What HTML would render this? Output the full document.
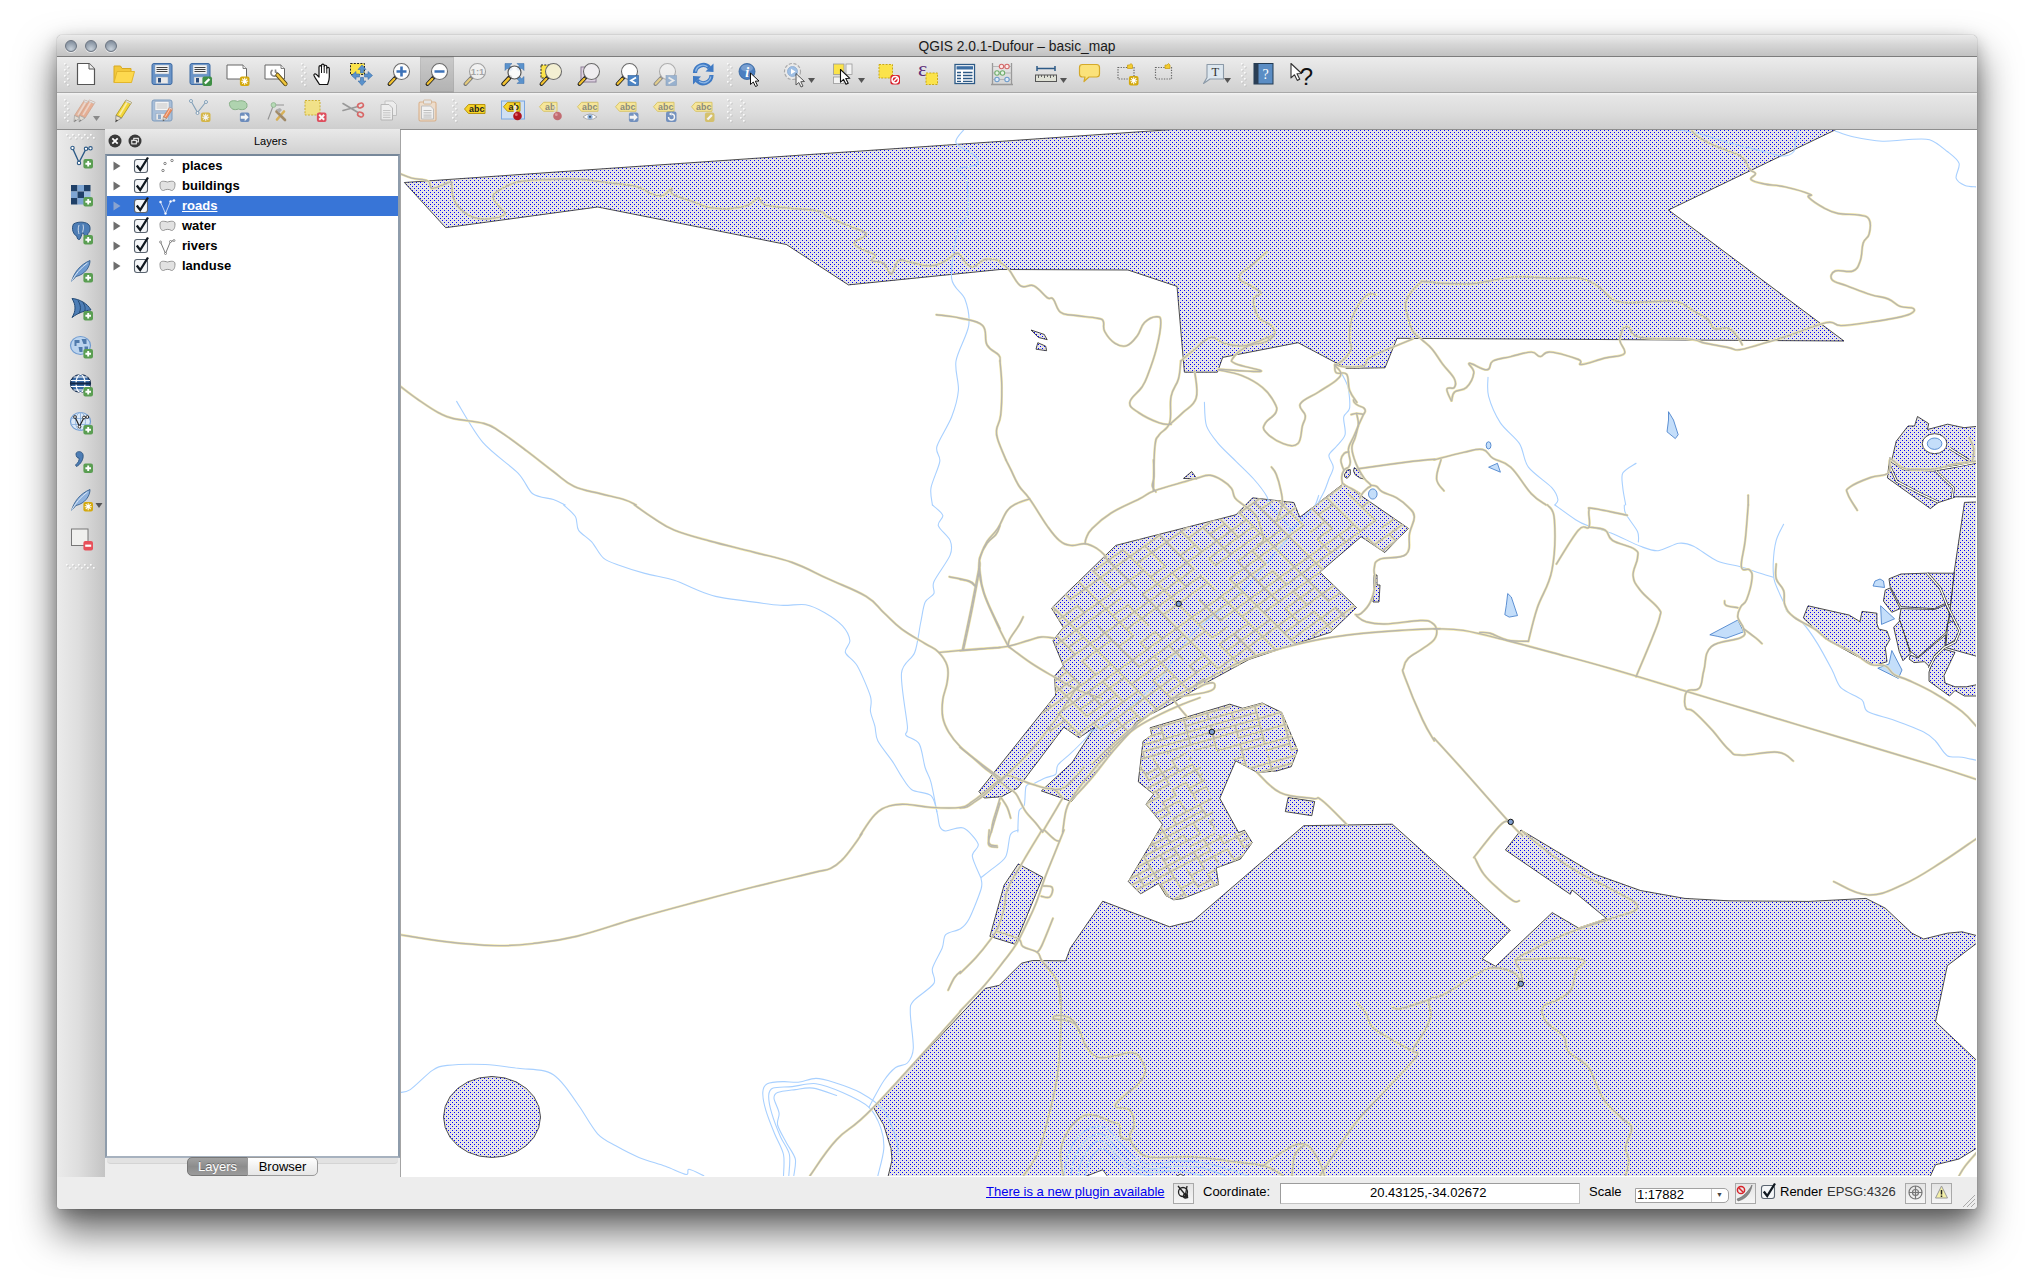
<!DOCTYPE html>
<html lang="en"><head><meta charset="utf-8"><title>QGIS 2.0.1-Dufour - basic_map</title>
<style>

html,body{margin:0;padding:0;background:#fff;}
body{width:2034px;height:1288px;overflow:hidden;position:relative;font-family:"Liberation Sans",sans-serif;color:#000;}
.win{position:absolute;left:57px;top:35px;width:1920px;height:1174px;background:#ededed;border-radius:5px 5px 4px 4px;
 box-shadow:0 0 1px rgba(0,0,0,.55),0 22px 38px 2px rgba(0,0,0,.56),0 6px 16px rgba(0,0,0,.24);overflow:hidden;}
.abs{position:absolute;}
.inner{position:absolute;left:0;top:-1px;width:1920px;height:1175px;}
.title{left:0;top:1px;width:1920px;height:21px;background:linear-gradient(#ebebeb,#d6d6d6 45%,#c2c2c2);border-bottom:1px solid #7c7c7c;
 text-align:center;font-size:13.8px;line-height:23px;color:#1a1a1a;}
.tl{position:absolute;top:5px;width:12px;height:12px;border-radius:6px;box-sizing:border-box;border:1px solid #6b7480;
 background:radial-gradient(circle at 50% 80%,#c7d0d9,#8c98a6 70%,#7e8a98);box-shadow:0 1px 0 rgba(255,255,255,.6);}
.tb1{left:0;top:23px;width:1920px;height:35px;background:linear-gradient(#ececec,#dedede 50%,#d0d0d0);border-bottom:1px solid #a8a8a8;}
.tb2{left:0;top:59px;width:1920px;height:36px;background:linear-gradient(#f4f4f4 0,#e6e6e6 8%,#dcdcdc 55%,#cecece);border-bottom:1px solid #8e8e8e;}
.ltb{left:0;top:96px;width:48px;height:1047px;background:linear-gradient(90deg,#ebebeb,#dedede 45%,#c4c4c4);}
.lhead{left:48px;top:95px;width:259px;padding-left:36px;height:26px;background:linear-gradient(#e9e9e9,#dadada 60%,#cfcfcf);text-align:center;font-size:11px;line-height:24px;}
.lhead span{position:relative;left:0px;}
.llist{left:48px;top:120px;width:291px;height:1000px;background:#fff;border:2px solid #8e9cab;border-top-color:#76879a;border-bottom-color:#a7b2bf;}
.row{position:absolute;left:0;width:291px;height:20px;font-weight:bold;font-size:13px;line-height:20px;}
.row b{position:absolute;left:75px;top:0;font-weight:bold;}
.row.sel{background:#3875d7;color:#fff;}
.row.sel b{text-decoration:underline;}
.tabline{left:50px;top:1124px;width:291px;height:5px;background:#e2e2e2;border-radius:0 0 4px 4px;border-bottom:1px solid #d4d4d4;}
.tab{top:1123px;height:19px;font-size:13px;line-height:18px;text-align:center;border:1px solid #9a9a9a;box-sizing:border-box;}
.tabA{left:130px;width:61px;background:linear-gradient(#a2a2a2,#8c8c8c 50%,#9c9c9c);color:#fff;border-radius:5px 0 0 5px;border-color:#777;text-shadow:0 -1px 0 rgba(0,0,0,.3);}
.tabB{left:190px;width:71px;background:linear-gradient(#fff,#f1f1f1 50%,#e6e6e6);border-radius:0 5px 5px 0;}
.mapframe{left:343px;top:96px;width:1577px;height:1048px;background:#fff;border-left:1px solid #a4a4a4;border-bottom:1px solid #a0a0a0;box-sizing:border-box;}
.status{left:0;top:1143px;width:1920px;height:32px;background:#ededed;border-top:1px solid #ededed;box-sizing:border-box;font-size:13px;}
.status span,.status a{position:absolute;top:6px;line-height:16px;white-space:nowrap;}
.status a{color:#0000ee;text-decoration:underline;}
.box{position:absolute;box-sizing:border-box;border:1px solid #a9a9a9;background:linear-gradient(#e4e4e4,#f6f6f6);}
svg.map{position:absolute;left:401px;top:130px;}
svg.ico{position:absolute;left:0;top:0;}
</style></head><body>
<div class="win"><div class="inner">
<div class="abs title">QGIS 2.0.1-Dufour – basic_map<i class="tl" style="left:8px"></i><i class="tl" style="left:28px"></i><i class="tl" style="left:48px"></i></div>
<div class="abs tb1"></div><div class="abs tb2"></div>
<div class="abs ltb"></div>
<div class="abs lhead"><span>Layers</span></div>
<div class="abs llist">
<div class="row" style="top:0px"><svg width="72" height="20" viewBox="0 0 72 20" style="position:absolute;left:0;top:0"><path d="M6.500,5.500 L13.500,10 L6.500,14.500 Z" fill="#6e6e6e"/><rect x="27.500" y="3.500" width="13" height="13" rx="2.500" fill="#f4f6f8" stroke="#5a6470" stroke-width="1.100"/><path d="M29.800,9.500 L33.200,14 L41,1.500" fill="none" stroke="#101820" stroke-width="2.300" stroke-linejoin="miter"/><g transform="translate(51 2)"><g fill="#fff" stroke="#555" stroke-width=".7"><circle cx="5" cy="12.500" r="1.200"/><circle cx="7" cy="5.500" r="1.200"/><circle cx="14" cy="2.500" r="1.200"/></g></g></svg><b>places</b></div>
<div class="row" style="top:20px"><svg width="72" height="20" viewBox="0 0 72 20" style="position:absolute;left:0;top:0"><path d="M6.500,5.500 L13.500,10 L6.500,14.500 Z" fill="#6e6e6e"/><rect x="27.500" y="3.500" width="13" height="13" rx="2.500" fill="#f4f6f8" stroke="#5a6470" stroke-width="1.100"/><path d="M29.800,9.500 L33.200,14 L41,1.500" fill="none" stroke="#101820" stroke-width="2.300" stroke-linejoin="miter"/><g transform="translate(51 2)"><path d="M2,6 C2,2.500 6,3 9.500,4 C13,3 17,2.500 17,6 C17,9.500 16,12.500 13.500,12.500 C11.500,11 8,11 5.500,12.500 C2.500,12.500 2,9.500 2,6 Z" fill="#e2e2e2" stroke="#8a8a8a" stroke-width=".9"/></g></svg><b>buildings</b></div>
<div class="row sel" style="top:40px"><svg width="72" height="20" viewBox="0 0 72 20" style="position:absolute;left:0;top:0"><path d="M6.500,5.500 L13.500,10 L6.500,14.500 Z" fill="#8aa3cf"/><rect x="27.500" y="3.500" width="13" height="13" rx="2.500" fill="#f4f6f8" stroke="#5a6470" stroke-width="1.100"/><path d="M29.800,9.500 L33.200,14 L41,1.500" fill="none" stroke="#101820" stroke-width="2.300" stroke-linejoin="miter"/><g transform="translate(51 2)"><path d="M2.500,4 L7.500,15.500 L12.500,3.500 L16,2.500" fill="none" stroke="#e8eefc" stroke-width=".8"/><g fill="#fff" stroke="#e8eefc" stroke-width=".6"><circle cx="2.500" cy="4" r="1"/><circle cx="7.500" cy="15.500" r="1"/><circle cx="12.500" cy="3.500" r="1"/><circle cx="16" cy="2.500" r="1"/></g></g></svg><b>roads</b></div>
<div class="row" style="top:60px"><svg width="72" height="20" viewBox="0 0 72 20" style="position:absolute;left:0;top:0"><path d="M6.500,5.500 L13.500,10 L6.500,14.500 Z" fill="#6e6e6e"/><rect x="27.500" y="3.500" width="13" height="13" rx="2.500" fill="#f4f6f8" stroke="#5a6470" stroke-width="1.100"/><path d="M29.800,9.500 L33.200,14 L41,1.500" fill="none" stroke="#101820" stroke-width="2.300" stroke-linejoin="miter"/><g transform="translate(51 2)"><path d="M2,6 C2,2.500 6,3 9.500,4 C13,3 17,2.500 17,6 C17,9.500 16,12.500 13.500,12.500 C11.500,11 8,11 5.500,12.500 C2.500,12.500 2,9.500 2,6 Z" fill="#e2e2e2" stroke="#8a8a8a" stroke-width=".9"/></g></svg><b>water</b></div>
<div class="row" style="top:80px"><svg width="72" height="20" viewBox="0 0 72 20" style="position:absolute;left:0;top:0"><path d="M6.500,5.500 L13.500,10 L6.500,14.500 Z" fill="#6e6e6e"/><rect x="27.500" y="3.500" width="13" height="13" rx="2.500" fill="#f4f6f8" stroke="#5a6470" stroke-width="1.100"/><path d="M29.800,9.500 L33.200,14 L41,1.500" fill="none" stroke="#101820" stroke-width="2.300" stroke-linejoin="miter"/><g transform="translate(51 2)"><path d="M2.500,4 L7.500,15.500 L12.500,3.500 L16,2.500" fill="none" stroke="#555" stroke-width=".8"/><g fill="#fff" stroke="#555" stroke-width=".6"><circle cx="2.500" cy="4" r="1"/><circle cx="7.500" cy="15.500" r="1"/><circle cx="12.500" cy="3.500" r="1"/><circle cx="16" cy="2.500" r="1"/></g></g></svg><b>rivers</b></div>
<div class="row" style="top:100px"><svg width="72" height="20" viewBox="0 0 72 20" style="position:absolute;left:0;top:0"><path d="M6.500,5.500 L13.500,10 L6.500,14.500 Z" fill="#6e6e6e"/><rect x="27.500" y="3.500" width="13" height="13" rx="2.500" fill="#f4f6f8" stroke="#5a6470" stroke-width="1.100"/><path d="M29.800,9.500 L33.200,14 L41,1.500" fill="none" stroke="#101820" stroke-width="2.300" stroke-linejoin="miter"/><g transform="translate(51 2)"><path d="M2,6 C2,2.500 6,3 9.500,4 C13,3 17,2.500 17,6 C17,9.500 16,12.500 13.500,12.500 C11.500,11 8,11 5.500,12.500 C2.500,12.500 2,9.500 2,6 Z" fill="#e2e2e2" stroke="#8a8a8a" stroke-width=".9"/></g></svg><b>landuse</b></div>
</div>
<div class="abs tabline"></div><div class="abs tab tabA">Layers</div><div class="abs tab tabB">Browser</div>
<div class="abs mapframe"></div>
<div class="abs status"><a style="left:929px">There is a new plugin available</a><i class="box" style="left:1116px;top:5px;width:21px;height:21px"></i><span style="left:1146px">Coordinate:</span><i class="box" style="left:1223px;top:5px;width:300px;height:21px;background:#fff;border-color:#9c9c9c #c4c4c4 #c4c4c4 #9c9c9c"></i><span style="left:1313px;top:7px">20.43125,-34.02672</span><span style="left:1532px">Scale</span><i class="box" style="left:1578px;top:10px;width:94px;height:15px;background:#fff;border-radius:0 5px 5px 0;border-color:#a2a2a2"></i><span style="left:1580px;top:9px">1:17882</span><span style="left:1659px;top:9px;font-size:7px;color:#444">▼</span><i style="position:absolute;left:1654px;top:11px;width:1px;height:13px;background:#c8c8c8"></i><i class="box" style="left:1678px;top:5px;width:21px;height:21px"></i><span style="left:1723px">Render</span><span style="left:1770px;color:#333">EPSG:4326</span><i class="box" style="left:1848px;top:5px;width:21px;height:21px"></i><i class="box" style="left:1874px;top:5px;width:21px;height:21px"></i><svg width="1920" height="32" viewBox="57 1177 1920 32" style="position:absolute;left:0;top:-1px"><g fill="none" stroke="#222" stroke-width="1.300"><circle cx="1183" cy="1192" r="4.500"/><path d="M1178,1186 l10,12 M1187,1186 l-2,12"/><circle cx="1185.500" cy="1196" r="2"/></g><path d="M1737,1199 C1743,1197 1748,1192 1752,1185 C1751,1193 1746,1199 1738,1201 Z" fill="#888" stroke="#666" stroke-width=".600"/><circle cx="1741" cy="1190" r="3.600" fill="none" stroke="#d8232a" stroke-width="1.500"/><path d="M1738.500,1187.500 l5,5" stroke="#d8232a" stroke-width="1.500"/><rect x="1761.500" y="1185.500" width="13" height="13" rx="2.500" fill="#f4f6f8" stroke="#5a6470" stroke-width="1.100"/><path d="M1763.800,1191.500 L1767.200,1196 L1775,1183.500" fill="none" stroke="#101820" stroke-width="2.300"/><g fill="none" stroke="#777" stroke-width="1.200"><circle cx="1915.500" cy="1192.500" r="6.500"/><circle cx="1915.500" cy="1192.500" r="3"/><path d="M1909,1192.500 h13 M1915.500,1186 v13"/></g><path d="M1941.500,1186 L1947.500,1198 H1935.500 Z" fill="#f4f0a8" stroke="#999" stroke-width="1" stroke-linejoin="round"/><path d="M1941.500,1190 v4.500 M1941.500,1195.500 v1.500" stroke="#222" stroke-width="1.500"/><path d="M1963,1207 l12,-12 M1967,1207 l8,-8 M1971,1207 l4,-4" stroke="#aaa" stroke-width="1"/></svg></div>
<svg class="ico" width="400" height="30" viewBox="57 126 400 30" style="left:0;top:92px"><circle cx="115" cy="141" r="6.500" fill="#3a3a3a"/><path d="M112.300,138.300 l5.400,5.400 M117.700,138.300 l-5.400,5.400" stroke="#fff" stroke-width="1.800"/><circle cx="135" cy="141" r="6.500" fill="#3a3a3a"/><rect x="133.800" y="138.300" width="4.500" height="3.600" fill="none" stroke="#fff" stroke-width="1"/><rect x="131.800" y="140.300" width="4.500" height="3.600" fill="#3a3a3a" stroke="#fff" stroke-width="1"/></svg>
<svg class="ico" width="1920" height="1175" viewBox="57 34 1920 1175">
<rect x="420.500" y="57" width="33" height="35" fill="#000" opacity=".14"/><rect x="420.500" y="57" width="33" height="35" fill="none" stroke="#000" stroke-opacity=".12"/>
<g><rect x="64.8" y="63.8" width="1.6" height="1.6" fill="#b9b9b9"/><rect x="64" y="63" width="1.7" height="1.7" fill="#fbfbfb"/><rect x="67.8" y="66.8" width="1.6" height="1.6" fill="#b9b9b9"/><rect x="67" y="66" width="1.7" height="1.7" fill="#fbfbfb"/><rect x="64.8" y="69.8" width="1.6" height="1.6" fill="#b9b9b9"/><rect x="64" y="69" width="1.7" height="1.7" fill="#fbfbfb"/><rect x="67.8" y="72.8" width="1.6" height="1.6" fill="#b9b9b9"/><rect x="67" y="72" width="1.7" height="1.7" fill="#fbfbfb"/><rect x="64.8" y="75.8" width="1.6" height="1.6" fill="#b9b9b9"/><rect x="64" y="75" width="1.7" height="1.7" fill="#fbfbfb"/><rect x="67.8" y="78.8" width="1.6" height="1.6" fill="#b9b9b9"/><rect x="67" y="78" width="1.7" height="1.7" fill="#fbfbfb"/><rect x="64.8" y="81.8" width="1.6" height="1.6" fill="#b9b9b9"/><rect x="64" y="81" width="1.7" height="1.7" fill="#fbfbfb"/><rect x="67.8" y="84.8" width="1.6" height="1.6" fill="#b9b9b9"/><rect x="67" y="84" width="1.7" height="1.7" fill="#fbfbfb"/></g><g><rect x="301.8" y="63.8" width="1.6" height="1.6" fill="#b9b9b9"/><rect x="301" y="63" width="1.7" height="1.7" fill="#fbfbfb"/><rect x="304.8" y="66.8" width="1.6" height="1.6" fill="#b9b9b9"/><rect x="304" y="66" width="1.7" height="1.7" fill="#fbfbfb"/><rect x="301.8" y="69.8" width="1.6" height="1.6" fill="#b9b9b9"/><rect x="301" y="69" width="1.7" height="1.7" fill="#fbfbfb"/><rect x="304.8" y="72.8" width="1.6" height="1.6" fill="#b9b9b9"/><rect x="304" y="72" width="1.7" height="1.7" fill="#fbfbfb"/><rect x="301.8" y="75.8" width="1.6" height="1.6" fill="#b9b9b9"/><rect x="301" y="75" width="1.7" height="1.7" fill="#fbfbfb"/><rect x="304.8" y="78.8" width="1.6" height="1.6" fill="#b9b9b9"/><rect x="304" y="78" width="1.7" height="1.7" fill="#fbfbfb"/><rect x="301.8" y="81.8" width="1.6" height="1.6" fill="#b9b9b9"/><rect x="301" y="81" width="1.7" height="1.7" fill="#fbfbfb"/><rect x="304.8" y="84.8" width="1.6" height="1.6" fill="#b9b9b9"/><rect x="304" y="84" width="1.7" height="1.7" fill="#fbfbfb"/></g><g><rect x="727.8" y="63.8" width="1.6" height="1.6" fill="#b9b9b9"/><rect x="727" y="63" width="1.7" height="1.7" fill="#fbfbfb"/><rect x="730.8" y="66.8" width="1.6" height="1.6" fill="#b9b9b9"/><rect x="730" y="66" width="1.7" height="1.7" fill="#fbfbfb"/><rect x="727.8" y="69.8" width="1.6" height="1.6" fill="#b9b9b9"/><rect x="727" y="69" width="1.7" height="1.7" fill="#fbfbfb"/><rect x="730.8" y="72.8" width="1.6" height="1.6" fill="#b9b9b9"/><rect x="730" y="72" width="1.7" height="1.7" fill="#fbfbfb"/><rect x="727.8" y="75.8" width="1.6" height="1.6" fill="#b9b9b9"/><rect x="727" y="75" width="1.7" height="1.7" fill="#fbfbfb"/><rect x="730.8" y="78.8" width="1.6" height="1.6" fill="#b9b9b9"/><rect x="730" y="78" width="1.7" height="1.7" fill="#fbfbfb"/><rect x="727.8" y="81.8" width="1.6" height="1.6" fill="#b9b9b9"/><rect x="727" y="81" width="1.7" height="1.7" fill="#fbfbfb"/><rect x="730.8" y="84.8" width="1.6" height="1.6" fill="#b9b9b9"/><rect x="730" y="84" width="1.7" height="1.7" fill="#fbfbfb"/></g><g><rect x="1241.8" y="63.8" width="1.6" height="1.6" fill="#b9b9b9"/><rect x="1241" y="63" width="1.7" height="1.7" fill="#fbfbfb"/><rect x="1244.8" y="66.8" width="1.6" height="1.6" fill="#b9b9b9"/><rect x="1244" y="66" width="1.7" height="1.7" fill="#fbfbfb"/><rect x="1241.8" y="69.8" width="1.6" height="1.6" fill="#b9b9b9"/><rect x="1241" y="69" width="1.7" height="1.7" fill="#fbfbfb"/><rect x="1244.8" y="72.8" width="1.6" height="1.6" fill="#b9b9b9"/><rect x="1244" y="72" width="1.7" height="1.7" fill="#fbfbfb"/><rect x="1241.8" y="75.8" width="1.6" height="1.6" fill="#b9b9b9"/><rect x="1241" y="75" width="1.7" height="1.7" fill="#fbfbfb"/><rect x="1244.8" y="78.8" width="1.6" height="1.6" fill="#b9b9b9"/><rect x="1244" y="78" width="1.7" height="1.7" fill="#fbfbfb"/><rect x="1241.8" y="81.8" width="1.6" height="1.6" fill="#b9b9b9"/><rect x="1241" y="81" width="1.7" height="1.7" fill="#fbfbfb"/><rect x="1244.8" y="84.8" width="1.6" height="1.6" fill="#b9b9b9"/><rect x="1244" y="84" width="1.7" height="1.7" fill="#fbfbfb"/></g><g><rect x="64.8" y="99.8" width="1.6" height="1.6" fill="#b9b9b9"/><rect x="64" y="99" width="1.7" height="1.7" fill="#fbfbfb"/><rect x="67.8" y="102.8" width="1.6" height="1.6" fill="#b9b9b9"/><rect x="67" y="102" width="1.7" height="1.7" fill="#fbfbfb"/><rect x="64.8" y="105.8" width="1.6" height="1.6" fill="#b9b9b9"/><rect x="64" y="105" width="1.7" height="1.7" fill="#fbfbfb"/><rect x="67.8" y="108.8" width="1.6" height="1.6" fill="#b9b9b9"/><rect x="67" y="108" width="1.7" height="1.7" fill="#fbfbfb"/><rect x="64.8" y="111.8" width="1.6" height="1.6" fill="#b9b9b9"/><rect x="64" y="111" width="1.7" height="1.7" fill="#fbfbfb"/><rect x="67.8" y="114.8" width="1.6" height="1.6" fill="#b9b9b9"/><rect x="67" y="114" width="1.7" height="1.7" fill="#fbfbfb"/><rect x="64.8" y="117.8" width="1.6" height="1.6" fill="#b9b9b9"/><rect x="64" y="117" width="1.7" height="1.7" fill="#fbfbfb"/><rect x="67.8" y="120.8" width="1.6" height="1.6" fill="#b9b9b9"/><rect x="67" y="120" width="1.7" height="1.7" fill="#fbfbfb"/></g><g><rect x="452.8" y="99.8" width="1.6" height="1.6" fill="#b9b9b9"/><rect x="452" y="99" width="1.7" height="1.7" fill="#fbfbfb"/><rect x="455.8" y="102.8" width="1.6" height="1.6" fill="#b9b9b9"/><rect x="455" y="102" width="1.7" height="1.7" fill="#fbfbfb"/><rect x="452.8" y="105.8" width="1.6" height="1.6" fill="#b9b9b9"/><rect x="452" y="105" width="1.7" height="1.7" fill="#fbfbfb"/><rect x="455.8" y="108.8" width="1.6" height="1.6" fill="#b9b9b9"/><rect x="455" y="108" width="1.7" height="1.7" fill="#fbfbfb"/><rect x="452.8" y="111.8" width="1.6" height="1.6" fill="#b9b9b9"/><rect x="452" y="111" width="1.7" height="1.7" fill="#fbfbfb"/><rect x="455.8" y="114.8" width="1.6" height="1.6" fill="#b9b9b9"/><rect x="455" y="114" width="1.7" height="1.7" fill="#fbfbfb"/><rect x="452.8" y="117.8" width="1.6" height="1.6" fill="#b9b9b9"/><rect x="452" y="117" width="1.7" height="1.7" fill="#fbfbfb"/><rect x="455.8" y="120.8" width="1.6" height="1.6" fill="#b9b9b9"/><rect x="455" y="120" width="1.7" height="1.7" fill="#fbfbfb"/></g><g><rect x="727.8" y="99.8" width="1.6" height="1.6" fill="#b9b9b9"/><rect x="727" y="99" width="1.7" height="1.7" fill="#fbfbfb"/><rect x="730.8" y="102.8" width="1.6" height="1.6" fill="#b9b9b9"/><rect x="730" y="102" width="1.7" height="1.7" fill="#fbfbfb"/><rect x="727.8" y="105.8" width="1.6" height="1.6" fill="#b9b9b9"/><rect x="727" y="105" width="1.7" height="1.7" fill="#fbfbfb"/><rect x="730.8" y="108.8" width="1.6" height="1.6" fill="#b9b9b9"/><rect x="730" y="108" width="1.7" height="1.7" fill="#fbfbfb"/><rect x="727.8" y="111.8" width="1.6" height="1.6" fill="#b9b9b9"/><rect x="727" y="111" width="1.7" height="1.7" fill="#fbfbfb"/><rect x="730.8" y="114.8" width="1.6" height="1.6" fill="#b9b9b9"/><rect x="730" y="114" width="1.7" height="1.7" fill="#fbfbfb"/><rect x="727.8" y="117.8" width="1.6" height="1.6" fill="#b9b9b9"/><rect x="727" y="117" width="1.7" height="1.7" fill="#fbfbfb"/><rect x="730.8" y="120.8" width="1.6" height="1.6" fill="#b9b9b9"/><rect x="730" y="120" width="1.7" height="1.7" fill="#fbfbfb"/></g><g><rect x="740.8" y="99.8" width="1.6" height="1.6" fill="#b9b9b9"/><rect x="740" y="99" width="1.7" height="1.7" fill="#fbfbfb"/><rect x="743.8" y="102.8" width="1.6" height="1.6" fill="#b9b9b9"/><rect x="743" y="102" width="1.7" height="1.7" fill="#fbfbfb"/><rect x="740.8" y="105.8" width="1.6" height="1.6" fill="#b9b9b9"/><rect x="740" y="105" width="1.7" height="1.7" fill="#fbfbfb"/><rect x="743.8" y="108.8" width="1.6" height="1.6" fill="#b9b9b9"/><rect x="743" y="108" width="1.7" height="1.7" fill="#fbfbfb"/><rect x="740.8" y="111.8" width="1.6" height="1.6" fill="#b9b9b9"/><rect x="740" y="111" width="1.7" height="1.7" fill="#fbfbfb"/><rect x="743.8" y="114.8" width="1.6" height="1.6" fill="#b9b9b9"/><rect x="743" y="114" width="1.7" height="1.7" fill="#fbfbfb"/><rect x="740.8" y="117.8" width="1.6" height="1.6" fill="#b9b9b9"/><rect x="740" y="117" width="1.7" height="1.7" fill="#fbfbfb"/><rect x="743.8" y="120.8" width="1.6" height="1.6" fill="#b9b9b9"/><rect x="743" y="120" width="1.7" height="1.7" fill="#fbfbfb"/></g><g transform="translate(74 62) scale(1)"><path d="M3.5,1.5 H15 L20.5,7 V22.5 H3.5 Z" fill="#fff" stroke="#555" stroke-width="1.2" stroke-linejoin="round"/><path d="M15,1.5 V7 H20.5" fill="#eee" stroke="#555" stroke-width="1"/></g>
<g transform="translate(111.5 62) scale(1)"><path d="M2.5,4 H9 L10.5,6.5 H19.5 V20.5 H2.5 Z" fill="#f2c83c" stroke="#d8a920" stroke-width="1"/><path d="M5.5,9.5 H23 L20,20.5 H2.5 Z" fill="#fdd94f" stroke="#e2b62c" stroke-width="1" stroke-linejoin="round"/></g>
<g transform="translate(150 62) scale(1)"><rect x="2" y="1.5" width="20" height="21" rx="2" fill="#6a94c8" stroke="#3d6aa3" stroke-width="1"/><rect x="5" y="3" width="14" height="9" fill="#f4f4f4" stroke="#8fa3bd" stroke-width=".5"/><path d="M6.5,5.5 H17.5 M6.5,7.5 H17.5 M6.5,9.5 H17.5" stroke="#444" stroke-width="1"/><rect x="6" y="15" width="12" height="6.5" fill="#e9e9e9" stroke="#8fa3bd" stroke-width=".5"/><rect x="8" y="16" width="3" height="4.5" fill="#2b4c7c"/></g>
<g transform="translate(188 62) scale(1)"><rect x="2" y="1.5" width="20" height="21" rx="2" fill="#6a94c8" stroke="#3d6aa3" stroke-width="1"/><rect x="5" y="3" width="14" height="9" fill="#f4f4f4" stroke="#8fa3bd" stroke-width=".5"/><path d="M6.5,5.5 H17.5 M6.5,7.5 H17.5 M6.5,9.5 H17.5" stroke="#444" stroke-width="1"/><rect x="6" y="15" width="12" height="6.5" fill="#e9e9e9" stroke="#8fa3bd" stroke-width=".5"/><rect x="8" y="16" width="3" height="4.5" fill="#2b4c7c"/><rect x="14.4" y="14.4" width="9.6" height="9.6" rx="2" fill="#3f8f45"/><path d="M16.9,21.5 l4.5,-4.5" stroke="#fff" stroke-width="2.4"/></g>
<g transform="translate(225.5 62) scale(1)"><path d="M1.5,3 H17.5 L21,6.5 V17 H1.5 Z" fill="#fff" stroke="#666" stroke-width="1"/><path d="M17.5,3 V6.5 H21" fill="#eee" stroke="#666" stroke-width=".8"/><rect x="14.4" y="14.4" width="9.6" height="9.6" rx="2" fill="#d4a90d"/><path d="M15.7,19.2 h7 M19.2,15.7 v7 M16.7,16.7 l5,5 M21.7,16.7 l-5,5" stroke="#fff" stroke-width="1.05"/></g>
<g transform="translate(263.5 62) scale(1)"><path d="M1.5,3 H17.5 L21,6.5 V17 H1.5 Z" fill="#fff" stroke="#666" stroke-width="1"/><path d="M17.5,3 V6.5 H21" fill="#eee" stroke="#666" stroke-width=".8"/><path d="M9,8 a3.3,3.3 0 1 0 5,3 l-2,-1 v-2.5" fill="none" stroke="#888" stroke-width="1.6"/><path d="M14,13 L22,22" stroke="#5b4a12" stroke-width="4.2" stroke-linecap="round"/><path d="M14,13 L22,22" stroke="#f0c63c" stroke-width="2.6" stroke-linecap="round"/></g>
<g transform="translate(311.5 62) scale(1)"><path d="M8,22.5 C6,19 3.5,16 2.5,13.5 C2,12 3.6,11.3 4.8,12.4 L7.5,15 V5 C7.5,3.2 10,3.2 10,5 V3.5 C10,1.6 12.7,1.6 12.7,3.5 V4.5 C12.7,2.8 15.3,2.8 15.3,4.6 V6.5 C15.3,5 17.8,5 17.8,6.8 V15 C17.8,18.5 17,20 16,22.5 Z" fill="#fff" stroke="#111" stroke-width="1.2" stroke-linejoin="round"/><path d="M10,5 V11 M12.7,4.5 V11 M15.3,6.5 V11.5" stroke="#111" stroke-width="1"/></g>
<g transform="translate(349 62) scale(1)"><rect x="1.5" y="1.5" width="14" height="11" fill="#fbe34a" stroke="#222" stroke-width="1" stroke-dasharray="2 1.3"/><g fill="#5a92cc" stroke="#3d6fa8" stroke-width=".6"><path d="M13,3 l4,4.5 h-2.5 v3.5 h-3 v-3.5 H9 Z"/><path d="M13,23.5 l4,-4.5 h-2.5 v-3.5 h-3 v3.5 H9 Z"/><path d="M2.5,13.5 l4.5,-4 v2.5 h3.5 v3 h-3.5 v2.5 Z"/><path d="M23.5,13.5 l-4.5,-4 v2.5 h-3.5 v3 h3.5 v2.5 Z"/></g></g>
<g transform="translate(387 62) scale(1)"><path d="M2.5,22 L9,15" stroke="#222" stroke-width="3.9" stroke-linecap="round"/><path d="M2.7,21.8 L7.4,16.8" stroke="#f2c230" stroke-width="2.2" stroke-linecap="round"/><circle cx="14.5" cy="9.5" r="8" fill="#fdfdfd" stroke="#6a6a6a" stroke-width="1.05"/><path d="M9.5,9.5 h10 M14.5,4.5 v10" stroke="#3c72b8" stroke-width="2.6"/></g>
<g transform="translate(425 62) scale(1)"><path d="M2.5,22 L9,15" stroke="#222" stroke-width="3.9" stroke-linecap="round"/><path d="M2.7,21.8 L7.4,16.8" stroke="#f2c230" stroke-width="2.2" stroke-linecap="round"/><circle cx="14.5" cy="9.5" r="8" fill="#fdfdfd" stroke="#6a6a6a" stroke-width="1.05"/><path d="M9.5,9.5 h10" stroke="#3c72b8" stroke-width="2.6"/></g>
<g transform="translate(501 62) scale(1)"><g fill="#5a92cc" stroke="#3d6fa8" stroke-width=".5"><path d="M4,1.5 h7 l-2.3,2.3 3,3 -2.4,2.4 -3,-3 L4,8.5 Z"/><path d="M23,1.5 h-7 l2.3,2.3 -3,3 2.4,2.4 3,-3 L23,8.5 Z"/><path d="M23,21.5 h-7 l2.3,-2.3 -3,-3 2.4,-2.4 3,3 L23,14.5 Z"/></g><path d="M2.5,22 L9,15" stroke="#222" stroke-width="4.4" stroke-linecap="round"/><path d="M2.7,21.8 L7.6,16.6" stroke="#f2c230" stroke-width="2.6" stroke-linecap="round"/><circle cx="13.5" cy="10.5" r="6.5" fill="#fff" fill-opacity=".85" stroke="#555" stroke-width="1.2"/></g>
<g transform="translate(539 62) scale(1)"><rect x="2" y="3" width="13" height="13" fill="#fbe34a" stroke="#222" stroke-width="1" stroke-dasharray="2 1.3"/><path d="M2.5,22 L9,15" stroke="#222" stroke-width="3.9" stroke-linecap="round"/><path d="M2.7,21.8 L7.4,16.8" stroke="#f2c230" stroke-width="2.2" stroke-linecap="round"/><circle cx="14.5" cy="9.5" r="8" fill="#f3efd2" stroke="#6a6a6a" stroke-width="1.05"/></g>
<g transform="translate(577 62) scale(1)"><rect x="4" y="5" width="15" height="15" fill="#dccfe0" stroke="#8d7f96" stroke-width="1"/><path d="M2.5,22 L9,15" stroke="#222" stroke-width="3.9" stroke-linecap="round"/><path d="M2.7,21.8 L7.4,16.8" stroke="#f2c230" stroke-width="2.2" stroke-linecap="round"/><circle cx="14.5" cy="9.5" r="8" fill="#efedf0" stroke="#6a6a6a" stroke-width="1.05"/></g>
<g transform="translate(615 62) scale(1)"><path d="M2.5,22 L9,15" stroke="#222" stroke-width="3.9" stroke-linecap="round"/><path d="M2.7,21.8 L7.4,16.8" stroke="#f2c230" stroke-width="2.2" stroke-linecap="round"/><circle cx="14.5" cy="9.5" r="8" fill="#fdfdfd" stroke="#6a6a6a" stroke-width="1.05"/><rect x="13" y="13.5" width="10.5" height="10" fill="#4c84c4" stroke="#2f5f9a" stroke-width=".6"/><path d="M21,15.5 l-5,3 5,3" fill="none" stroke="#fff" stroke-width="1.8"/></g>
<g transform="translate(691 62) scale(1)"><g fill="none" stroke="#3f7ac4" stroke-width="4.2"><path d="M4,11 A8.3,8.3 0 0 1 18.5,5.8"/><path d="M20.5,13 A8.3,8.3 0 0 1 6,18.4"/></g><path d="M14.5,9.5 L22.5,1.5 V10 Z" fill="#3f7ac4"/><path d="M10,14.5 L2,22.5 V14 Z" fill="#3f7ac4"/><g fill="none" stroke="#8db7e6" stroke-width="1.4"><path d="M4.6,9.5 A7.4,7.4 0 0 1 16.5,4.8"/><path d="M19.8,14.5 A7.4,7.4 0 0 1 8,19.3"/></g></g>
<g transform="translate(738 62) scale(1)"><circle cx="9" cy="9.5" r="8" fill="#4c7fc0" stroke="#2f5f9a" stroke-width=".8"/><ellipse cx="9" cy="6" rx="6" ry="3.6" fill="#fff" opacity=".25"/><text x="9.3" y="14.8" font-size="14" font-weight="bold" font-style="italic" text-anchor="middle" fill="#fff" font-family="Liberation Serif,serif">i</text><g transform="translate(12.5 11)"><path d="M0,0 L0,11.5 L2.8,9 L5,13.5 L7,12.6 L4.8,8.2 L8.5,8 Z" fill="#fff" stroke="#111" stroke-width="1" stroke-linejoin="round"/></g></g>
<g transform="translate(783 62) scale(1)"><circle cx="9.5" cy="9.5" r="8" fill="#e9e9e9" stroke="#aaa" stroke-width="1.2" stroke-dasharray="3.2 1.6"/><circle cx="9.5" cy="9.5" r="5" fill="#9fbfe4" stroke="#8aa9cf" stroke-width=".8"/><path d="M8,6.8 L12.5,9.5 L8,12.2 Z" fill="#fff"/><g transform="translate(13 11.5)" opacity=".65"><path d="M0,0 L0,11.5 L2.8,9 L5,13.5 L7,12.6 L4.8,8.2 L8.5,8 Z" fill="#fff" stroke="#111" stroke-width="1" stroke-linejoin="round"/></g></g>
<g transform="translate(832 62) scale(1)"><rect x="1.5" y="2" width="10.5" height="10.5" fill="#fbe34a" stroke="#999" stroke-width=".8"/><rect x="14" y="2" width="6" height="10.5" fill="#f3f3f3" stroke="#999" stroke-width=".8"/><rect x="1.5" y="15" width="10.5" height="6.5" fill="#f3f3f3" stroke="#999" stroke-width=".8"/><g transform="translate(8.5 7.5) scale(1.1)"><path d="M0,0 L0,11.5 L2.8,9 L5,13.5 L7,12.6 L4.8,8.2 L8.5,8 Z" fill="#fff" stroke="#111" stroke-width="1" stroke-linejoin="round"/></g></g>
<g transform="translate(877.5 62) scale(1)"><rect x="1.5" y="2.5" width="13.5" height="13.5" fill="#fbe34a" stroke="#c8a818" stroke-width="1" stroke-dasharray="2 1.3"/><rect x="12.9" y="12.9" width="9.6" height="9.6" rx="2" fill="#d9202c"/><circle cx="17.7" cy="17.7" r="3.2" fill="none" stroke="#fff" stroke-width="1.5"/><path d="M15.7,19.7 l4,-4" stroke="#fff" stroke-width="1.5"/></g>
<g transform="translate(915.5 62) scale(1)"><text x="7" y="14" font-size="22" text-anchor="middle" fill="#5c2d79" font-family="Liberation Serif,serif">ε</text><rect x="10.5" y="11" width="11.5" height="11.5" fill="#fbe34a" stroke="#c8a818" stroke-width="1" stroke-dasharray="2 1.3"/></g>
<g transform="translate(952.5 62) scale(1)"><rect x="2.5" y="2.5" width="19.5" height="19" fill="#fff" stroke="#2d5a86" stroke-width="1.3"/><rect x="4" y="4.2" width="16.5" height="3.3" fill="#3c6ea3"/><path d="M4.5,10.5 h4 M4.5,13.5 h4 M4.5,16.5 h4 M4.5,19.3 h4 M10.5,10.5 h9.5 M10.5,13.5 h9.5 M10.5,16.5 h9.5 M10.5,19.3 h9.5" stroke="#2d5a86" stroke-width="1.3"/></g>
<g transform="translate(990 62) scale(1)"><path d="M2.5,1 V23 M21.5,1 V23 M1,22.5 H23" stroke="#999" stroke-width="1.3" fill="none"/><path d="M2.5,4.5 H21.5 M2.5,11 H21.5 M2.5,17.5 H21.5" stroke="#aaa" stroke-width=".8"/><g fill="#fbe7e7" stroke="#d36868" stroke-width="1.1"><circle cx="11.5" cy="4.5" r="2.2"/><circle cx="17" cy="4.5" r="2.2"/></g><g fill="#e6f3e4" stroke="#72ad6e" stroke-width="1.1"><circle cx="7" cy="11" r="2.2"/><circle cx="12.5" cy="11" r="2.2"/></g><g fill="#dfeaf6" stroke="#6f9ccb" stroke-width="1.1"><circle cx="7" cy="17.5" r="2.2"/><circle cx="17" cy="17.5" r="2.2"/></g></g>
<g transform="translate(1034 62) scale(1)"><path d="M3,6.5 H21 M3,4 V9 M21,4 V9" stroke="#2d5a86" stroke-width="1.5" fill="none"/><rect x="1.5" y="13" width="21" height="6.5" fill="#dfe1d6" stroke="#555" stroke-width="1"/><path d="M4.5,13 v3 M7.5,13 v2 M10.5,13 v3 M13.5,13 v2 M16.5,13 v3 M19.5,13 v2" stroke="#555" stroke-width=".9"/></g>
<g transform="translate(1077.5 62) scale(1)"><path d="M5,2.5 H19 Q22,2.5 22,5.5 V12 Q22,15 19,15 H11.5 L6.5,19.5 L7.5,15 H5 Q2,15 2,12 V5.5 Q2,2.5 5,2.5 Z" fill="#fbe27a" stroke="#d4a92a" stroke-width="1.2" stroke-linejoin="round"/></g>
<g transform="translate(1116.5 62) scale(1)"><rect x="1.5" y="5.5" width="16" height="11.5" fill="none" stroke="#666" stroke-width="1.2" stroke-dasharray="1.3 1.3"/><path d="M11,6.5 V3 h2 l1.5,-1.5 1.5,1.5 v3.5 Z" fill="#f3cc30" stroke="#c49a10" stroke-width=".7"/><rect x="12.4" y="13.9" width="9.6" height="9.6" rx="2" fill="#d4a90d"/><path d="M13.7,18.7 h7 M17.2,15.2 v7 M14.7,16.2 l5,5 M19.7,16.2 l-5,5" stroke="#fff" stroke-width="1.05"/></g>
<g transform="translate(1154 62) scale(1)"><rect x="1.5" y="5.5" width="16" height="11.5" fill="none" stroke="#666" stroke-width="1.2" stroke-dasharray="1.3 1.3"/><path d="M11,6.5 V3 h2 l1.5,-1.5 1.5,1.5 v3.5 Z" fill="#f3cc30" stroke="#c49a10" stroke-width=".7"/></g>
<g transform="translate(1201 62) scale(1)"><path d="M6,2.5 H22.5 V17 H9 L2.5,21.5 L6,15.5 Z" fill="#dde7ef" stroke="#8c9aa8" stroke-width="1.1" stroke-linejoin="round"/><text x="14.3" y="14.3" font-size="12.5" text-anchor="middle" fill="#333" font-family="Liberation Serif,serif">T</text></g>
<g transform="translate(1251 62) scale(1)"><rect x="3" y="1.5" width="19" height="20.5" fill="#5b8dc4" stroke="#233a52" stroke-width="1"/><rect x="3" y="1.5" width="4.5" height="20.5" fill="#2a3e55"/><text x="14.5" y="16.5" font-size="14" text-anchor="middle" fill="#fff" font-family="Liberation Serif,serif">?</text></g>
<g transform="translate(1288.5 62) scale(1)"><g transform="translate(2.5 1.5) scale(1.25)"><path d="M0,0 L0,11.5 L2.8,9 L5,13.5 L7,12.6 L4.8,8.2 L8.5,8 Z" fill="#fff" stroke="#333" stroke-width=".9" stroke-linejoin="round"/></g><text x="18" y="22.5" font-size="24" text-anchor="middle" fill="#111" font-family="Liberation Sans,sans-serif">?</text></g>
<g transform="translate(463 62) scale(1)" opacity="0.55"><path d="M2.5,22 L9,15" stroke="#222" stroke-width="3.9" stroke-linecap="round"/><path d="M2.7,21.8 L7.4,16.8" stroke="#f2c230" stroke-width="2.2" stroke-linecap="round"/><circle cx="14.5" cy="9.5" r="8" fill="#fdfdfd" stroke="#6a6a6a" stroke-width="1.05"/><text x="14.5" y="13.3" font-size="9.5" font-weight="bold" text-anchor="middle" fill="#777" font-family="Liberation Sans,sans-serif">1:1</text></g>
<g transform="translate(653 62) scale(1)" opacity="0.45"><path d="M2.5,22 L9,15" stroke="#222" stroke-width="3.9" stroke-linecap="round"/><path d="M2.7,21.8 L7.4,16.8" stroke="#f2c230" stroke-width="2.2" stroke-linecap="round"/><circle cx="14.5" cy="9.5" r="8" fill="#fdfdfd" stroke="#6a6a6a" stroke-width="1.05"/><rect x="13" y="13.5" width="10.5" height="10" fill="#4c84c4" stroke="#2f5f9a" stroke-width=".6"/><path d="M15.5,15.5 l5,3 -5,3" fill="none" stroke="#fff" stroke-width="1.8"/></g>
<g transform="translate(808 78)"><path d="M0,0 L7,0 L3.5,5 Z" fill="#555"/></g>
<g transform="translate(858 78)"><path d="M0,0 L7,0 L3.5,5 Z" fill="#555"/></g>
<g transform="translate(1060 78)"><path d="M0,0 L7,0 L3.5,5 Z" fill="#555"/></g>
<g transform="translate(1224 78)"><path d="M0,0 L7,0 L3.5,5 Z" fill="#555"/></g>
<g transform="translate(74 98.5) scale(1)" opacity="0.55"><g transform="translate(-3 0) scale(1)"><path d="M13.5,1.5 L19,4 L9,19.5 L3.5,17 Z" fill="#e8956a" stroke="#c8754a" stroke-width=".8"/><path d="M15,3 L7,16.5" stroke="#fff" stroke-opacity=".55" stroke-width="1.6"/><path d="M3.5,17 L9,19.5 L3,23.5 Z" fill="#e8e0d0" stroke="#777" stroke-width=".7"/><path d="M4,21 L5.6,21.8 L3,23.5 Z" fill="#333"/><path d="M13.5,1.5 L19,4 L18.2,5.3 L12.7,2.8Z" fill="#f4f4f4" stroke="#999" stroke-width=".5"/></g><g transform="translate(2 0) scale(1)"><path d="M13.5,1.5 L19,4 L9,19.5 L3.5,17 Z" fill="#ee8a5a" stroke="#c8754a" stroke-width=".8"/><path d="M15,3 L7,16.5" stroke="#fff" stroke-opacity=".55" stroke-width="1.6"/><path d="M3.5,17 L9,19.5 L3,23.5 Z" fill="#e8e0d0" stroke="#777" stroke-width=".7"/><path d="M4,21 L5.6,21.8 L3,23.5 Z" fill="#333"/><path d="M13.5,1.5 L19,4 L18.2,5.3 L12.7,2.8Z" fill="#f4f4f4" stroke="#999" stroke-width=".5"/></g></g>
<g transform="translate(111.5 98.5) scale(1)"><g transform="translate(1 0) scale(1)"><path d="M13.5,1.5 L19,4 L9,19.5 L3.5,17 Z" fill="#f2d63a" stroke="#a8901a" stroke-width=".8"/><path d="M15,3 L7,16.5" stroke="#fff" stroke-opacity=".55" stroke-width="1.6"/><path d="M3.5,17 L9,19.5 L3,23.5 Z" fill="#e8e0d0" stroke="#777" stroke-width=".7"/><path d="M4,21 L5.6,21.8 L3,23.5 Z" fill="#333"/><path d="M13.5,1.5 L19,4 L18.2,5.3 L12.7,2.8Z" fill="#f4f4f4" stroke="#999" stroke-width=".5"/></g></g>
<g transform="translate(150 98.5) scale(1)"><rect x="2" y="1.5" width="20" height="21" rx="2" fill="#a9bfd9" stroke="#7f9cbd" stroke-width="1"/><rect x="5" y="3" width="14" height="9" fill="#f4f4f4" stroke="#8fa3bd" stroke-width=".5"/><path d="M6.5,5.5 H17.5 M6.5,7.5 H17.5 M6.5,9.5 H17.5" stroke="#c4c4c4" stroke-width="1"/><rect x="6" y="15" width="12" height="6.5" fill="#e9e9e9" stroke="#8fa3bd" stroke-width=".5"/><rect x="8" y="16" width="3" height="4.5" fill="#8fa9c9"/><g transform="translate(11 8) scale(0.62)"><path d="M13.5,1.5 L19,4 L9,19.5 L3.5,17 Z" fill="#ee8a5a" stroke="#c8754a" stroke-width=".8"/><path d="M15,3 L7,16.5" stroke="#fff" stroke-opacity=".55" stroke-width="1.6"/><path d="M3.5,17 L9,19.5 L3,23.5 Z" fill="#e8e0d0" stroke="#777" stroke-width=".7"/><path d="M4,21 L5.6,21.8 L3,23.5 Z" fill="#333"/><path d="M13.5,1.5 L19,4 L18.2,5.3 L12.7,2.8Z" fill="#f4f4f4" stroke="#999" stroke-width=".5"/></g></g>
<g transform="translate(188.5 98.5) scale(1)" opacity="0.7"><path d="M2.5,2.5 L9,14 L17,4" fill="none" stroke="#5d86a8" stroke-width="1.1"/><g fill="#fff" stroke="#5d86a8" stroke-width="1"><circle cx="2.5" cy="2.5" r="1.5"/><circle cx="9" cy="14.5" r="1.5"/><circle cx="17.5" cy="3.5" r="1.5"/></g><rect x="12.4" y="13.9" width="9.6" height="9.6" rx="2" fill="#d4a90d"/><path d="M13.7,18.7 h7 M17.2,15.2 v7 M14.7,16.2 l5,5 M19.7,16.2 l-5,5" stroke="#fff" stroke-width="1.05"/></g>
<g transform="translate(226.5 98.5) scale(1)" opacity="0.75"><path d="M3,6 C2,2 8,1.5 11,3 C15,1 21,3 20.5,7 C21,11 15,12 12,10.5 C8,12 4,11 3,6 Z" fill="#9fcf9f" stroke="#6aa06a" stroke-width="1"/><rect x="13.4" y="13.9" width="9.6" height="9.6" rx="2" fill="#4a74b4"/><path d="M14.2,17.2 h4 v-2.5 l4,4 l-4,4 v-2.5 h-4 Z" fill="#fff"/></g>
<g transform="translate(265 98.5) scale(1)" opacity="0.7"><path d="M3,21 L8.5,6.5 H19" fill="none" stroke="#777" stroke-width="1.1"/><circle cx="8.5" cy="6.5" r="2.4" fill="#a5d8a5" stroke="#6aa06a" stroke-width=".8"/><path d="M12,21 L19,13" stroke="#d8a020" stroke-width="2.6" stroke-linecap="round"/><path d="M11.5,13 L20,21.5" stroke="#8a6a3a" stroke-width="2.6" stroke-linecap="round"/><path d="M11,11 l4,-1.5 2,2 -3,3 z" fill="#999"/></g>
<g transform="translate(303.5 98.5) scale(1)" opacity="0.85"><rect x="1.5" y="2" width="15" height="14.5" fill="#f5e27a" stroke="#c8a818" stroke-width="1" stroke-dasharray="2 1.3"/><rect x="13.4" y="13.9" width="9.6" height="9.6" rx="2" fill="#e0384a"/><path d="M15.7,16.2 l5,5 M20.7,16.2 l-5,5" stroke="#fff" stroke-width="2"/></g>
<g transform="translate(341 98.5) scale(1)" opacity="0.8"><path d="M2,5 L17,14 M2,12 L17,8" stroke="#888" stroke-width="1.6" stroke-linecap="round"/><ellipse cx="19.5" cy="7" rx="3" ry="2.2" fill="none" stroke="#d84a4a" stroke-width="1.6" transform="rotate(-25 19.5 7)"/><ellipse cx="19.5" cy="16" rx="3" ry="2.2" fill="none" stroke="#d84a4a" stroke-width="1.6" transform="rotate(25 19.5 16)"/></g>
<g transform="translate(377 98.5) scale(1)" opacity="0.55"><path d="M8,2.5 H16 L19.5,6 V17 H8 Z" fill="#f7f7f7" stroke="#aaa" stroke-width="1"/><path d="M4,6 H12 L15.5,9.5 V21.5 H4 Z" fill="#fafafa" stroke="#999" stroke-width="1"/><path d="M6,12 h7.5 M6,14.3 h7.5 M6,16.6 h7.5 M6,18.9 h7.5" stroke="#aaa" stroke-width=".9"/></g>
<g transform="translate(415.5 98.5) scale(1)" opacity="0.7"><rect x="3.5" y="3.5" width="17" height="19" rx="1.5" fill="#f3dcc4" stroke="#d9a06a" stroke-width="1.1"/><rect x="8" y="1.5" width="8" height="4" rx="1" fill="#e8e8e8" stroke="#c89a6a" stroke-width=".8"/><path d="M6,7.5 H15 L18,10.5 V20.5 H6 Z" fill="#fafafa" stroke="#aaa" stroke-width=".9"/><path d="M8,12 h8 M8,14.3 h8 M8,16.6 h8 M8,18.5 h8" stroke="#999" stroke-width=".8"/></g>
<g transform="translate(463 98.5) scale(1)"><g transform="translate(0 3)"><path d="M1.5,7.5 L5.5,3 H22 V12 H5.5 Z" fill="#f6d428" stroke="#b89510" stroke-width="1" stroke-linejoin="round"/><text x="13.7" y="10.6" font-size="8.8" font-weight="bold" text-anchor="middle" fill="#222" font-family="Liberation Sans,sans-serif">abc</text></g></g>
<g transform="translate(501 98.5) scale(1)"><rect x=".5" y="2.5" width="23" height="18" fill="#cfdff2" stroke="#7aa7e0" stroke-width="1"/><g transform="translate(1 .8)"><path d="M1.5,7.5 L5.5,3 H18 V12 H5.5 Z" fill="#f6d428" stroke="#b89510" stroke-width="1" stroke-linejoin="round"/><text x="11.7" y="10.6" font-size="8.8" font-weight="bold" text-anchor="middle" fill="#222" font-family="Liberation Sans,sans-serif">ab</text></g><path d="M14,8 v6" stroke="#fff" stroke-width="2.4" stroke-linecap="round"/><path d="M14,8 v6" stroke="#999" stroke-width=".6"/><circle cx="16.5" cy="17.5" r="4.3" fill="#b0141e"/><circle cx="15.3" cy="16.2" r="1.4" fill="#e06a70"/></g>
<g transform="translate(539 98.5) scale(1)"><g transform="translate(-1 .8)"><path d="M1.5,7.5 L5.5,3 H19 V12 H5.5 Z" fill="#f6e69a" stroke="#d9c56a" stroke-width="1" stroke-linejoin="round"/><text x="12.2" y="10.6" font-size="8.8" font-weight="bold" text-anchor="middle" fill="#8a8a7a" font-family="Liberation Sans,sans-serif">ab</text></g><g transform="translate(2 0)" opacity=".55"><path d="M14,8 v6" stroke="#fff" stroke-width="2.4" stroke-linecap="round"/><path d="M14,8 v6" stroke="#999" stroke-width=".6"/><circle cx="16.5" cy="17.5" r="4.3" fill="#b0141e"/><circle cx="15.3" cy="16.2" r="1.4" fill="#e06a70"/></g></g>
<g transform="translate(577 98.5) scale(1)"><g transform="translate(-1 .8)"><path d="M1.5,7.5 L5.5,3 H22 V12 H5.5 Z" fill="#f6e69a" stroke="#d9c56a" stroke-width="1" stroke-linejoin="round"/><text x="13.7" y="10.6" font-size="8.8" font-weight="bold" text-anchor="middle" fill="#8a8a7a" font-family="Liberation Sans,sans-serif">abc</text></g><path d="M6,18.5 Q13,12.5 20,18.5 Q13,23.5 6,18.5 Z" fill="#fff" stroke="#999" stroke-width=".8"/><circle cx="13" cy="18.3" r="2.6" fill="#8fb2dd"/><circle cx="13" cy="18.3" r="1.1" fill="#456"/></g>
<g transform="translate(615 98.5) scale(1)"><g transform="translate(-1 .8)"><path d="M1.5,7.5 L5.5,3 H22 V12 H5.5 Z" fill="#f6e69a" stroke="#d9c56a" stroke-width="1" stroke-linejoin="round"/><text x="13.7" y="10.6" font-size="8.8" font-weight="bold" text-anchor="middle" fill="#8a8a7a" font-family="Liberation Sans,sans-serif">abc</text></g><g opacity=".7"><rect x="13.9" y="13.9" width="9.6" height="9.6" rx="2" fill="#4a74b4"/><path d="M14.7,17.2 h4 v-2.5 l4,4 l-4,4 v-2.5 h-4 Z" fill="#fff"/></g></g>
<g transform="translate(653 98.5) scale(1)"><g transform="translate(-1 .8)"><path d="M1.5,7.5 L5.5,3 H22 V12 H5.5 Z" fill="#f6e69a" stroke="#d9c56a" stroke-width="1" stroke-linejoin="round"/><text x="13.7" y="10.6" font-size="8.8" font-weight="bold" text-anchor="middle" fill="#8a8a7a" font-family="Liberation Sans,sans-serif">abc</text></g><g opacity=".7"><rect x="13" y="13" width="10.5" height="10.5" rx="2" fill="#4a74b4"/><path d="M15.5,18.5 a3,3 0 1 0 3,-3" fill="none" stroke="#fff" stroke-width="1.4"/><path d="M18.5,13.8 v3.4 l-2.6,-1.7 z" fill="#fff"/></g></g>
<g transform="translate(691 98.5) scale(1)"><g transform="translate(-1 .8)"><path d="M1.5,7.5 L5.5,3 H22 V12 H5.5 Z" fill="#f6e69a" stroke="#d9c56a" stroke-width="1" stroke-linejoin="round"/><text x="13.7" y="10.6" font-size="8.8" font-weight="bold" text-anchor="middle" fill="#8a8a7a" font-family="Liberation Sans,sans-serif">abc</text></g><g opacity=".7"><rect x="13.9" y="13.9" width="9.6" height="9.6" rx="2" fill="#d4b840"/><path d="M16.4,21 l4.5,-4.5" stroke="#fff" stroke-width="2.4"/></g></g>
<g transform="translate(93 116)" opacity=".6"><path d="M0,0 L7,0 L3.5,5 Z" fill="#555"/></g><g><rect x="66.8" y="134.8" width="1.6" height="1.6" fill="#b9b9b9"/><rect x="66" y="134" width="1.7" height="1.7" fill="#fbfbfb"/><rect x="69.8" y="137.8" width="1.6" height="1.6" fill="#b9b9b9"/><rect x="69" y="137" width="1.7" height="1.7" fill="#fbfbfb"/><rect x="72.8" y="134.8" width="1.6" height="1.6" fill="#b9b9b9"/><rect x="72" y="134" width="1.7" height="1.7" fill="#fbfbfb"/><rect x="75.8" y="137.8" width="1.6" height="1.6" fill="#b9b9b9"/><rect x="75" y="137" width="1.7" height="1.7" fill="#fbfbfb"/><rect x="78.8" y="134.8" width="1.6" height="1.6" fill="#b9b9b9"/><rect x="78" y="134" width="1.7" height="1.7" fill="#fbfbfb"/><rect x="81.8" y="137.8" width="1.6" height="1.6" fill="#b9b9b9"/><rect x="81" y="137" width="1.7" height="1.7" fill="#fbfbfb"/><rect x="84.8" y="134.8" width="1.6" height="1.6" fill="#b9b9b9"/><rect x="84" y="134" width="1.7" height="1.7" fill="#fbfbfb"/><rect x="87.8" y="137.8" width="1.6" height="1.6" fill="#b9b9b9"/><rect x="87" y="137" width="1.7" height="1.7" fill="#fbfbfb"/><rect x="90.8" y="134.8" width="1.6" height="1.6" fill="#b9b9b9"/><rect x="90" y="134" width="1.7" height="1.7" fill="#fbfbfb"/><rect x="93.8" y="137.8" width="1.6" height="1.6" fill="#b9b9b9"/><rect x="93" y="137" width="1.7" height="1.7" fill="#fbfbfb"/></g><g><rect x="66.8" y="564.8" width="1.6" height="1.6" fill="#b9b9b9"/><rect x="66" y="564" width="1.7" height="1.7" fill="#fbfbfb"/><rect x="69.8" y="567.8" width="1.6" height="1.6" fill="#b9b9b9"/><rect x="69" y="567" width="1.7" height="1.7" fill="#fbfbfb"/><rect x="72.8" y="564.8" width="1.6" height="1.6" fill="#b9b9b9"/><rect x="72" y="564" width="1.7" height="1.7" fill="#fbfbfb"/><rect x="75.8" y="567.8" width="1.6" height="1.6" fill="#b9b9b9"/><rect x="75" y="567" width="1.7" height="1.7" fill="#fbfbfb"/><rect x="78.8" y="564.8" width="1.6" height="1.6" fill="#b9b9b9"/><rect x="78" y="564" width="1.7" height="1.7" fill="#fbfbfb"/><rect x="81.8" y="567.8" width="1.6" height="1.6" fill="#b9b9b9"/><rect x="81" y="567" width="1.7" height="1.7" fill="#fbfbfb"/><rect x="84.8" y="564.8" width="1.6" height="1.6" fill="#b9b9b9"/><rect x="84" y="564" width="1.7" height="1.7" fill="#fbfbfb"/><rect x="87.8" y="567.8" width="1.6" height="1.6" fill="#b9b9b9"/><rect x="87" y="567" width="1.7" height="1.7" fill="#fbfbfb"/><rect x="90.8" y="564.8" width="1.6" height="1.6" fill="#b9b9b9"/><rect x="90" y="564" width="1.7" height="1.7" fill="#fbfbfb"/><rect x="93.8" y="567.8" width="1.6" height="1.6" fill="#b9b9b9"/><rect x="93" y="567" width="1.7" height="1.7" fill="#fbfbfb"/></g><g transform="translate(69.5 145) scale(1)"><path d="M3,3 L9.5,17.5 L16.5,4 L20,3.5" fill="none" stroke="#2d5a86" stroke-width="1.4"/><g fill="#fff" stroke="#2d5a86" stroke-width="1.1"><circle cx="3" cy="3" r="1.7"/><circle cx="9.5" cy="18" r="1.7"/><circle cx="16.5" cy="3.8" r="1.7"/><circle cx="21" cy="3.3" r="1.7"/></g><rect x="13.9" y="13.9" width="9.6" height="9.6" rx="2" fill="#5a9e52"/><path d="M15.9,18.7 h5.6 M18.7,15.9 v5.6" stroke="#fff" stroke-width="1.9"/></g>
<g transform="translate(69.5 183) scale(1)"><g><rect x="1.5" y="2" width="6.5" height="6.5" fill="#1f4068"/><rect x="8" y="2" width="6.5" height="6.5" fill="#7fa6d4"/><rect x="14.5" y="2" width="6.5" height="6.5" fill="#1f4068"/><rect x="1.5" y="8.5" width="6.5" height="6.5" fill="#7fa6d4"/><rect x="8" y="8.5" width="6.5" height="6.5" fill="#1f4068"/><rect x="14.5" y="8.5" width="6.5" height="6.5" fill="#9dbde0"/><rect x="1.5" y="15" width="6.5" height="6.5" fill="#1f4068"/><rect x="8" y="15" width="6.5" height="6.5" fill="#7fa6d4"/></g><rect x="13.9" y="13.9" width="9.6" height="9.6" rx="2" fill="#5a9e52"/><path d="M15.9,18.7 h5.6 M18.7,15.9 v5.6" stroke="#fff" stroke-width="1.9"/></g>
<g transform="translate(69.5 221) scale(1)"><path d="M4,3 C8,0.5 15,0.5 18.5,3 C21.5,5 21,10.5 18.5,12.5 L17.5,15.5 C16,16.5 14.5,15.5 14.5,13.5 L13,11.5 C12,13.5 11.5,17 10,18.5 C8.5,19 7.5,17.5 7.5,15.5 C4,13.5 1.5,8 4,3 Z" fill="#4d7db5" stroke="#2a527f" stroke-width="1"/><path d="M9.5,4 C8,8 9,11 9.5,13 M13.5,3.5 C14.5,7 13.5,9.5 13,11.5" stroke="#fff" stroke-opacity=".7" stroke-width="1" fill="none"/><rect x="13.9" y="13.9" width="9.6" height="9.6" rx="2" fill="#5a9e52"/><path d="M15.9,18.7 h5.6 M18.7,15.9 v5.6" stroke="#fff" stroke-width="1.9"/></g>
<g transform="translate(69.5 259) scale(1)"><path d="M2,22.5 C4.5,14 10,6 20.5,1.5 C20.5,8 15.5,15.5 6.5,17.5 Z" fill="#6f9bd0" stroke="#35608f" stroke-width=".9"/><path d="M2,22.5 C6,15 11,9 18,4" fill="none" stroke="#dbe8f6" stroke-width="1"/><rect x="13.9" y="13.9" width="9.6" height="9.6" rx="2" fill="#5a9e52"/><path d="M15.9,18.7 h5.6 M18.7,15.9 v5.6" stroke="#fff" stroke-width="1.9"/></g>
<g transform="translate(69.5 297) scale(1)"><path d="M2.5,1.5 C10,2 18,6.5 21.5,13 C16,13.5 9,15.5 2.5,20.5 C6.5,14 6.5,8 2.5,1.5 Z" fill="#4d7db5" stroke="#244a75" stroke-width="1"/><path d="M8.5,3.5 C11.5,8.5 11.5,12.5 9.5,16.5 M13.5,5.5 C16,9.5 16,12 15,14.3" fill="none" stroke="#244a75" stroke-width="1"/><rect x="13.9" y="13.9" width="9.6" height="9.6" rx="2" fill="#5a9e52"/><path d="M15.9,18.7 h5.6 M18.7,15.9 v5.6" stroke="#fff" stroke-width="1.9"/></g>
<g transform="translate(69.5 335) scale(1)"><ellipse cx="11" cy="10.5" rx="10" ry="9" fill="#bcd4ee" stroke="#6f9bd0" stroke-width="1.2"/><path d="M5,5 h5 v3 h-3 v3 h-2 z M12,4 h5 v5 h-3 z M9,12 h4 v5 h-3 z M15,11.5 h3.5 v3 h-3.5z" fill="#3d6a9f" opacity=".85"/><rect x="13.9" y="13.9" width="9.6" height="9.6" rx="2" fill="#5a9e52"/><path d="M15.9,18.7 h5.6 M18.7,15.9 v5.6" stroke="#fff" stroke-width="1.9"/></g>
<g transform="translate(69.5 373) scale(1)"><ellipse cx="11" cy="10.5" rx="10" ry="9" fill="#3a6aa5" stroke="#13294a" stroke-width="1.2"/><path d="M1.5,7.5 H20.500 M1.5,13.5 H20.5 M4,4 H18 M4,17 H18" stroke="#fff" stroke-width="1.2"/><ellipse cx="11" cy="10.500" rx="4.500" ry="9" fill="none" stroke="#fff" stroke-width="1.2"/><path d="M1.200,10.500 H20.800" stroke="#13294a" stroke-width="2.200"/><rect x="13.9" y="13.9" width="9.6" height="9.6" rx="2" fill="#5a9e52"/><path d="M15.9,18.7 h5.6 M18.7,15.9 v5.6" stroke="#fff" stroke-width="1.9"/></g>
<g transform="translate(69.5 411) scale(1)"><ellipse cx="11" cy="10.5" rx="10" ry="9" fill="#dce9f7" stroke="#6f9bd0" stroke-width="1.2"/><path d="M1.5,7.5 H20.5 M1.500,13.500 H20.500 M11,1.500 V19.500" stroke="#8fb2dd" stroke-width=".9"/><ellipse cx="11" cy="10.5" rx="5" ry="9" fill="none" stroke="#8fb2dd" stroke-width=".9"/><path d="M5.500,6 L10,15.500 L14.500,6.500 L17.500,6" fill="none" stroke="#222" stroke-width="1.200"/><g fill="#fff" stroke="#222" stroke-width=".9"><circle cx="5.500" cy="6" r="1.400"/><circle cx="10" cy="15.700" r="1.400"/><circle cx="14.500" cy="6.500" r="1.400"/><circle cx="17.800" cy="6" r="1.400"/></g><rect x="13.9" y="13.9" width="9.6" height="9.6" rx="2" fill="#5a9e52"/><path d="M15.9,18.7 h5.6 M18.7,15.9 v5.6" stroke="#fff" stroke-width="1.9"/></g>
<g transform="translate(69.5 449.5) scale(1)"><path d="M6.500,4.500 C6.500,1.500 12.500,1 13.500,5 C14.500,9.500 11,15 7,17 L6,15.500 C9,13 10,10.500 9.500,8.500 C8,9 6.500,7 6.500,4.500 Z" fill="#4d7db5" stroke="#2a527f" stroke-width=".9"/><rect x="13.9" y="13.9" width="9.6" height="9.6" rx="2" fill="#5a9e52"/><path d="M15.9,18.7 h5.6 M18.7,15.9 v5.6" stroke="#fff" stroke-width="1.9"/></g>
<g transform="translate(69.5 488) scale(1)"><path d="M2,22.5 C4.5,14 10,6 20.5,1.5 C20.5,8 15.5,15.5 6.5,17.5 Z" fill="#8fb2dd" stroke="#35608f" stroke-width=".9"/><path d="M2,22.5 C6,15 11,9 18,4" fill="none" stroke="#dbe8f6" stroke-width="1"/><rect x="13.9" y="13.9" width="9.6" height="9.6" rx="2" fill="#d4a90d"/><path d="M15.2,18.7 h7 M18.7,15.2 v7 M16.2,16.2 l5,5 M21.2,16.2 l-5,5" stroke="#fff" stroke-width="1.05"/></g>
<g transform="translate(69.5 527) scale(1)"><rect x="2" y="2" width="16.500" height="16.500" fill="#f0f0ee" stroke="#777" stroke-width="1"/><rect x="13.9" y="13.9" width="9.6" height="9.6" rx="2" fill="#e8505a"/><path d="M15.7,18.7 h6" stroke="#fff" stroke-width="2.2"/></g>
<g transform="translate(95.5 503)"><path d="M0,0 L7,0 L3.5,5 Z" fill="#555"/></g>
</svg>
</div></div>
<svg class="map" width="1575" height="1046" viewBox="401 130 1575 1046">
<defs><pattern id="dots" width="4" height="4" patternUnits="userSpaceOnUse" x="0" y="2"><rect width="4" height="4" fill="#e9e7e4"/><rect x="0" y="0" width="1" height="1" fill="#0000ff"/><rect x="2" y="2" width="1" height="1" fill="#0000ff"/><rect x="2" y="0" width="1" height="1" fill="#d6d6ec"/><rect x="0" y="2" width="1" height="1" fill="#d6d6ec"/></pattern><clipPath id="ct1"><path d="M1115.8,545.4 L1236.1,514.7 L1252.6,497.8 L1293.9,502.5 L1299.8,517.3 L1343.5,483.6 L1408.4,528.4 L1384.8,552.5 L1361.2,536.7 L1319.9,572.1 L1356.5,607.5 L1330.5,632.3 L1249.1,659.4 L1210.1,680.6 L1172.4,703.1 L1137,721.3 L1122,738 L1094.5,727.2 L1079.2,737.8 L1063.8,727.2 L1052,742 L1042,712 L1055.6,695.3 L1054.6,676.1 L1063.4,665.8 L1053,640.7 L1063.4,627.4 L1051.6,608.2 L1067.8,592 Z"/></clipPath><clipPath id="ct2a"><path d="M1143,741 L1151,735 L1150,728 L1230,704 L1243,708 L1262,703 L1282,712 L1298,750 L1291,767 L1277,771 L1257,773 L1236,761 L1210,748 L1185,752 L1141,760 Z"/></clipPath><clipPath id="ct2b"><path d="M1141,760 L1185,752 L1200,765 L1212,800 L1215,830 L1216,868 L1218.6,884.5 L1182.6,898.6 L1173.7,899.8 L1166,895.7 L1158.4,883.3 L1140.7,893.9 L1128.3,881.5 L1162.5,824.3 L1146,804.2 L1153.7,794.2 L1138.3,781.8 Z M1213,836 L1238.6,832.6 L1244.5,830.2 L1252.2,842.6 L1240.4,859.1 L1216.2,868 Z"/></clipPath></defs>
<rect x="401" y="130" width="1575" height="1046" fill="#fff"/>
<g fill="url(#dots)" stroke="#222" stroke-width="0.8" stroke-linejoin="round">
<polygon points="404.4,182.5 1310,120 1855.8,120 1668.5,210 1844,341 1397,338.3 1385,367.8 1346.6,368.4 1298,342.7 1222.7,357.4 1217.4,372.2 1184.4,372.2 1177,286.4 1128,270 1000,269.5 848.4,284.9 786.4,244.5 597.6,207 445.7,227.7"/>
<polygon points="540.5,1117 538.8,1127.5 534,1137.2 526.3,1145.6 516.2,1152.1 504.6,1156.1 492,1157.5 479.4,1156.1 467.8,1152.1 457.7,1145.6 450,1137.2 445.2,1127.5 443.5,1117 445.2,1106.5 450,1096.8 457.7,1088.4 467.8,1081.9 479.4,1077.9 492,1076.5 504.6,1077.9 516.2,1081.9 526.3,1088.4 534,1096.8 538.8,1106.5"/>
<polygon points="888,1190 888.2,1176 892,1160 891,1148.6 883.7,1125 873.4,1107.3 985.2,988.4 999.4,985.3 1021.5,963.2 1032.5,960.5 1065.6,960.8 1070.3,948.2 1102.7,901.2 1169.6,926.8 1193.2,920.9 1303.8,825.7 1392.3,824.2 1510.3,930.3 1482.3,958.9 1495.6,966.3 1552.2,912.6 1578.5,928 1606.6,918.5 1572,890 1570.3,894.3 1505.4,850 1521,830 1594.8,874.2 1640.5,890.5 1684.7,898.4 1729,900.8 1808.6,901.4 1866,898.4 1885.3,908.2 1911.9,933.2 1923.7,939 1947.3,933.2 1962,931.8 1990,939 1990,933 1947.3,965.7 1935.5,1021.7 1990,1073 1990,1140 1959,1159 1935.5,1164.8 1924,1190"/>
<polygon points="1115.8,545.4 1236.1,514.7 1252.6,497.8 1293.9,502.5 1299.8,517.3 1343.5,483.6 1408.4,528.4 1384.8,552.5 1361.2,536.7 1319.9,572.1 1356.5,607.5 1330.5,632.3 1249.1,659.4 1210.1,680.6 1172.4,703.1 1137,721.3 1071.5,801.5 1041.4,790.9 1072.1,762.6 1094.5,727.2 1079.2,737.8 1063.8,727.2 1017.8,788 1001.3,796.8 984.2,798 978.9,791.5 1055.6,695.3 1054.6,676.1 1063.4,665.8 1053,640.7 1063.4,627.4 1051.6,608.2 1067.8,592"/>
<polygon points="1150.1,727.8 1229.8,704.2 1242.8,708.3 1262.2,703 1281.7,712.4 1297.6,750.2 1291.2,766.7 1277,770.9 1257.5,772.6 1235.7,760.8 1219.8,798.3 1238.6,832.6 1244.5,830.2 1252.2,842.6 1240.4,859.1 1216.2,868 1218.6,884.5 1182.6,898.6 1173.7,899.8 1166,895.7 1158.4,883.3 1140.7,893.9 1128.3,881.5 1162.5,824.3 1146,804.2 1153.7,794.2 1138.3,781.8 1143,741.4 1151.7,734.9"/>
<polygon points="1288.2,797.4 1314.7,801.5 1311.8,815.7 1285.3,811.6"/>
<path fill-rule="evenodd" d="M1917.5,416.5 L1928.7,423.6 L1927.5,429.5 L1947.6,424.2 L1964,427.7 L1990,425 L1990,496.8 L1955.8,496.8 L1952.3,498 L1938,502.7 L1930.4,508.6 L1887.4,477.9 L1889.7,457.8 L1892,459 L1896.2,441.3 L1908,426 L1914.5,426 Z M1922.3,443.7 A12.3,10 0 1 0 1946.9,443.7 A12.3,10 0 1 0 1922.3,443.7 Z"/>
<polygon points="1964.5,502.4 1990,501.5 1990,660 1946,647.7 1954,573"/>
<polygon points="1889,578.8 1901,574 1925.3,573.2 1954.2,573.2 1950.5,604.8 1944,604 1934.6,608.6 1901,606.7 1890,586.2"/>
<polygon points="1885.3,590 1883.4,601 1891.8,612.3 1900.2,608.6 1890,588"/>
<polygon points="1901,608.6 1934.6,609.5 1945.8,604.8 1949.5,614 1945.8,632.8 1917.9,657 1910.4,651.4 1899.2,619.7"/>
<polygon points="1893.7,627.2 1900,620.7 1910.4,653.3 1903,660.7 1899.2,651.4"/>
<polygon points="1910.4,655 1917.9,658 1945.8,634.6 1944.9,646.8 1929,666.3 1924.4,661.7 1914,662.6 1909,659"/>
<polygon points="1947.7,623.5 1953.3,620.7 1959.8,630.9 1955,640 1945.8,645.8"/>
<polygon points="1942,648.6 1955,652.3 1944,675.6 1945,683 1955,686.8 1966.3,686.8 1990,682 1990,696 1964.5,696 1955,690.5 1949.5,696 1929,681.2 1929,672 1934.6,655"/>
<polygon points="1808,605.8 1849,615 1860,621.6 1862,611.4 1876.9,613.2 1876.9,623.5 1878.7,629 1887,631 1890,639.3 1885.3,647.7 1887,661.7 1875,665.4 1854.5,655 1824.7,638.4 1803.3,617.9"/>
<polygon points="1374,575 1377,575 1377,585 1380,585 1379,602 1373,602 1374,585"/>
<polygon points="1018.3,863.9 1042.8,877.3 1015.2,944.3 989.9,936.4 1004.1,885.2"/>
<polygon points="1344.4,474.7 1347.2,470 1350.3,469.6 1350.3,474.7 1347.2,478.3 1344.8,477.1"/>
<polygon points="1354.3,467.6 1359.8,471.6 1365.3,479.4 1359.8,477.9 1355.1,474.7 1353.5,470.8"/>
<polygon points="1031,330 1044.2,334.4 1047.2,339.7 1038.3,337.4"/>
<polygon points="1037.8,342.7 1045.7,346.2 1046.6,350.7 1036,349.2"/>
<polygon points="1183.5,478.4 1191.7,471.6 1197.1,479"/>
</g>
<g fill="#fff" stroke="#222" stroke-width="0.8"><polygon points="1083.2,1177.3 1102.7,1169.8 1108.3,1177.3"/><polygon points="1174.3,1177.3 1180.5,1174.2 1186.7,1177.3"/></g>
<g fill="none" stroke-linejoin="round"><g stroke="#333" stroke-width="2.6"><polyline points="1889.7,459 1893.3,462.5 1903.9,469 1933.4,470.2 1957,466.1 1980.6,461.4"/><polyline points="1935.8,470.8 1945.2,480.2 1953.5,487.9 1952.3,497.9"/><polyline points="1889.7,466.1 1896.8,481.4 1919.2,493.2 1938.1,502.1"/><polyline points="1949.9,448.4 1968.8,460.2"/><polyline points="1927.2,573.2 1940.2,588.1 1947.7,606.7 1957,625.3 1959.8,630.9 1955.2,642.1 1944,647.7 1934.7,657 1929.1,668.2"/></g><g stroke="#fff" stroke-width="1.3"><polyline points="1889.7,459 1893.3,462.5 1903.9,469 1933.4,470.2 1957,466.1 1980.6,461.4"/><polyline points="1935.8,470.8 1945.2,480.2 1953.5,487.9 1952.3,497.9"/><polyline points="1889.7,466.1 1896.8,481.4 1919.2,493.2 1938.1,502.1"/><polyline points="1949.9,448.4 1968.8,460.2"/><polyline points="1927.2,573.2 1940.2,588.1 1947.7,606.7 1957,625.3 1959.8,630.9 1955.2,642.1 1944,647.7 1934.7,657 1929.1,668.2"/></g></g>
<g fill="none" stroke="#a8d0ff" stroke-width="1.1" stroke-linejoin="round" stroke-linecap="round">
<path d="M964,129.4 C962.8,131.4 954.3,138.7 956,142.7 C957.7,146.7 972.1,152.7 975.2,156 C978.3,159.3 979.4,162.8 976.7,164.8 C974.0,166.8 959.0,167.0 957.5,169.2 C956.0,171.4 964.9,173.0 966.4,179.6 C967.9,186.2 969.1,205.8 967.8,213.5 C966.5,221.2 959.9,221.5 957.5,231.2 C955.1,240.9 950.5,268.2 951.6,278.4 C952.7,288.6 962.3,291.9 964.9,299 C967.5,306.1 970.0,316.3 968.7,325.6 C967.4,334.9 957.5,351.3 956,361 C954.5,370.7 959.1,382.1 958.4,390.5 C957.7,398.9 954.8,408.6 951.6,417 C948.4,425.4 938.7,439.9 936.9,446.5 C935.1,453.1 940.7,455.1 939.8,461.3 C938.9,467.5 932.1,481.3 931,487.8 C929.9,494.3 932.2,502.3 932.4,504.9"/>
<path d="M456.6,401.4 C460.5,407.5 473.4,431.3 482.6,442.1 C491.8,452.9 510.5,465.4 518,473.1 C525.5,480.8 527.4,489.7 532.7,493.7 C538.0,497.7 548.5,497.9 553.4,499.6 C558.3,501.3 563.4,504.1 565.2,504.9"/>
<path d="M1204.4,402.3 C1204.7,405.8 1204.4,419.7 1206.5,425.9 C1208.6,432.1 1213.9,438.3 1218.3,443.6 C1222.7,448.9 1230.7,456.0 1236,461.3 C1241.3,466.6 1249.0,473.7 1253.7,479 C1258.4,484.3 1264.8,492.8 1267,496.7 C1269.2,500.6 1268.2,503.7 1268.4,504.9"/>
<path d="M1341.3,372.8 C1342.3,375.0 1346.9,382.2 1348.1,387.5 C1349.3,392.8 1350.3,403.8 1349.6,408.2 C1348.9,412.6 1344.4,413.0 1343.7,417 C1343.0,421.0 1346.2,430.3 1345.1,434.7 C1344.0,439.1 1338.7,443.4 1336.3,446.5 C1333.9,449.6 1329.4,452.3 1328.9,455.4 C1328.5,458.5 1333.3,463.7 1333.3,467.2 C1333.3,470.7 1330.2,475.5 1328.9,479 C1327.6,482.5 1326.3,486.9 1324.5,490.8 C1322.7,494.7 1318.2,502.8 1317.1,504.9"/>
<path d="M1675.9,129.4 C1679.4,130.1 1691.5,131.8 1699.5,133.8 C1707.5,135.8 1720.2,140.3 1729,142.7 C1737.8,145.1 1750.5,148.1 1758.5,150.1 C1766.5,152.1 1776.8,155.8 1782.1,156 C1787.4,156.2 1791.9,153.9 1793.9,151.5 C1795.9,149.1 1794.7,142.8 1795.4,139.7 C1796.1,136.6 1797.9,132.2 1798.3,130.9"/>
<path d="M1835.2,130.9 C1837.9,131.8 1845.8,135.3 1852.9,136.8 C1860.0,138.3 1874.4,140.8 1882.4,141.2 C1890.4,141.6 1898.9,139.9 1906,139.7 C1913.1,139.5 1923.4,137.9 1929.6,139.7 C1935.8,141.5 1942.9,148.0 1947.3,151.5 C1951.7,155.0 1957.8,159.3 1959.1,163.3 C1960.4,167.3 1955.2,174.8 1956.1,178.1 C1957.0,181.4 1962.0,184.2 1965,185.5 C1968.0,186.8 1974.5,186.7 1976.2,186.9"/>
<path d="M1488,377.2 C1488.1,380.1 1486.7,389.5 1488.6,396.4 C1490.5,403.3 1495.8,415.8 1500.4,422.9 C1505.0,430.0 1515.3,437.0 1519.5,443.6 C1523.7,450.2 1523.5,460.6 1528.4,467.2 C1533.3,473.8 1547.6,482.9 1552,487.8 C1556.4,492.7 1557.5,497.0 1557.9,499.6 C1558.3,502.2 1555.4,504.1 1554.9,504.9"/>
<path d="M1636.1,463.3 C1634.1,464.8 1624.8,469.4 1622.8,473.1 C1620.8,476.8 1622.4,483.0 1622.8,487.8 C1623.2,492.6 1625.3,502.3 1625.7,504.9"/>
<path d="M563.7,505 C565.5,506.8 573.3,513.0 575.5,516.8 C577.7,520.6 576.1,526.3 578.5,530.1 C580.9,533.9 588.0,537.7 591.7,541.9 C595.5,546.1 599.3,554.6 603.5,558.1 C607.7,561.6 613.6,563.2 619.8,565.5 C626.0,567.8 636.6,571.2 644.8,573.4 C653.0,575.6 666.8,577.8 674.3,580.2 C681.8,582.6 688.8,586.7 695,589.1 C701.2,591.5 708.1,594.6 715.6,596.4 C723.1,598.2 735.4,599.6 745.1,600.9 C754.8,602.2 771.4,604.7 780.5,605.3 C789.6,605.9 799.0,603.6 805.6,604.7 C812.2,605.8 819.3,609.5 824.8,612.7 C830.3,615.9 838.7,621.7 842.5,625.9 C846.3,630.1 849.5,636.7 849.9,640.7 C850.3,644.7 844.3,648.7 845.4,652.5 C846.5,656.3 853.4,659.2 857.2,665.8 C861.0,672.4 868.5,689.8 870.5,696.7 C872.5,703.6 869.8,707.1 870.5,711.5 C871.2,715.9 873.8,721.8 874.9,726.2 C876.0,730.6 875.2,735.7 877.9,741 C880.6,746.3 889.1,756.3 892.6,761.6 C896.1,766.9 898.6,772.2 901.5,776.4 C904.4,780.6 907.4,786.8 911.8,789.7 C916.2,792.6 927.2,792.3 931,795.6 C934.8,798.9 935.6,807.2 936.9,811.8 C938.2,816.4 938.5,823.6 939.8,826.5 C941.1,829.4 942.2,830.8 945.7,831 C949.2,831.2 958.5,826.0 963.4,828 C968.3,830.0 976.9,840.0 978.2,844.2 C979.5,848.4 971.9,850.9 972.3,856 C972.7,861.1 979.8,874.9 981.1,878.2"/>
<path d="M932.4,505 C934.0,506.5 941.9,512.2 942.8,515.3 C943.7,518.4 937.2,521.8 938.3,525.6 C939.4,529.4 948.3,536.0 950.1,540.4 C951.9,544.8 952.5,548.9 950.1,555.1 C947.7,561.3 936.3,575.9 933.9,581.7 C931.5,587.5 935.2,590.4 933.9,593.5 C932.6,596.6 927.1,597.9 925.1,602.3 C923.1,606.7 922.2,615.5 920.6,623 C919.0,630.5 917.6,645.0 914.7,652.5 C911.8,660.0 902.6,662.0 901.5,673.1 C900.4,684.2 906.7,716.9 907.4,726.2 C908.1,735.5 904.1,732.4 905.9,735.1 C907.7,737.8 916.3,739.0 919.2,743.9 C922.1,748.8 923.3,761.7 925.1,767.5 C926.9,773.3 929.2,775.7 931,782.3 C932.8,788.9 936.0,807.4 936.9,811.8"/>
<path d="M1554.9,505 C1558.0,507.2 1570.7,516.6 1575.6,519.7 C1580.5,522.8 1582.1,523.6 1587.4,525.6 C1592.7,527.6 1603.0,529.9 1611,533 C1619.0,536.1 1633.4,543.6 1640.5,546.3 C1647.6,549.0 1652.5,551.2 1658.2,550.7 C1663.9,550.2 1673.5,544.0 1678.8,543.3 C1684.1,542.6 1687.8,543.6 1693.6,546.3 C1699.4,549.0 1710.1,557.9 1717.2,561 C1724.3,564.1 1734.6,565.1 1740.8,566.9 C1747.0,568.7 1753.6,571.2 1758.5,572.8 C1763.4,574.4 1771.0,576.6 1773.2,577.3"/>
<path d="M1624.3,505 C1624.5,506.3 1623.7,509.8 1625.7,513.8 C1627.7,517.8 1635.6,527.3 1637.5,531.5 C1639.4,535.7 1638.3,540.3 1638.4,541.9"/>
<path d="M1783.6,524.2 C1782.5,526.6 1777.8,534.4 1776.2,540.4 C1774.6,546.4 1773.4,557.8 1773.2,564 C1773.0,570.2 1773.1,576.0 1774.7,581.7 C1776.3,587.4 1781.6,597.6 1783.6,602.3 C1785.6,606.9 1785.1,609.6 1788,612.7 C1790.9,615.8 1798.3,618.4 1802.7,623 C1807.1,627.6 1813.1,636.5 1817.5,643.6 C1821.9,650.7 1828.7,663.6 1832.2,670.2 C1835.7,676.8 1836.7,683.5 1841.1,687.9 C1845.5,692.3 1857.7,696.2 1861.7,699.7 C1865.7,703.2 1862.7,708.4 1867.6,711.5 C1872.5,714.6 1885.8,717.2 1894.2,720.3 C1902.6,723.4 1917.5,729.0 1923.7,732.1 C1929.9,735.2 1932.0,737.5 1935.5,741 C1939.0,744.5 1943.3,753.3 1947.3,755.7 C1951.3,758.1 1957.7,756.5 1962,757.2 C1966.3,757.9 1974.1,759.8 1976.2,760.2"/>
<path d="M400,1092.5 C401.5,1092.1 405.4,1092.9 410.3,1089.6 C415.2,1086.3 426.9,1074.0 432.4,1070.4 C437.9,1066.8 439.2,1066.3 447.2,1065.4 C455.2,1064.5 474.9,1064.1 485.5,1064.5 C496.1,1064.9 509.6,1067.4 518,1068.3 C526.4,1069.2 536.3,1069.4 541.6,1070.4 C546.9,1071.4 549.9,1072.4 553.4,1074.8 C556.9,1077.2 561.2,1081.7 565.2,1086.6 C569.2,1091.5 575.0,1100.2 579.9,1107.3 C584.8,1114.4 592.3,1128.1 597.6,1133.8 C602.9,1139.5 609.1,1142.1 615.3,1145.6 C621.5,1149.1 631.4,1154.3 638.9,1157.4 C646.4,1160.5 658.4,1163.7 665.5,1166.3 C672.6,1168.9 682.6,1174.1 686.1,1174.5 C689.6,1174.9 686.4,1169.0 689.1,1169.2 C691.8,1169.4 701.6,1174.7 703.8,1175.7"/>
<path d="M981.1,878.7 C981.1,880.2 982.9,883.0 981.1,889 C979.3,895.0 972.4,912.5 969.3,918.5 C966.2,924.5 964.0,926.4 960.5,928.8 C957.0,931.2 948.4,931.8 945.7,934.7 C943.0,937.6 944.2,942.9 942.2,948 C940.2,953.1 933.6,963.3 932.4,968.6 C931.2,973.9 936.8,978.5 933.9,983.4 C931.0,988.3 916.8,996.7 913.3,1001.1 C909.8,1005.5 910.3,1005.8 910.3,1012.9 C910.3,1020.0 913.7,1040.8 913.3,1048.3 C912.9,1055.8 910.1,1060.1 907.4,1063 C904.7,1065.9 899.1,1064.8 895.6,1067.5 C892.1,1070.2 887.3,1075.6 883.8,1080.7 C880.3,1085.8 874.2,1097.4 872,1101.4 C869.8,1105.4 869.5,1106.4 869,1107.3"/>
<path d="M783.5,1175.7 C783.5,1172.5 784.8,1160.8 783.5,1154.5 C782.2,1148.2 777.3,1140.4 774.6,1133.8 C771.9,1127.2 767.6,1116.4 765.8,1110.2 C764.0,1104.0 762.6,1096.5 762.8,1092.5 C763.0,1088.5 764.2,1085.3 767.3,1083.7 C770.4,1082.1 778.9,1081.8 783.5,1081.6 C788.1,1081.4 793.3,1082.7 798.2,1082.2 C803.1,1081.7 810.6,1078.4 815.9,1078.4 C821.2,1078.4 827.0,1080.1 833.6,1082.2 C840.2,1084.3 852.7,1088.3 860.2,1092.5 C867.7,1096.7 878.5,1103.6 883.8,1110.2 C889.1,1116.8 893.4,1130.2 895.6,1136.8 C897.8,1143.4 898.1,1151.8 898.5,1154.5"/>
<path d="M788.8,1175.7 C788.9,1172.5 790.6,1160.3 789.4,1154.5 C788.2,1148.7 783.2,1143.0 780.5,1136.8 C777.8,1130.6 773.5,1119.4 771.7,1113.2 C769.9,1107.0 768.5,1099.3 768.7,1095.5 C768.9,1091.7 769.7,1089.4 773.2,1088.1 C776.7,1086.8 785.9,1087.3 792.3,1086.6 C798.7,1085.9 808.4,1082.8 815.9,1083.7 C823.4,1084.6 834.5,1089.0 842.5,1092.5 C850.5,1096.0 863.3,1102.0 869,1107.3 C874.7,1112.6 878.6,1121.7 880.8,1127.9 C883.0,1134.1 884.2,1141.4 883.8,1148.6 C883.4,1155.8 878.8,1171.6 877.9,1175.7"/>
<path d="M793.8,1175.7 C794.0,1173.2 796.4,1163.9 795.3,1158.9 C794.2,1154.0 789.1,1147.8 786.4,1142.7 C783.7,1137.6 778.7,1129.4 777.6,1125 C776.5,1120.6 779.6,1117.2 779.1,1113.2 C778.6,1109.2 774.2,1101.5 774,1098.4 C773.8,1095.3 774.4,1093.8 777.6,1092.5 C780.8,1091.2 790.0,1090.3 795.3,1089.6 C800.6,1088.9 806.8,1087.2 813,1088.1 C819.2,1089.0 833.1,1094.4 836.6,1095.5"/>
<path d="M1018.3,830 C1017.1,830.7 1012.3,830.7 1010.4,834.7 C1008.5,838.7 1008.5,851.6 1005.7,856.8 C1002.9,862.0 995.2,866.3 991.5,869.4 C987.8,872.5 982.8,876.1 981.3,877.3"/>
<path d="M1063.7,1176 C1064.2,1173.2 1065.4,1162.8 1067.3,1157.4 C1069.2,1152.0 1072.9,1143.9 1076.1,1139.7 C1079.3,1135.5 1084.8,1131.1 1088.5,1129.1 C1092.2,1127.1 1097.7,1126.2 1100.9,1126.5 C1104.1,1126.8 1106.8,1128.4 1109.7,1130.9 C1112.6,1133.4 1116.7,1139.3 1120.4,1143.3 C1124.1,1147.3 1130.0,1154.2 1134.5,1157.4 C1139.0,1160.6 1144.0,1164.0 1150.4,1164.5 C1156.8,1165.0 1169.0,1161.3 1177,1161 C1185.0,1160.7 1195.5,1161.4 1203.5,1162.7 C1211.5,1164.0 1223.5,1167.8 1230.1,1169.8 C1236.7,1171.8 1245.1,1175.1 1247.8,1176"/>
<path d="M1070.8,1176 C1071.3,1173.5 1072.4,1164.1 1074.3,1159.2 C1076.2,1154.3 1080.0,1147.0 1083.2,1143.3 C1086.4,1139.6 1092.1,1135.5 1095.6,1134.4 C1099.0,1133.3 1103.0,1134.1 1106.2,1136.2 C1109.4,1138.3 1113.1,1144.7 1116.8,1148.6 C1120.5,1152.5 1126.0,1158.9 1131,1161.9 C1136.0,1164.9 1143.5,1168.2 1150.4,1168.9 C1157.3,1169.6 1169.0,1166.4 1177,1166.3 C1185.0,1166.2 1196.1,1166.6 1203.5,1168.1 C1210.9,1169.6 1223.0,1174.8 1226.5,1176"/>
<path d="M1077.9,1176 C1078.4,1173.8 1079.5,1165.4 1081.4,1161 C1083.3,1156.6 1087.6,1149.9 1090.3,1146.8 C1093.0,1143.7 1096.4,1140.9 1099.1,1140.6 C1101.8,1140.3 1105.1,1142.5 1108,1145 C1110.9,1147.5 1114.6,1153.9 1118.6,1157.4 C1122.6,1160.9 1129.5,1165.8 1134.5,1168.1 C1139.5,1170.4 1145.8,1172.1 1152.2,1172.5 C1158.6,1172.9 1169.3,1170.2 1177,1170.7 C1184.7,1171.2 1199.5,1175.2 1203.5,1176"/>
<path d="M1085,1176 C1085.5,1174.0 1086.9,1166.3 1088.5,1162.7 C1090.1,1159.1 1093.5,1154.2 1095.6,1152.1 C1097.7,1150.0 1100.6,1148.3 1102.7,1148.6 C1104.8,1148.9 1107.0,1151.5 1109.7,1153.9 C1112.4,1156.3 1116.1,1161.6 1120.4,1164.5 C1124.7,1167.4 1133.3,1171.7 1138.1,1173.4 C1142.9,1175.1 1150.1,1175.6 1152.2,1176"/>
<path d="M1269.1,500.1 C1269.5,501.2 1268.3,502.6 1271.5,507.2 C1274.7,511.8 1290.0,523.7 1290.4,530.8 C1290.8,537.9 1279.9,546.6 1273.9,554.4 C1267.9,562.2 1258.4,574.2 1250.3,582.7 C1242.2,591.2 1227.7,603.9 1219.6,611 C1211.5,618.1 1202.4,623.5 1196,629.9 C1189.6,636.3 1182.4,646.1 1177.1,653.5 C1171.8,660.9 1166.3,672.8 1160.6,679.5 C1154.9,686.2 1145.4,693.0 1139.4,698.3 C1133.4,703.6 1127.6,709.9 1120.5,714.9 C1113.4,719.9 1096.4,728.9 1092.2,731.4"/>
<path d="M1318.7,495.4 C1318.0,497.2 1316.5,503.7 1314,507.2 C1311.5,510.7 1305.7,515.5 1302.2,519 C1298.7,522.5 1292.2,529.0 1290.4,530.8"/>
<path d="M1092.2,729.6 C1091.1,731.0 1088.3,735.5 1085.1,739 C1081.9,742.5 1075.0,749.3 1070.9,753.2 C1066.8,757.1 1060.2,761.8 1057.9,765 C1055.6,768.2 1057.5,772.5 1055.6,774.4 C1053.7,776.3 1048.4,776.5 1045,777.9 C1041.6,779.3 1036.0,782.6 1033.2,783.8 C1030.4,785.0 1027.4,783.0 1026.1,786.2 C1024.8,789.4 1025.4,801.4 1024.3,805.1 C1023.2,808.8 1020.0,807.0 1019,811 C1018.0,815.0 1018.0,828.9 1017.8,832"/>
</g>
<g fill="#c4defa" stroke="#3c78c8" stroke-width="0.8" stroke-linejoin="round">
<ellipse cx="1934.6" cy="443.7" rx="7.3" ry="5.7"/>
<polygon points="1873,586 1875,581 1880,579 1883.5,581 1884.5,587.5"/>
<polygon points="1880.6,605.8 1894.6,618.8 1881.5,624.4"/>
<polygon points="1891.8,650.5 1902,670 1898.3,678.4 1877.8,668.2 1889,664"/>
<polygon points="1668.5,411.7 1673.5,420 1678.2,434.7 1675.3,438.6 1667,431.8 1668.5,420"/>
<ellipse cx="1488.57" cy="445.354" rx="2.4" ry="3.6"/>
<polygon points="1488.6,467.2 1497.4,463.3 1500.4,472.2"/>
<polygon points="1507.7,593.5 1511.3,597 1517.5,615.6 1509.2,617.1 1504.8,614.7 1506.3,605.3"/>
<polygon points="1709.8,634.8 1737.8,620 1743.7,631.8 1726,638.3 1717.2,636.3"/>
<ellipse cx="1372.8" cy="494" rx="4.3" ry="5.1"/>
</g>
<defs><g id="rdp">
<path d="M400,173.7 C402.4,174.6 406.2,176.6 411.8,178.1 C417.4,179.6 423.9,178.9 428,181 C432.1,183.1 428.3,188.1 432.4,188.4 C436.5,188.7 444.9,183.4 448.7,182.5 C452.5,181.6 450.7,181.0 451.6,184 C452.5,187.0 451.6,192.6 453.1,197.3 C454.6,202.0 455.2,203.7 459,207.6 C462.8,211.5 466.4,214.8 472.3,217 C478.2,219.2 482.0,219.3 488.5,218.8 C495.0,218.3 502.6,216.9 504.7,214.4 C506.8,211.9 501.2,209.5 498.8,206.1 C496.4,202.7 492.9,200.4 492.9,197.3 C492.9,194.2 493.8,193.6 498.8,190.5 C503.8,187.4 508.3,184.1 518,181.9 C527.7,179.7 535.7,180.2 547.5,179.6 C559.3,179.0 565.2,178.4 577,179 C588.8,179.6 594.7,181.0 606.5,182.5 C618.3,184.0 627.2,184.2 636,186.4 C644.8,188.6 645.4,191.5 650.7,193.4 C656.0,195.3 658.4,196.8 662.5,195.8 C666.6,194.8 669.3,188.7 671.4,188.4 C673.5,188.1 668.2,191.5 672.9,194.3 C677.6,197.1 687.6,199.6 695,202.3 C702.4,205.0 702.6,206.4 709.7,207.6 C716.8,208.8 722.7,209.0 730.4,208.5 C738.1,208.0 742.5,207.3 748.1,205.2 C753.7,203.1 755.2,198.0 758.4,197.9 C761.6,197.8 759.3,202.7 764.3,204.6 C769.3,206.5 772.6,206.3 783.5,207.6 C794.4,208.9 810.1,209.2 818.9,211.1 C827.7,213.0 821.2,213.9 827.7,217 C834.2,220.1 843.6,223.4 851.3,226.8 C859.0,230.2 865.5,230.9 866.1,234.1 C866.7,237.3 854.6,239.7 854.3,243 C854.0,246.3 860.5,248.0 864.6,250.4 C868.7,252.8 873.4,252.7 874.9,254.8 C876.4,256.9 870.2,258.9 872,260.7 C873.8,262.5 880.0,260.9 883.8,263.6 C887.6,266.3 888.3,274.6 891.2,274 C894.1,273.4 894.7,263.1 898.5,260.7 C902.3,258.3 903.8,261.1 910.3,262.2 C916.8,263.3 923.9,266.3 931,266 C938.1,265.7 940.4,263.2 945.7,260.7 C951.0,258.2 953.4,252.7 957.5,253.3 C961.6,253.9 963.2,260.9 966.4,263.6 C969.6,266.3 969.9,267.5 973.7,266.6 C977.5,265.7 980.2,260.4 985.5,259.2 C990.8,258.0 997.1,260.4 1000,260.7"/>
<path d="M400,386.1 C403.5,388.7 410.0,394.0 417.7,399.3 C425.4,404.6 431.2,408.8 438.3,412.6 C445.4,416.4 443.9,416.3 453.1,418.5 C462.3,420.7 474.7,420.8 484.1,423.5 C493.5,426.2 491.8,426.3 500.3,431.8 C508.8,437.3 516.2,443.0 526.8,451 C537.4,459.0 544.0,464.5 553.4,471.6 C562.8,478.7 564.6,482.0 574,486.4 C583.4,490.8 590.6,491.1 600.6,493.7 C610.6,496.3 617.1,497.4 624.2,499.6 C631.3,501.8 633.6,503.8 636,504.9"/>
<path d="M936.3,314.7 C941.1,315.4 951.2,316.0 960.5,318.2 C969.8,320.4 977.3,320.3 982.6,325.6 C987.9,330.9 983.8,338.9 987,344.8 C990.2,350.7 996.2,351.9 998.8,355.1 C1001.4,358.3 999.8,359.8 1000,361"/>
<path d="M1000,262.2 C1001.8,263.7 1004.7,264.8 1008.8,269.5 C1012.9,274.2 1015.6,282.5 1020.6,285.8 C1025.6,289.1 1028.6,283.4 1033.9,285.8 C1039.2,288.2 1043.4,295.0 1047.2,297.6 C1051.0,300.2 1050.4,296.1 1053.1,299 C1055.8,301.9 1056.4,309.0 1060.5,312.3 C1064.6,315.6 1066.3,314.1 1073.7,315.3 C1081.1,316.5 1091.4,317.0 1097.3,318.2 C1103.2,319.4 1101.7,318.5 1103.2,321.2 C1104.7,323.9 1102.3,327.1 1104.7,331.5 C1107.1,335.9 1110.6,340.5 1115,343.3 C1119.4,346.1 1122.4,347.1 1126.8,345.6 C1131.2,344.1 1133.7,340.5 1137.2,335.9 C1140.7,331.3 1140.7,326.4 1144.5,322.6 C1148.3,318.8 1153.0,316.7 1156.3,316.7 C1159.6,316.7 1160.8,316.1 1160.8,322.6 C1160.8,329.1 1159.0,338.6 1156.3,349.2 C1153.6,359.8 1150.4,368.0 1147.5,375.7 C1144.6,383.4 1145.1,382.2 1141.6,387.5 C1138.1,392.8 1130.4,397.3 1129.8,402.3 C1129.2,407.3 1132.7,408.5 1138.6,412.6 C1144.5,416.7 1152.8,420.5 1159.3,422.9 C1165.8,425.3 1168.7,424.1 1171.1,424.4"/>
<path d="M1180.8,361 C1180.3,364.5 1180.4,371.6 1178.5,378.7 C1176.6,385.8 1172.9,387.6 1171.1,396.4 C1169.3,405.2 1172.0,415.2 1169.6,422.9 C1167.2,430.6 1162.2,430.0 1159.3,434.7 C1156.4,439.4 1156.1,435.3 1154.9,446.5 C1153.7,457.7 1153.7,481.9 1153.4,490.8"/>
<path d="M1194.7,371.3 C1195.0,376.6 1198.6,389.6 1196.2,397.9 C1193.8,406.2 1188.2,407.3 1182.9,412.6 C1177.6,417.9 1172.3,422.0 1169.6,424.4"/>
<path d="M1267,251.8 C1264.3,254.2 1259.3,258.6 1253.7,263.6 C1248.1,268.6 1239.5,272.5 1238.9,276.9 C1238.3,281.3 1246.3,282.6 1250.7,285.8 C1255.1,289.0 1260.5,290.5 1261.1,293.1 C1261.7,295.7 1254.3,294.3 1253.7,299 C1253.1,303.7 1254.6,311.4 1258.1,316.7 C1261.6,322.0 1268.2,322.1 1271.4,325.6 C1274.6,329.1 1275.5,331.2 1274.3,334.4 C1273.1,337.6 1270.8,339.4 1265.5,341.8 C1260.2,344.2 1254.3,343.0 1247.8,346.2 C1241.3,349.4 1235.4,354.5 1233,358 C1230.6,361.5 1230.4,361.2 1236,363.9 C1241.6,366.6 1264.6,370.2 1261.1,371.3 C1257.6,372.4 1226.9,369.6 1218.3,369.2"/>
<path d="M1180.8,361 C1183.6,358.6 1188.7,353.9 1194.7,349.2 C1200.7,344.5 1205.0,338.6 1210.9,337.4 C1216.8,336.2 1217.4,341.7 1224.2,343.3 C1231.0,344.9 1235.4,347.1 1244.8,345.6 C1254.2,344.1 1266.1,337.8 1271.4,335.9"/>
<path d="M1218.3,369.8 C1223.0,371.0 1233.1,372.2 1241.9,375.7 C1250.7,379.2 1256.0,382.2 1262.5,387.5 C1269.0,392.8 1271.6,397.3 1274.3,402.3 C1277.0,407.3 1277.6,408.5 1275.8,412.6 C1274.0,416.7 1267.6,419.1 1265.5,422.9 C1263.4,426.7 1262.0,427.7 1265.5,431.8 C1269.0,435.9 1276.7,441.2 1283.2,443.6 C1289.7,446.0 1294.1,447.1 1297.9,443.6 C1301.7,440.1 1300.9,431.5 1302.4,425.9 C1303.9,420.3 1305.7,420.0 1305.3,415.6 C1304.9,411.2 1297.6,408.5 1300.3,403.8 C1303.0,399.1 1311.4,396.7 1318.6,392 C1325.8,387.3 1331.9,384.0 1336.3,380.2 C1340.7,376.4 1341.0,375.8 1340.7,372.8 C1340.4,369.8 1336.0,366.9 1334.8,365.4"/>
<path d="M1376.1,294.6 C1374.0,294.9 1370.5,291.7 1365.8,296.1 C1361.1,300.5 1355.7,308.4 1352.5,316.7 C1349.3,325.0 1349.9,330.9 1349.6,337.4 C1349.3,343.9 1352.2,344.8 1351,349.2 C1349.8,353.6 1346.6,356.4 1343.7,359.5 C1340.8,362.6 1337.8,363.5 1336.3,364.5"/>
<path d="M1421.8,281.3 L1435.1,282.5"/>
<path d="M1421.8,281.3 C1419.7,283.4 1414.7,287.3 1411.5,291.7 C1408.3,296.1 1406.2,297.9 1405.6,303.5 C1405.0,309.1 1407.1,314.1 1408.6,319.7 C1410.1,325.3 1410.4,327.5 1413,331.5 C1415.6,335.5 1418.0,336.2 1421.8,339.7 C1425.6,343.2 1428.1,344.4 1432.2,349.2 C1436.3,354.0 1438.1,358.0 1442.5,363.9 C1446.9,369.8 1451.9,374.0 1454.3,378.7 C1456.7,383.4 1455.8,385.4 1454.3,387.5 C1452.8,389.6 1447.5,386.3 1446.9,389 C1446.3,391.7 1450.4,398.4 1451.3,400.8"/>
<path d="M1413,338.9 C1409.5,340.4 1402.4,343.3 1395.3,346.2 C1388.2,349.1 1383.2,350.9 1377.6,353.6 C1372.0,356.3 1370.0,357.1 1367.3,359.5 C1364.6,361.9 1368.7,363.9 1364.3,365.4 C1359.9,366.9 1351.0,367.1 1345.1,366.9 C1339.2,366.7 1336.9,365.0 1334.8,364.5"/>
<path d="M1334.8,364.5 C1335.1,366.2 1333.9,370.8 1336.3,372.8 C1338.7,374.8 1343.9,370.8 1346.6,374.3 C1349.3,377.8 1347.5,384.9 1349.6,390.5 C1351.7,396.1 1355.4,399.9 1356.9,402.3"/>
<path d="M1358.4,468.7 C1369.3,467.2 1397.7,463.2 1413,461.3 C1428.3,459.4 1430.7,459.6 1435.1,459.2"/>
<path d="M1441,459.8 C1440.1,463.6 1436.0,472.8 1436.6,479 C1437.2,485.2 1442.5,488.4 1444,490.8"/>
<path d="M1434,282.8 C1441.7,283.0 1456.4,284.9 1472.3,283.7 C1488.2,282.5 1497.7,278.0 1513.6,276.9 C1529.5,275.8 1538.4,278.1 1552,278.4 C1565.6,278.7 1572.1,276.6 1581.5,278.4 C1590.9,280.2 1592.1,282.6 1599.2,287.2 C1606.3,291.8 1607.5,298.4 1616.9,301.4 C1626.3,304.4 1634.6,302.0 1646.4,302 C1658.2,302.0 1666.5,299.6 1675.9,301.4 C1685.3,303.2 1687.1,307.1 1693.6,310.8 C1700.1,314.5 1704.2,316.2 1708.3,319.7 C1712.4,323.2 1710.1,326.7 1714.2,328.5 C1718.3,330.3 1724.3,326.7 1729,328.5 C1733.7,330.3 1735.1,334.1 1737.8,337.4 C1740.5,340.7 1741.4,343.3 1742.3,344.8"/>
<path d="M1622.8,328.5 C1624.0,328.2 1625.2,325.3 1628.7,327.1 C1632.2,328.9 1628.7,335.0 1640.5,337.4 C1652.3,339.8 1674.7,337.7 1687.7,338.9 C1700.7,340.1 1697.1,341.5 1705.4,343.3 C1713.7,345.1 1722.2,346.4 1729,347.7 C1735.8,349.0 1733.4,350.4 1739.3,349.8 C1745.2,349.2 1748.8,347.6 1758.5,344.8 C1768.2,342.0 1774.4,340.3 1788,335.9 C1801.6,331.5 1815.7,324.7 1826.3,322.6 C1836.9,320.5 1832.2,325.7 1841.1,325.6 C1850.0,325.5 1860.0,323.6 1870.6,322.1 C1881.2,320.6 1886.2,319.9 1894.2,318.2 C1902.2,316.5 1906.6,315.7 1910.4,313.8 C1914.2,311.9 1915.5,310.0 1913.4,308.5 C1911.3,307.0 1905.1,308.3 1900.1,306.4 C1895.1,304.5 1894.2,301.4 1888.3,299 C1882.4,296.6 1878.9,297.2 1870.6,294.6 C1862.3,292.0 1854.7,288.7 1847,285.8 C1839.3,282.9 1834.6,282.9 1832.2,279.9 C1829.8,276.9 1831.1,272.8 1835.2,271 C1839.3,269.2 1847.9,273.1 1852.9,271 C1857.9,268.9 1858.2,266.3 1860.3,260.7 C1862.4,255.1 1861.4,248.3 1863.2,243 C1865.0,237.7 1867.9,238.8 1869.1,234.1 C1870.3,229.4 1871.2,223.2 1869.1,219.4 C1867.0,215.6 1865.0,216.2 1858.8,215 C1852.6,213.8 1845.2,215.0 1838.1,213.5 C1831.0,212.0 1829.3,210.8 1823.4,207.6 C1817.5,204.4 1811.3,200.0 1808.6,197.3 C1805.9,194.6 1814.8,196.4 1810.1,194.3 C1805.4,192.2 1794.1,189.0 1785,186.9 C1775.9,184.8 1771.2,185.5 1764.4,184 C1757.6,182.5 1752.9,181.7 1751.1,179.6 C1749.3,177.5 1755.8,175.8 1755.5,173.7 C1755.2,171.6 1752.2,172.5 1749.6,169.2 C1747.0,165.9 1747.0,161.2 1742.3,157.4 C1737.6,153.6 1732.2,152.7 1726,150.1 C1719.8,147.5 1716.9,146.9 1711.3,144.2 C1705.7,141.5 1701.8,139.5 1698,136.8 C1694.2,134.1 1693.3,132.1 1692.1,130.9"/>
<path d="M1622.8,328.5 C1622.2,330.9 1619.5,335.3 1619.8,340.3 C1620.1,345.3 1627.2,350.1 1624.3,353.6 C1621.4,357.1 1613.7,355.8 1605.1,358 C1596.5,360.2 1586.8,364.2 1581.5,364.5 C1576.2,364.8 1584.7,362.0 1578.5,359.5 C1572.3,357.0 1558.2,352.7 1550.5,352.1 C1542.8,351.5 1544.0,356.6 1540.2,356.6 C1536.4,356.6 1537.2,352.1 1531.3,352.1 C1525.4,352.1 1518.4,354.8 1510.7,356.6 C1503.0,358.4 1497.7,358.4 1493,361 C1488.3,363.6 1491.8,369.3 1487.1,369.8 C1482.4,370.3 1472.1,362.7 1469.4,363.3 C1466.7,363.9 1474.4,368.0 1473.8,372.8 C1473.2,377.6 1470.2,383.7 1466.4,387.5 C1462.6,391.3 1457.5,389.3 1454.6,392 C1451.7,394.7 1452.3,399.0 1451.7,400.8"/>
<path d="M1434,459.8 C1439.9,458.3 1453.8,454.5 1463.5,452.4 C1473.2,450.3 1476.8,448.3 1482.7,449.5 C1488.6,450.7 1487.4,454.8 1493,458.3 C1498.6,461.8 1503.0,460.1 1510.7,467.2 C1518.4,474.3 1524.2,486.2 1531.3,493.7 C1538.4,501.2 1543.1,502.7 1546.1,504.9"/>
<path d="M1857.3,510.3 C1855.4,507.1 1849.4,498.9 1847.9,494.3 C1846.4,489.7 1845.1,490.6 1849.6,487.2 C1854.1,483.8 1862.9,480.3 1870.6,477.5 C1878.3,474.7 1884.5,476.6 1888.3,473.1 C1892.1,469.6 1888.6,462.2 1889.8,459.8 C1891.0,457.4 1891.0,459.5 1894.2,461.3 C1897.4,463.1 1897.7,467.2 1906,468.7 C1914.3,470.2 1926.1,469.6 1935.5,468.7 C1944.9,467.8 1945.1,465.7 1953.2,464.2 C1961.3,462.7 1971.6,461.9 1976.2,461.3"/>
<path d="M1969.4,437.7 C1970.3,440.1 1973.2,444.8 1973.8,449.5 C1974.4,454.2 1972.6,458.9 1972.3,461.3"/>
<path d="M1748.2,495.2 L1748.2,504.9"/>
<path d="M634.5,505 C638.3,507.7 645.7,513.3 653.7,518.3 C661.7,523.3 663.1,525.6 674.3,530.1 C685.5,534.6 693.8,536.6 709.7,541 C725.6,545.4 737.5,547.9 754,552.2 C770.5,556.5 777.6,557.2 792.3,562.5 C807.0,567.8 812.9,571.9 827.7,578.7 C842.5,585.5 854.9,589.6 866.1,596.4 C877.3,603.2 876.7,606.2 883.8,612.7 C890.9,619.2 893.2,622.7 901.5,628.9 C909.8,635.1 917.7,639.0 925.1,643.6 C932.5,648.2 933.9,647.5 938.3,651.9 C942.7,656.3 945.4,659.8 947.2,665.8 C949.0,671.8 948.1,675.2 947.2,682 C946.3,688.8 943.7,692.6 942.8,699.7 C941.9,706.8 941.6,710.9 942.8,717.4 C944.0,723.9 945.2,726.2 948.7,732.1 C952.2,738.0 954.6,741.0 960.5,746.9 C966.4,752.8 970.3,755.4 978.2,761.6 C986.1,767.8 995.6,774.6 1000,777.9"/>
<path d="M939.2,652.5 C944.0,652.0 951.2,651.1 963.4,650.1 C975.6,649.1 992.7,648.0 1000,647.5"/>
<path d="M963.4,650.1 C965.2,641.7 969.1,624.5 972.3,608.2 C975.5,591.9 978.1,578.4 979.6,568.4 C981.1,558.4 978.1,563.1 979.6,558.1 C981.1,553.1 983.7,548.0 987,543.3 C990.3,538.6 993.3,538.0 995.9,534.5 C998.5,531.0 999.2,527.4 1000,525.6"/>
<path d="M979.6,568.4 C980.5,573.4 980.0,581.4 984.1,593.5 C988.2,605.6 996.8,621.8 1000,628.9"/>
<path d="M949.3,576.7 C953.3,577.6 964.2,579.4 969.3,581.1 C974.4,582.8 973.5,584.4 974.6,585.2"/>
<path d="M860.2,835.4 C863.1,831.3 869.0,820.6 874.9,814.7 C880.8,808.8 883.2,808.0 889.7,805.9 C896.2,803.8 899.1,804.1 907.4,804.4 C915.7,804.7 920.4,806.8 931,807.4 C941.6,808.0 952.2,808.6 960.5,807.4 C968.8,806.2 967.6,804.5 972.3,801.5 C977.0,798.5 978.6,797.0 984.1,792.6 C989.6,788.2 996.8,782.0 1000,779.3"/>
<path d="M1000,802.9 C998.6,807.6 995.2,818.2 992.9,826.5 C990.6,834.8 987.6,840.1 988.5,844.2 C989.4,848.3 995.5,846.6 997.3,847.2"/>
<path d="M1434,628.9 C1439.9,629.2 1448.8,628.0 1463.5,630.4 C1478.2,632.8 1490.0,636.3 1507.7,640.7 C1525.4,645.1 1531.3,646.9 1552,652.5 C1572.7,658.1 1584.5,661.0 1611,668.7 C1637.5,676.4 1655.2,681.9 1684.7,690.8 C1714.2,699.7 1726.0,703.3 1758.5,713 C1791.0,722.7 1811.6,728.9 1847,739.5 C1882.4,750.1 1909.7,758.1 1935.5,766.1 C1961.3,774.1 1968.1,776.7 1976.2,779.3"/>
<path d="M1479.7,632.4 C1481.8,632.6 1484.4,631.8 1490,633.3 C1495.6,634.8 1500.0,638.5 1507.7,640.1 C1515.4,641.7 1524.3,641.1 1528.4,641.3"/>
<path d="M1528.4,641.3 C1530.2,634.7 1532.5,622.5 1537.2,608.2 C1541.9,593.9 1548.6,587.6 1552,569.9 C1555.4,552.2 1555.3,532.7 1554.4,519.7 C1553.5,506.7 1549.0,507.9 1547.6,505"/>
<path d="M1556.4,564 C1560.8,557.2 1572.0,537.5 1578.5,530.1 C1585.0,522.7 1586.8,530.9 1588.9,527.1 C1591.0,523.3 1588.0,514.6 1588.9,510.9 C1589.8,507.2 1585.6,507.6 1593.3,508.5 C1601.0,509.4 1620.4,513.9 1627.2,515.3"/>
<path d="M1588.9,527.1 C1592.1,527.7 1600.4,527.4 1605.1,530.1 C1609.8,532.8 1606.6,536.6 1612.5,540.4 C1618.4,544.2 1629.6,545.7 1634.6,549.2 C1639.6,552.7 1637.8,552.8 1637.5,558.1 C1637.2,563.4 1632.5,569.3 1633.1,575.8 C1633.7,582.3 1635.5,584.0 1640.5,590.5 C1645.5,597.0 1654.4,602.9 1658.2,608.2 C1662.0,613.5 1660.9,611.2 1659.7,617.1 C1658.5,623.0 1657.0,625.8 1652.3,637.7 C1647.6,649.6 1639.3,668.9 1636.1,676.7"/>
<path d="M1748.2,505 C1747.6,512.1 1746.6,528.0 1745.2,540.4 C1743.8,552.8 1740.5,561.0 1741.4,566.9 C1742.3,572.8 1747.5,567.5 1749.6,569.9 C1751.7,572.3 1752.6,572.8 1752,578.7 C1751.4,584.6 1748.9,593.8 1746.7,599.4 C1744.5,605.0 1742.6,603.3 1740.8,606.8 C1739.0,610.3 1737.2,612.7 1737.8,617.1 C1738.4,621.5 1743.1,624.8 1743.7,628.9 C1744.3,633.0 1747.3,634.2 1740.8,637.7 C1734.3,641.2 1718.7,640.1 1711.3,646.6 C1703.9,653.1 1706.3,661.9 1703.9,670.2 C1701.5,678.5 1702.7,683.8 1699.5,687.9 C1696.3,692.0 1690.7,688.4 1687.7,690.8 C1684.7,693.2 1685.0,696.2 1684.7,699.7 C1684.4,703.2 1684.4,706.1 1686.2,708.5 C1688.0,710.9 1688.6,707.4 1693.6,711.5 C1698.6,715.6 1704.2,721.5 1711.3,729.2 C1718.4,736.9 1723.1,744.6 1729,749.8 C1734.9,755.0 1731.1,754.6 1740.8,755.1 C1750.5,755.6 1767.2,751.0 1777.7,752.2 C1788.2,753.4 1790.2,759.2 1793.3,761"/>
<path d="M1724.6,600.9 C1724.9,601.8 1723.4,603.9 1726,605.3 C1728.6,606.7 1735.4,607.2 1737.8,607.7"/>
<path d="M1743.7,628.9 C1746.1,630.7 1751.8,634.8 1755.5,637.7 C1759.2,640.6 1760.7,642.4 1762,643.6"/>
<path d="M1776.2,564 C1776.2,566.9 1774.7,573.4 1776.2,578.7 C1777.7,584.0 1781.8,585.2 1783.6,590.5 C1785.4,595.8 1782.9,600.0 1785,605.3 C1787.1,610.6 1788.0,612.4 1793.9,617.1 C1799.8,621.8 1807.4,624.2 1814.5,628.9 C1821.6,633.6 1821.6,636.0 1829.3,640.7 C1837.0,645.4 1844.6,647.8 1852.9,652.5 C1861.2,657.2 1864.1,661.6 1870.6,664.3 C1877.1,667.0 1880.6,663.7 1885.3,665.8 C1890.0,667.9 1889.5,671.7 1894.2,674.6 C1898.9,677.5 1900.6,676.7 1908.9,680.5 C1917.2,684.3 1924.9,687.6 1935.5,693.8 C1946.1,700.0 1953.9,705.0 1962,711.5 C1970.1,718.0 1973.4,723.3 1976.2,726.2"/>
<path d="M1509.2,822.1 C1507.4,822.7 1507.5,818.0 1500.4,825.1 C1493.3,832.2 1479.1,851.0 1473.8,857.5"/>
<path d="M1434,738 C1439.9,744.5 1448.5,753.7 1463.5,770.5 C1478.5,787.3 1497.4,809.1 1509.2,822.1 C1521.0,835.1 1519.8,832.7 1522.5,835.4"/>
<path d="M400,934.7 C408.8,936.1 425.3,939.3 444.2,941.5 C463.1,943.7 476.7,945.2 494.4,945.6 C512.1,946.0 516.2,945.5 532.7,943.6 C549.2,941.7 556.3,941.2 577,936.2 C597.7,931.2 612.4,925.3 636,918.5 C659.6,911.7 671.4,908.6 695,902.3 C718.6,896.0 730.4,892.8 754,886.9 C777.6,881.0 797.7,876.5 813,872.8 C828.3,869.1 824.8,871.0 830.7,868.3 C836.6,865.6 837.8,864.2 842.5,859.5 C847.2,854.8 850.4,849.9 854.3,844.7 C858.2,839.5 860.4,835.7 861.9,833.5"/>
<path d="M960.5,1011.4 C943.1,1030.6 898.3,1081.6 873.5,1107.3 C848.7,1133.0 849.3,1126.0 836.6,1139.7 C823.9,1153.4 815.3,1168.5 810,1175.7"/>
<path d="M960.5,971.6 C959.3,972.8 957.1,973.8 954.6,977.5 C952.1,981.2 949.4,987.7 948.1,990.2"/>
<path d="M1056,980.4 C1056.9,983.4 1059.6,984.0 1060.5,995.2 C1061.4,1006.4 1061.1,1020.6 1060.5,1036.5 C1059.9,1052.4 1059.6,1060.1 1057.5,1074.8 C1055.4,1089.5 1053.9,1094.9 1050.1,1110.2 C1046.3,1125.5 1043.6,1138.4 1038.3,1151.5 C1033.0,1164.6 1026.5,1170.9 1023.6,1175.7"/>
<path d="M1053.1,1018.8 C1056.6,1019.4 1065.5,1019.3 1070.8,1021.7 C1076.1,1024.1 1076.7,1025.9 1079.6,1030.6 C1082.5,1035.3 1082.0,1040.0 1085.5,1045.3 C1089.0,1050.6 1091.4,1055.0 1097.3,1057.1 C1103.2,1059.2 1107.9,1056.6 1115,1055.7 C1122.1,1054.8 1127.4,1051.8 1132.7,1052.7 C1138.0,1053.6 1139.1,1056.3 1141.6,1060.1 C1144.1,1063.9 1145.7,1067.2 1145.1,1071.9 C1144.5,1076.6 1141.7,1079.9 1138.6,1083.7 C1135.5,1087.5 1133.9,1087.6 1129.8,1091.1 C1125.7,1094.6 1120.7,1098.2 1118,1101.4 C1115.3,1104.6 1114.1,1105.5 1116.5,1107.3 C1118.9,1109.1 1126.3,1106.7 1129.8,1110.2 C1133.3,1113.7 1134.2,1119.7 1134.2,1125 C1134.2,1130.3 1128.9,1131.5 1129.8,1136.8 C1130.7,1142.1 1133.9,1147.4 1138.6,1151.5 C1143.3,1155.6 1142.8,1156.3 1153.4,1157.4 C1164.0,1158.5 1175.2,1155.9 1191.7,1156.8 C1208.2,1157.7 1221.2,1160.0 1236,1161.9 C1250.8,1163.8 1256.1,1163.5 1265.5,1166.3 C1274.9,1169.1 1279.7,1173.8 1283.2,1175.7"/>
<path d="M1063.4,1175.7 C1062.8,1171.5 1060.2,1162.3 1060.5,1154.5 C1060.8,1146.7 1061.7,1143.6 1064.9,1136.8 C1068.1,1130.0 1071.4,1125.0 1076.7,1120.6 C1082.0,1116.2 1084.3,1114.4 1091.4,1114.7 C1098.5,1115.0 1106.5,1119.9 1112.1,1122 C1117.7,1124.1 1117.7,1122.0 1119.5,1125 C1121.3,1128.0 1118.8,1133.9 1120.9,1136.8 C1123.0,1139.7 1128.0,1139.1 1129.8,1139.7"/>
<path d="M1320.1,1175.7 C1326.9,1165.6 1341.3,1141.6 1354,1125 C1366.7,1108.4 1371.1,1106.1 1383.5,1092.5 C1395.9,1078.9 1410.0,1065.6 1415.9,1057.1 C1421.8,1048.6 1411.2,1055.1 1413,1049.8 C1414.8,1044.5 1421.3,1037.4 1424.8,1030.6 C1428.3,1023.8 1429.8,1022.0 1430.7,1015.8 C1431.6,1009.6 1426.8,1003.7 1429.2,999.6 C1431.6,995.5 1433.9,999.6 1442.5,995.2 C1451.1,990.8 1462.6,982.9 1472,977.5 C1481.4,972.1 1482.0,969.4 1489.7,968.1 C1497.4,966.8 1504.4,968.8 1510.3,971 C1516.2,973.2 1518.0,975.3 1519.2,979 C1520.4,982.7 1515.6,988.7 1516.2,989.3 C1516.8,989.9 1521.2,985.4 1522.1,981.9 C1523.0,978.4 1521.8,976.0 1520.6,971.6 C1519.4,967.2 1514.1,963.9 1516.2,959.8 C1518.3,955.7 1522.1,955.6 1531,950.9 C1539.9,946.2 1546.7,942.1 1560.5,936.2 C1574.3,930.3 1592.1,924.4 1600,921.4"/>
<path d="M1356.9,1002.6 C1358.7,1004.7 1362.8,1008.2 1365.8,1012.9 C1368.8,1017.6 1367.6,1021.5 1371.7,1026.2 C1375.8,1030.9 1378.7,1031.8 1386.4,1036.5 C1394.1,1041.2 1405.3,1047.1 1410,1049.8"/>
<path d="M1392.3,1007 C1394.1,1007.3 1393.8,1010.0 1401.2,1008.5 C1408.6,1007.0 1423.6,1001.4 1429.2,999.6"/>
<path d="M1262.5,1166.3 C1266.6,1163.3 1276.1,1155.9 1283.2,1151.5 C1290.3,1147.1 1292.6,1145.1 1297.9,1144.2 C1303.2,1143.3 1305.3,1143.3 1309.7,1147.1 C1314.1,1150.9 1317.1,1157.6 1320.1,1163.3 C1323.1,1169.0 1323.6,1173.2 1324.5,1175.7"/>
<path d="M1292,1175.7 C1292.6,1171.5 1292.6,1160.5 1295,1154.5 C1297.4,1148.5 1302.0,1147.4 1303.8,1145.6"/>
<path d="M1474.9,858 C1476.7,861.2 1479.1,868.0 1483.8,874.2 C1488.5,880.4 1492.6,883.7 1498.5,889 C1504.4,894.3 1509.2,898.4 1513.3,900.8 C1517.4,903.2 1518.0,900.8 1519.2,900.8"/>
<path d="M1833.7,881.6 C1840.5,884.3 1853.7,894.3 1867.6,894.9 C1881.5,895.5 1888.2,891.1 1903,884.6 C1917.8,878.1 1926.8,871.6 1941.4,862.4 C1956.0,853.2 1969.2,843.5 1976.2,838.8"/>
<path d="M1976.2,1153 C1974.0,1155.7 1968.4,1161.8 1965,1166.3 C1961.6,1170.8 1960.3,1173.8 1959.1,1175.7"/>
<path d="M1515.1,959.8 C1528.1,959.6 1567.9,956.5 1580,958.9 C1592.1,961.3 1577.4,965.5 1575.6,971.6 C1573.8,977.7 1574.7,983.7 1571.2,989.3 C1567.7,994.9 1563.5,996.1 1557.9,999.6 C1552.3,1003.1 1545.5,1002.6 1543.1,1007 C1540.7,1011.4 1542.0,1015.8 1546.1,1021.7 C1550.2,1027.6 1559.4,1030.6 1563.8,1036.5 C1568.2,1042.4 1563.5,1045.3 1568.2,1051.2 C1572.9,1057.1 1582.1,1060.1 1587.4,1066 C1592.7,1071.9 1591.3,1073.6 1594.8,1080.7 C1598.3,1087.8 1599.5,1093.7 1605.1,1101.4 C1610.7,1109.1 1617.5,1113.8 1622.8,1119.1 C1628.1,1124.4 1631.0,1122.3 1631.6,1127.9 C1632.2,1133.5 1626.3,1140.6 1625.7,1147.1 C1625.1,1153.6 1628.7,1154.7 1628.7,1160.4 C1628.7,1166.1 1626.3,1172.6 1625.7,1175.7"/>
<path d="M1522.5,831.5 C1528.4,836.2 1540.2,846.6 1552,855.1 C1563.8,863.6 1569.7,867.4 1581.5,874.2 C1593.3,881.0 1599.8,882.5 1611,889 C1622.2,895.5 1637.5,900.8 1637.5,906.7 C1637.5,912.6 1622.8,914.1 1611,918.5 C1599.2,922.9 1585.0,926.7 1578.5,928.8"/>
<path d="M1006,460 C1006.9,461.9 1008.1,464.2 1010.7,469.4 C1013.3,474.6 1015.2,480.1 1019,486 C1022.8,491.9 1023.9,490.9 1029.6,498.9 C1035.3,506.9 1041.4,517.8 1047.3,526.1 C1053.2,534.4 1054.4,536.3 1059.1,540.2 C1063.8,544.1 1065.7,544.7 1070.9,545.4 C1076.1,546.1 1079.9,543.2 1085.1,543.8 C1090.3,544.4 1092.7,545.9 1096.9,548.5 C1101.1,551.1 1104.4,555.1 1106.3,556.8"/>
<path d="M1029.6,498.9 C1027.0,499.9 1021.1,501.3 1016.6,503.7 C1012.1,506.1 1011.0,505.8 1007.2,510.7 C1003.4,515.6 1001.8,522.3 997.8,528.4 C993.8,534.5 990.4,536.2 987.1,541.4 C983.8,546.6 982.8,549.0 981.2,554.4 C979.6,559.8 978.4,561.0 978.9,568.6 C979.4,576.2 980.3,581.8 983.6,592.2 C986.9,602.6 990.7,610.1 995.4,620.5 C1000.1,630.9 1004.4,638.9 1007.2,644.1 C1010.0,649.3 1009.1,645.9 1009.6,646.4"/>
<path d="M978.9,568.6 C977.2,577.1 973.9,594.7 970.6,611 C967.3,627.3 964.0,642.2 962.4,650"/>
<path d="M960,579.2 C961.9,579.7 966.3,580.1 969.4,581.5 C972.5,582.9 974.1,585.3 975.3,586.3"/>
<path d="M960,650.7 C964.7,650.3 974.2,649.7 983.6,648.8 C993.0,647.9 998.2,648.1 1007.2,646.4 C1016.2,644.7 1021.6,642.4 1028.4,640.5 C1035.2,638.6 1036.2,637.5 1041.4,637 C1046.6,636.5 1051.8,638.0 1054.4,638.2"/>
<path d="M1023.2,616.9 C1022.4,618.6 1021.7,620.7 1019,625.2 C1016.3,629.7 1011.7,635.2 1009.6,639.4 C1007.5,643.6 1008.6,645.0 1008.4,646.4"/>
<path d="M1008.4,646.4 C1012.9,649.7 1021.6,656.8 1030.8,662.9 C1040.0,669.0 1045.0,671.7 1054.4,677.1 C1063.8,682.5 1068.6,685.9 1078,690.1 C1087.4,694.3 1096.9,696.7 1101.6,698.3"/>
<path d="M1085.1,543.8 C1085.3,542.6 1084.9,541.0 1086.3,537.9 C1087.7,534.8 1087.3,533.4 1092.2,528.4 C1097.1,523.4 1101.6,519.0 1111,513.1 C1120.4,507.2 1130.7,503.4 1139.4,498.9 C1148.1,494.4 1145.3,494.2 1154.7,490.7 C1164.1,487.2 1177.8,483.8 1186.5,481.2 C1195.2,478.6 1193.6,478.9 1198.3,477.7 C1203.0,476.5 1205.4,474.8 1210.1,475.3 C1214.8,475.8 1217.6,477.5 1221.9,480.1 C1226.2,482.7 1228.8,484.8 1231.4,488.3 C1234.0,491.8 1232.5,494.5 1234.9,497.8 C1237.3,501.1 1239.2,501.5 1243.2,504.8 C1247.2,508.1 1251.5,509.6 1255,514.3 C1258.5,519.0 1259.3,523.2 1260.9,528.4 C1262.5,533.6 1263.9,536.9 1263.2,540.2 C1262.5,543.5 1258.5,544.0 1257.3,545"/>
<path d="M1153.5,460 C1153.6,463.3 1154.2,471.3 1154,476.5 C1153.8,481.7 1151.9,482.9 1152.3,486 C1152.7,489.1 1155.2,490.7 1155.9,491.9"/>
<path d="M1271.5,467.1 C1272.4,468.5 1274.3,469.5 1276.2,474.2 C1278.1,478.9 1279.7,484.6 1280.9,490.7 C1282.1,496.8 1283.0,498.7 1282.1,504.8 C1281.2,510.9 1277.4,518.1 1276.2,521.4"/>
<path d="M1370.9,485.3 C1372.0,485.5 1374.2,485.1 1376.5,486.4 C1378.8,487.7 1378.4,489.6 1382.4,491.9 C1386.4,494.2 1391.4,494.7 1396.6,497.8 C1401.8,500.9 1404.9,503.4 1408.4,507.2 C1411.9,511.0 1414.1,511.4 1414.3,516.6 C1414.5,521.8 1411.3,525.6 1409.6,533.2 C1407.9,540.8 1411.9,549.2 1406,554.4 C1400.1,559.6 1386.5,556.3 1380.1,559.1 C1373.7,561.9 1375.2,563.9 1374.2,568.6 C1373.2,573.3 1376.0,576.1 1375.3,582.7 C1374.6,589.3 1373.4,595.5 1370.6,601.6 C1367.8,607.7 1364.3,610.8 1361.2,613.4 C1358.1,616.0 1356.5,614.4 1355.3,614.6"/>
<path d="M1440,628.7 C1433.7,628.9 1424.2,628.9 1408.4,629.9 C1392.6,630.9 1380.1,631.4 1361.2,633.5 C1342.3,635.6 1332.9,636.7 1314,640.5 C1295.1,644.3 1281.0,648.3 1266.8,652.3 C1252.6,656.3 1252.6,656.6 1243.2,660.6 C1233.8,664.6 1229.0,667.4 1219.6,672.4 C1210.2,677.4 1205.4,680.2 1196,685.4 C1186.6,690.6 1181.8,692.4 1172.4,698.3 C1163.0,704.2 1158.2,707.8 1148.8,714.9 C1139.4,722.0 1133.7,726.6 1125.2,733.7 C1116.7,740.8 1112.9,744.2 1106.3,750.3 C1099.7,756.4 1095.0,761.3 1092.2,764"/>
<path d="M1356.5,615.8 C1358.4,617.0 1360.2,620.1 1365.9,621.7 C1371.6,623.3 1373.9,624.2 1384.8,624 C1395.7,623.8 1410.8,620.7 1420.2,620.5 C1429.6,620.3 1428.7,620.9 1432,622.8 C1435.3,624.7 1436.2,626.6 1436.7,629.9 C1437.2,633.2 1437.1,635.6 1434.3,639.4 C1431.5,643.2 1427.7,645.0 1422.5,648.8 C1417.3,652.6 1412.2,654.4 1408.4,658.2 C1404.6,662.0 1404.4,663.9 1403.7,667.7 C1403.0,671.5 1401.0,666.7 1404.8,677.1 C1408.6,687.5 1416.6,706.9 1422.5,719.6 C1428.4,732.3 1431.9,736.6 1434.3,740.8"/>
<path d="M1172.4,698.3 C1174.8,697.8 1177.6,697.2 1184.2,696 C1190.8,694.8 1199.5,693.8 1205.4,692.4 C1211.3,691.0 1212.0,690.8 1213.7,688.9 C1215.4,687.0 1215.4,683.9 1213.7,683 C1212.0,682.1 1208.5,683.3 1205.4,684.2 C1202.3,685.1 1199.7,687.0 1198.3,687.7"/>
<path d="M1173.6,699.5 C1174.8,701.2 1176.9,704.5 1179.5,707.8 C1182.1,711.1 1185.1,714.4 1186.5,716"/>
<path d="M960,747.3 C962.4,749.2 967.1,752.7 971.8,756.7 C976.5,760.7 979.4,763.8 983.6,767.3 C987.8,770.8 989.7,771.6 993,774.4 C996.3,777.2 997.3,778.9 1000.1,781.5 C1002.9,784.1 1004.1,785.0 1007.2,787.4 C1010.3,789.8 1012.7,790.0 1015.5,793.3 C1018.3,796.6 1019.3,800.1 1021.4,803.9 C1023.5,807.7 1023.3,808.4 1026.1,812.2 C1028.9,816.0 1032.2,818.8 1035.5,822.8 C1038.8,826.8 1041.2,830.2 1042.6,832"/>
<path d="M960,808 C961.4,807.8 964.0,808.1 967.1,806.8 C970.2,805.5 972.0,803.7 975.3,801.5 C978.6,799.3 980.3,798.2 983.6,795.6 C986.9,793.0 988.8,791.4 991.9,788.6 C995.0,785.8 995.8,784.1 998.9,781.5 C1002.0,778.9 1002.7,775.8 1007.2,775.6 C1011.7,775.4 1016.7,778.7 1021.4,780.3 C1026.1,781.9 1026.1,782.3 1030.8,783.8 C1035.5,785.3 1040.3,786.8 1045,788 C1049.7,789.2 1050.9,787.7 1054.4,789.7 C1057.9,791.7 1061.0,796.3 1062.7,798"/>
<path d="M1000.1,798 C999.4,800.4 998.0,805.1 996.6,809.8 C995.2,814.5 994.1,817.2 993,821.6 C991.9,826.0 991.6,829.9 991.3,832"/>
<path d="M1001.3,798 C1002.5,799.9 1005.3,803.4 1007.2,807.4 C1009.1,811.4 1010.0,816.0 1010.7,818.1"/>
<path d="M1062.7,798 C1061.0,800.8 1057.5,807.0 1054.4,812.2 C1051.3,817.4 1049.7,820.0 1047.3,824 C1044.9,828.0 1043.5,830.4 1042.6,832"/>
<path d="M1200,697.7 C1196.8,698.9 1192.1,700.3 1184.2,703.6 C1176.3,706.9 1170.0,709.5 1160.6,714.2 C1151.2,718.9 1145.3,721.8 1137,727.2 C1128.7,732.6 1126.4,734.8 1119.3,741.4 C1112.2,748.0 1108.7,752.2 1101.6,760.2 C1094.5,768.2 1089.8,773.9 1083.9,781.5 C1078.0,789.1 1075.6,792.3 1072.1,798 C1068.6,803.7 1068.1,803.0 1066.2,809.8 C1064.3,816.6 1063.4,827.6 1062.7,832"/>
<path d="M1256.6,772 C1261.3,776.1 1269.0,787.3 1280.2,792.6 C1291.4,797.9 1304.4,797.0 1312.7,798.5 C1321.0,800.0 1314.7,794.9 1321.5,800 C1328.3,805.1 1341.6,819.4 1346.6,824.2"/>
<path d="M1042,830 C1038.2,836.3 1029.9,849.5 1023,861.5 C1016.1,873.5 1011.1,880.4 1007.3,889.9 C1003.5,899.4 1006.0,901.2 1004.1,908.8 C1002.2,916.4 1000.6,921.4 997.8,927.7 C995.0,934.0 994.3,934.3 989.9,940.3 C985.5,946.3 981.8,951.1 975.8,957.7 C969.8,964.3 963.2,970.3 960,973.4"/>
<path d="M1064,830 C1062.1,834.7 1058.4,844.1 1054.6,853.6 C1050.8,863.1 1048.9,867.2 1045.1,877.3 C1041.3,887.4 1039.5,894.6 1035.7,904.1 C1031.9,913.6 1030.0,916.7 1026.2,924.6 C1022.4,932.5 1021.1,936.3 1016.7,943.5 C1012.3,950.7 1010.4,952.6 1004.1,960.8 C997.8,969.0 994.0,974.4 985.2,984.5 C976.4,994.6 965.0,1005.9 960,1011.3"/>
<path d="M989.2,830 C989.2,832.7 987.6,840.2 989.2,843.4 C990.8,846.6 995.4,845.3 997,845.8"/>
<path d="M1044.3,830 C1046.4,831.9 1051.6,837.3 1054.6,839.5 C1057.6,841.7 1058.4,840.7 1059.3,841"/>
<path d="M1043.5,886 C1045.2,886.3 1050.9,885.3 1052.2,887.5 C1053.5,889.7 1052.0,895.3 1049.8,897 C1047.6,898.7 1042.9,896.4 1041.2,896.2"/>
<path d="M1053,918.3 C1050.8,923.7 1045.2,938.3 1042,945.1 C1038.8,951.9 1038.2,950.8 1037.2,952.2"/>
<path d="M997.8,931.7 C1001.9,933.1 1013.3,935.8 1018.3,938.8 C1023.3,941.8 1019.2,943.9 1023,946.6 C1026.8,949.3 1033.4,949.4 1037.2,952.2 C1041.0,955.0 1038.5,955.9 1042,960.8 C1045.5,965.7 1051.1,971.2 1054.6,976.6 C1058.1,982.0 1058.2,982.2 1059.3,987.6 C1060.4,993.0 1059.9,1000.2 1060.1,1003.4"/>
<path d="M1053,1019.1 C1053.3,1018.5 1052.4,1016.6 1054.6,1016 C1056.8,1015.4 1060.2,1015.1 1064,1016 C1067.8,1016.9 1070.3,1017.3 1073.5,1020.7 C1076.7,1024.1 1078.5,1030.5 1079.8,1033"/>
<path d="M1342.5,483.4 C1342.3,482.1 1341.4,479.8 1341.7,477.1 C1342.0,474.4 1342.7,472.0 1344.1,470 C1345.5,468.0 1347.6,468.5 1348.8,466.9 C1350.0,465.3 1350.3,464.8 1350.3,462.1 C1350.3,459.4 1349.1,456.5 1348.8,453.5 C1348.5,450.5 1347.9,450.5 1348.8,447.2 C1349.7,443.9 1351.6,441.2 1353.5,437 C1355.4,432.8 1356.3,430.3 1358.2,426 C1360.1,421.7 1361.5,418.7 1362.9,415.7 C1364.3,412.7 1365.1,412.6 1365.3,411 C1365.5,409.4 1365.1,409.0 1363.7,407.9 C1362.3,406.8 1360.1,406.6 1358.2,405.5 C1356.3,404.4 1355.2,403.5 1354.3,402.4 C1353.4,401.3 1353.7,400.5 1353.5,400"/>
<path d="M1348.8,451.9 C1347.9,452.2 1345.7,451.9 1344.1,453.5 C1342.5,455.1 1341.2,457.1 1340.9,459.8 C1340.6,462.5 1341.9,464.9 1342.5,466.9 C1343.1,468.9 1343.8,469.4 1344.1,470"/>
<path d="M1351.1,414.6 C1352.2,414.4 1354.2,413.5 1356.6,413.4 C1359.0,413.3 1361.6,414.0 1362.9,414.2"/>
<path d="M1356.6,413.4 C1356.9,415.0 1357.9,418.7 1358.2,421.2 C1358.5,423.7 1358.2,425.0 1358.2,426"/>
<path d="M1342.5,483.4 C1343.4,484.0 1344.7,485.1 1347.2,486.5 C1349.7,487.9 1352.6,489.1 1355.1,490.5 C1357.6,491.9 1358.9,493.0 1359.8,493.6"/>
<path d="M1358.2,426 C1357.6,428.4 1356.4,433.6 1355.1,437.8 C1353.8,442.0 1352.1,443.0 1351.9,447.2 C1351.7,451.4 1353.0,454.8 1354.3,459 C1355.6,463.2 1356.2,464.5 1358.2,468.4 C1360.2,472.3 1362.0,475.3 1364.5,478.7 C1367.0,482.1 1370.2,483.4 1370.8,485.3 C1371.4,487.2 1369.2,486.6 1367.6,488.1 C1366.0,489.6 1364.5,490.8 1362.9,492.8 C1361.3,494.8 1360.4,497.2 1359.8,498.3"/>
<path d="M1078,685.9 C1075.6,689.4 1070.9,696.5 1066.2,703.6 C1061.5,710.7 1061.5,711.9 1054.4,721.3 C1047.3,730.7 1040.2,740.2 1030.8,750.8 C1021.4,761.4 1013.6,768.0 1007.2,774.4 C1000.8,780.8 1000.6,781.0 998.9,782.7"/>
<path d="M1137,724.8 C1132.3,730.0 1122.8,739.7 1113.4,750.8 C1104.0,761.9 1098.1,770.6 1089.8,780.3 C1081.5,790.0 1075.6,795.4 1072.1,799.2"/>
<path d="M1083.9,767.3 C1080.4,771.1 1072.1,781.7 1066.2,786.2 C1060.3,790.7 1056.8,789.0 1054.4,789.7"/>
<path d="M1000,361 C1000.4,366.2 1001.7,376.0 1001.8,386.8 C1001.9,397.6 1001.7,406.5 1000.7,415 C999.7,423.5 997.3,424.3 996.7,429.2 C996.1,434.1 995.8,433.1 997.7,439.3 C999.6,445.5 1004.3,455.9 1006,460"/>
<g clip-path="url(#ct2a)"><path d="M1154.1,701.3 L1177.1,694.7 M1132.7,714.2 L1155.8,707.6 M1155.8,707.6 L1178.8,700.9 M1178.8,700.9 L1201.9,694.3 M1157.4,713.8 L1180.5,707.2 M1180.5,707.2 L1203.6,700.6 M1113.0,733.3 L1136.0,726.7 M1136.0,726.7 L1159.1,720.1 M1159.1,720.1 L1182.2,713.5 M1182.2,713.5 L1205.3,706.9 M1205.3,706.9 L1228.3,700.3 M1114.7,739.6 L1137.7,733.0 M1137.7,733.0 L1160.8,726.4 M1160.8,726.4 L1183.9,719.8 M1183.9,719.8 L1207.0,713.2 M1207.0,713.2 L1230.0,706.5 M1253.1,699.9 L1276.2,693.3 M1116.3,745.9 L1139.4,739.3 M1139.4,739.3 L1162.5,732.7 M1185.6,726.1 L1208.6,719.4 M1208.6,719.4 L1231.7,712.8 M1231.7,712.8 L1254.8,706.2 M1254.8,706.2 L1277.9,699.6 M1277.9,699.6 L1300.9,693.0 M1118.0,752.2 L1141.1,745.6 M1141.1,745.6 L1164.2,739.0 M1164.2,739.0 L1187.2,732.3 M1187.2,732.3 L1210.3,725.7 M1210.3,725.7 L1233.4,719.1 M1233.4,719.1 L1256.5,712.5 M1119.7,758.5 L1142.8,751.8 M1142.8,751.8 L1165.9,745.2 M1165.9,745.2 L1188.9,738.6 M1188.9,738.6 L1212.0,732.0 M1212.0,732.0 L1235.1,725.4 M1235.1,725.4 L1258.1,718.8 M1258.1,718.8 L1281.2,712.2 M1281.2,712.2 L1304.3,705.5 M1304.3,705.5 L1327.4,698.9 M1121.4,764.7 L1144.5,758.1 M1144.5,758.1 L1167.5,751.5 M1167.5,751.5 L1190.6,744.9 M1190.6,744.9 L1213.7,738.3 M1213.7,738.3 L1236.8,731.7 M1236.8,731.7 L1259.8,725.0 M1282.9,718.4 L1306.0,711.8 M1123.1,771.0 L1146.1,764.4 M1146.1,764.4 L1169.2,757.8 M1169.2,757.8 L1192.3,751.2 M1192.3,751.2 L1215.4,744.6 M1238.4,737.9 L1261.5,731.3 M1261.5,731.3 L1284.6,724.7 M1284.6,724.7 L1307.7,718.1 M1147.8,770.7 L1170.9,764.1 M1170.9,764.1 L1194.0,757.5 M1217.0,750.8 L1240.1,744.2 M1240.1,744.2 L1263.2,737.6 M1286.3,731.0 L1309.3,724.4 M1126.4,783.6 L1149.5,777.0 M1149.5,777.0 L1172.6,770.4 M1195.7,763.7 L1218.7,757.1 M1241.8,750.5 L1264.9,743.9 M1264.9,743.9 L1288.0,737.3 M1288.0,737.3 L1311.0,730.7 M1151.2,783.2 L1174.3,776.6 M1174.3,776.6 L1197.3,770.0 M1197.3,770.0 L1220.4,763.4 M1220.4,763.4 L1243.5,756.8 M1266.6,750.2 L1289.6,743.5 M1199.0,776.3 L1222.1,769.7 M1222.1,769.7 L1245.2,763.1 M1291.3,749.8 L1314.4,743.2 M1200.7,782.6 L1223.8,776.0 M1223.8,776.0 L1246.9,769.3 M1246.9,769.3 L1269.9,762.7 M1269.9,762.7 L1293.0,756.1 M1293.0,756.1 L1316.1,749.5 M1225.5,782.2 L1248.5,775.6 M1248.5,775.6 L1271.6,769.0 M1271.6,769.0 L1294.7,762.4 M1294.7,762.4 L1317.8,755.8 M1250.2,781.9 L1273.3,775.3 M1273.3,775.3 L1296.4,768.7 M1296.4,768.7 L1319.4,762.1 M1275.0,781.6 L1298.0,774.9 M1298.0,774.9 L1321.1,768.3 M1134.4,720.5 L1136.0,726.7 M1136.0,726.7 L1137.7,733.0 M1137.7,733.0 L1139.4,739.3 M1139.4,739.3 L1141.1,745.6 M1142.8,751.8 L1144.5,758.1 M1144.5,758.1 L1146.1,764.4 M1147.8,770.7 L1149.5,777.0 M1149.5,777.0 L1151.2,783.2 M1154.1,701.3 L1155.8,707.6 M1155.8,707.6 L1157.4,713.8 M1157.4,713.8 L1159.1,720.1 M1159.1,720.1 L1160.8,726.4 M1160.8,726.4 L1162.5,732.7 M1162.5,732.7 L1164.2,739.0 M1167.5,751.5 L1169.2,757.8 M1169.2,757.8 L1170.9,764.1 M1170.9,764.1 L1172.6,770.4 M1172.6,770.4 L1174.3,776.6 M1174.3,776.6 L1175.9,782.9 M1177.1,694.7 L1178.8,700.9 M1178.8,700.9 L1180.5,707.2 M1180.5,707.2 L1182.2,713.5 M1182.2,713.5 L1183.9,719.8 M1183.9,719.8 L1185.6,726.1 M1185.6,726.1 L1187.2,732.3 M1187.2,732.3 L1188.9,738.6 M1188.9,738.6 L1190.6,744.9 M1192.3,751.2 L1194.0,757.5 M1194.0,757.5 L1195.7,763.7 M1195.7,763.7 L1197.3,770.0 M1199.0,776.3 L1200.7,782.6 M1205.3,706.9 L1207.0,713.2 M1207.0,713.2 L1208.6,719.4 M1210.3,725.7 L1212.0,732.0 M1212.0,732.0 L1213.7,738.3 M1213.7,738.3 L1215.4,744.6 M1215.4,744.6 L1217.0,750.8 M1217.0,750.8 L1218.7,757.1 M1220.4,763.4 L1222.1,769.7 M1222.1,769.7 L1223.8,776.0 M1223.8,776.0 L1225.5,782.2 M1226.7,694.0 L1228.3,700.3 M1231.7,712.8 L1233.4,719.1 M1235.1,725.4 L1236.8,731.7 M1236.8,731.7 L1238.4,737.9 M1240.1,744.2 L1241.8,750.5 M1241.8,750.5 L1243.5,756.8 M1243.5,756.8 L1245.2,763.1 M1245.2,763.1 L1246.9,769.3 M1246.9,769.3 L1248.5,775.6 M1251.4,693.6 L1253.1,699.9 M1253.1,699.9 L1254.8,706.2 M1254.8,706.2 L1256.5,712.5 M1256.5,712.5 L1258.1,718.8 M1258.1,718.8 L1259.8,725.0 M1259.8,725.0 L1261.5,731.3 M1261.5,731.3 L1263.2,737.6 M1263.2,737.6 L1264.9,743.9 M1268.2,756.4 L1269.9,762.7 M1269.9,762.7 L1271.6,769.0 M1271.6,769.0 L1273.3,775.3 M1273.3,775.3 L1275.0,781.6 M1276.2,693.3 L1277.9,699.6 M1277.9,699.6 L1279.5,705.9 M1281.2,712.2 L1282.9,718.4 M1282.9,718.4 L1284.6,724.7 M1284.6,724.7 L1286.3,731.0 M1286.3,731.0 L1288.0,737.3 M1288.0,737.3 L1289.6,743.5 M1289.6,743.5 L1291.3,749.8 M1294.7,762.4 L1296.4,768.7 M1296.4,768.7 L1298.0,774.9 M1298.0,774.9 L1299.7,781.2 M1302.6,699.3 L1304.3,705.5 M1304.3,705.5 L1306.0,711.8 "/></g>
<g clip-path="url(#ct2b)"><path d="M1114.9,754.2 L1128.2,747.1 M1128.2,747.1 L1141.5,740.1 M1118.4,759.7 L1131.7,752.6 M1131.7,752.6 L1144.9,745.6 M1144.9,745.6 L1158.2,738.5 M1108.6,772.3 L1121.8,765.2 M1135.1,758.2 L1148.4,751.1 M1148.4,751.1 L1161.7,744.0 M1112.0,777.8 L1125.3,770.7 M1125.3,770.7 L1138.6,763.7 M1151.8,756.6 L1165.1,749.6 M1115.5,783.3 L1128.7,776.3 M1128.7,776.3 L1142.0,769.2 M1181.8,748.0 L1195.1,741.0 M1118.9,788.9 L1132.2,781.8 M1145.5,774.7 L1158.7,767.7 M1172.0,760.6 L1185.3,753.6 M1109.1,801.4 L1122.4,794.4 M1148.9,780.3 L1162.2,773.2 M1162.2,773.2 L1175.5,766.1 M1188.8,759.1 L1202.0,752.0 M1202.0,752.0 L1215.3,745.0 M1112.5,807.0 L1125.8,799.9 M1139.1,792.9 L1152.4,785.8 M1152.4,785.8 L1165.7,778.7 M1165.7,778.7 L1178.9,771.7 M1178.9,771.7 L1192.2,764.6 M1205.5,757.6 L1218.8,750.5 M1142.6,798.4 L1155.8,791.3 M1155.8,791.3 L1169.1,784.3 M1182.4,777.2 L1195.7,770.1 M1195.7,770.1 L1208.9,763.1 M1208.9,763.1 L1222.2,756.0 M1222.2,756.0 L1235.5,749.0 M1235.5,749.0 L1248.8,741.9 M1119.5,818.0 L1132.7,811.0 M1132.7,811.0 L1146.0,803.9 M1146.0,803.9 L1159.3,796.8 M1172.6,789.8 L1185.8,782.7 M1199.1,775.7 L1212.4,768.6 M1212.4,768.6 L1225.7,761.5 M1238.9,754.5 L1252.2,747.4 M1252.2,747.4 L1265.5,740.4 M1109.6,830.6 L1122.9,823.5 M1162.7,802.4 L1176.0,795.3 M1189.3,788.3 L1202.6,781.2 M1202.6,781.2 L1215.8,774.1 M1215.8,774.1 L1229.1,767.1 M1229.1,767.1 L1242.4,760.0 M1242.4,760.0 L1255.7,753.0 M1255.7,753.0 L1268.9,745.9 M1113.1,836.1 L1126.4,829.1 M1139.6,822.0 L1152.9,815.0 M1152.9,815.0 L1166.2,807.9 M1166.2,807.9 L1179.5,800.8 M1192.7,793.8 L1206.0,786.7 M1219.3,779.7 L1232.6,772.6 M1232.6,772.6 L1245.8,765.5 M1245.8,765.5 L1259.1,758.5 M1259.1,758.5 L1272.4,751.4 M1116.5,841.7 L1129.8,834.6 M1129.8,834.6 L1143.1,827.5 M1143.1,827.5 L1156.4,820.5 M1156.4,820.5 L1169.6,813.4 M1209.5,792.2 L1222.7,785.2 M1222.7,785.2 L1236.0,778.1 M1120.0,847.2 L1133.3,840.1 M1133.3,840.1 L1146.5,833.1 M1146.5,833.1 L1159.8,826.0 M1173.1,818.9 L1186.4,811.9 M1186.4,811.9 L1199.6,804.8 M1199.6,804.8 L1212.9,797.8 M1212.9,797.8 L1226.2,790.7 M1239.5,783.7 L1252.8,776.6 M1110.2,859.8 L1123.4,852.7 M1123.4,852.7 L1136.7,845.7 M1150.0,838.6 L1163.3,831.5 M1163.3,831.5 L1176.5,824.5 M1176.5,824.5 L1189.8,817.4 M1189.8,817.4 L1203.1,810.4 M1216.4,803.3 L1229.7,796.2 M1242.9,789.2 L1256.2,782.1 M1113.6,865.3 L1126.9,858.2 M1126.9,858.2 L1140.2,851.2 M1140.2,851.2 L1153.4,844.1 M1153.4,844.1 L1166.7,837.1 M1166.7,837.1 L1180.0,830.0 M1180.0,830.0 L1193.3,822.9 M1193.3,822.9 L1206.6,815.9 M1206.6,815.9 L1219.8,808.8 M1233.1,801.8 L1246.4,794.7 M1259.7,787.6 L1272.9,780.6 M1117.1,870.8 L1130.3,863.8 M1130.3,863.8 L1143.6,856.7 M1143.6,856.7 L1156.9,849.6 M1156.9,849.6 L1170.2,842.6 M1170.2,842.6 L1183.5,835.5 M1210.0,821.4 L1223.3,814.3 M1223.3,814.3 L1236.6,807.3 M1236.6,807.3 L1249.8,800.2 M1249.8,800.2 L1263.1,793.2 M1120.5,876.3 L1133.8,869.3 M1133.8,869.3 L1147.1,862.2 M1147.1,862.2 L1160.4,855.2 M1160.4,855.2 L1173.6,848.1 M1173.6,848.1 L1186.9,841.1 M1186.9,841.1 L1200.2,834.0 M1213.5,826.9 L1226.7,819.9 M1226.7,819.9 L1240.0,812.8 M1240.0,812.8 L1253.3,805.8 M1110.7,888.9 L1124.0,881.9 M1124.0,881.9 L1137.3,874.8 M1137.3,874.8 L1150.5,867.8 M1163.8,860.7 L1177.1,853.6 M1190.4,846.6 L1203.6,839.5 M1203.6,839.5 L1216.9,832.5 M1216.9,832.5 L1230.2,825.4 M1230.2,825.4 L1243.5,818.3 M1243.5,818.3 L1256.7,811.3 M1256.7,811.3 L1270.0,804.2 M1114.2,894.5 L1127.4,887.4 M1127.4,887.4 L1140.7,880.3 M1140.7,880.3 L1154.0,873.3 M1154.0,873.3 L1167.3,866.2 M1167.3,866.2 L1180.5,859.2 M1180.5,859.2 L1193.8,852.1 M1193.8,852.1 L1207.1,845.0 M1207.1,845.0 L1220.4,838.0 M1220.4,838.0 L1233.6,830.9 M1233.6,830.9 L1246.9,823.9 M1246.9,823.9 L1260.2,816.8 M1130.9,892.9 L1144.2,885.9 M1144.2,885.9 L1157.4,878.8 M1157.4,878.8 L1170.7,871.7 M1170.7,871.7 L1184.0,864.7 M1184.0,864.7 L1197.3,857.6 M1197.3,857.6 L1210.5,850.6 M1223.8,843.5 L1237.1,836.5 M1237.1,836.5 L1250.4,829.4 M1250.4,829.4 L1263.6,822.3 M1107.8,912.6 L1121.1,905.5 M1121.1,905.5 L1134.3,898.5 M1134.3,898.5 L1147.6,891.4 M1147.6,891.4 L1160.9,884.3 M1160.9,884.3 L1174.2,877.3 M1200.7,863.2 L1214.0,856.1 M1214.0,856.1 L1227.3,849.0 M1240.5,842.0 L1253.8,834.9 M1253.8,834.9 L1267.1,827.9 M1137.8,904.0 L1151.1,896.9 M1190.9,875.7 L1204.2,868.7 M1244.0,847.5 L1257.3,840.4 M1257.3,840.4 L1270.6,833.4 M1141.2,909.5 L1154.5,902.4 M1154.5,902.4 L1167.8,895.4 M1181.1,888.3 L1194.3,881.3 M1207.6,874.2 L1220.9,867.1 M1234.2,860.1 L1247.5,853.0 M1158.0,908.0 L1171.2,900.9 M1171.2,900.9 L1184.5,893.9 M1197.8,886.8 L1211.1,879.7 M1224.4,872.7 L1237.6,865.6 M1237.6,865.6 L1250.9,858.6 M1250.9,858.6 L1264.2,851.5 M1161.4,913.5 L1174.7,906.4 M1174.7,906.4 L1188.0,899.4 M1188.0,899.4 L1201.3,892.3 M1201.3,892.3 L1214.5,885.3 M1214.5,885.3 L1227.8,878.2 M1227.8,878.2 L1241.1,871.1 M1254.4,864.1 L1267.6,857.0 M1178.2,912.0 L1191.4,904.9 M1191.4,904.9 L1204.7,897.8 M1204.7,897.8 L1218.0,890.8 M1218.0,890.8 L1231.3,883.7 M1231.3,883.7 L1244.5,876.7 M1244.5,876.7 L1257.8,869.6 M1208.2,903.4 L1221.4,896.3 M1221.4,896.3 L1234.7,889.3 M1248.0,882.2 L1261.3,875.1 M1211.6,908.9 L1224.9,901.8 M1224.9,901.8 L1238.2,894.8 M1238.2,894.8 L1251.4,887.7 M1241.6,900.3 L1254.9,893.2 M1254.9,893.2 L1268.2,886.2 M1231.8,912.9 L1245.1,905.8 M1245.1,905.8 L1258.3,898.8 M1258.3,898.8 L1271.6,891.7 M1121.1,905.5 L1124.5,911.0 M1120.5,876.3 L1124.0,881.9 M1124.0,881.9 L1127.4,887.4 M1127.4,887.4 L1130.9,892.9 M1130.9,892.9 L1134.3,898.5 M1134.3,898.5 L1137.8,904.0 M1120.0,847.2 L1123.4,852.7 M1126.9,858.2 L1130.3,863.8 M1130.3,863.8 L1133.8,869.3 M1137.3,874.8 L1140.7,880.3 M1140.7,880.3 L1144.2,885.9 M1147.6,891.4 L1151.1,896.9 M1154.5,902.4 L1158.0,908.0 M1119.5,818.0 L1122.9,823.5 M1133.3,840.1 L1136.7,845.7 M1140.2,851.2 L1143.6,856.7 M1143.6,856.7 L1147.1,862.2 M1147.1,862.2 L1150.5,867.8 M1150.5,867.8 L1154.0,873.3 M1154.0,873.3 L1157.4,878.8 M1160.9,884.3 L1164.3,889.9 M1164.3,889.9 L1167.8,895.4 M1167.8,895.4 L1171.2,900.9 M1171.2,900.9 L1174.7,906.4 M1118.9,788.9 L1122.4,794.4 M1122.4,794.4 L1125.8,799.9 M1125.8,799.9 L1129.3,805.4 M1129.3,805.4 L1132.7,811.0 M1132.7,811.0 L1136.2,816.5 M1143.1,827.5 L1146.5,833.1 M1146.5,833.1 L1150.0,838.6 M1150.0,838.6 L1153.4,844.1 M1153.4,844.1 L1156.9,849.6 M1160.4,855.2 L1163.8,860.7 M1163.8,860.7 L1167.3,866.2 M1167.3,866.2 L1170.7,871.7 M1170.7,871.7 L1174.2,877.3 M1174.2,877.3 L1177.6,882.8 M1177.6,882.8 L1181.1,888.3 M1181.1,888.3 L1184.5,893.9 M1184.5,893.9 L1188.0,899.4 M1188.0,899.4 L1191.4,904.9 M1191.4,904.9 L1194.9,910.4 M1125.3,770.7 L1128.7,776.3 M1132.2,781.8 L1135.6,787.3 M1135.6,787.3 L1139.1,792.9 M1139.1,792.9 L1142.6,798.4 M1146.0,803.9 L1149.5,809.4 M1149.5,809.4 L1152.9,815.0 M1156.4,820.5 L1159.8,826.0 M1159.8,826.0 L1163.3,831.5 M1163.3,831.5 L1166.7,837.1 M1166.7,837.1 L1170.2,842.6 M1173.6,848.1 L1177.1,853.6 M1177.1,853.6 L1180.5,859.2 M1187.4,870.2 L1190.9,875.7 M1190.9,875.7 L1194.3,881.3 M1194.3,881.3 L1197.8,886.8 M1201.3,892.3 L1204.7,897.8 M1204.7,897.8 L1208.2,903.4 M1208.2,903.4 L1211.6,908.9 M1124.8,741.6 L1128.2,747.1 M1131.7,752.6 L1135.1,758.2 M1138.6,763.7 L1142.0,769.2 M1142.0,769.2 L1145.5,774.7 M1145.5,774.7 L1148.9,780.3 M1155.8,791.3 L1159.3,796.8 M1162.7,802.4 L1166.2,807.9 M1166.2,807.9 L1169.6,813.4 M1173.1,818.9 L1176.5,824.5 M1183.5,835.5 L1186.9,841.1 M1193.8,852.1 L1197.3,857.6 M1197.3,857.6 L1200.7,863.2 M1200.7,863.2 L1204.2,868.7 M1207.6,874.2 L1211.1,879.7 M1211.1,879.7 L1214.5,885.3 M1214.5,885.3 L1218.0,890.8 M1218.0,890.8 L1221.4,896.3 M1221.4,896.3 L1224.9,901.8 M1224.9,901.8 L1228.3,907.4 M1144.9,745.6 L1148.4,751.1 M1151.8,756.6 L1155.3,762.2 M1155.3,762.2 L1158.7,767.7 M1158.7,767.7 L1162.2,773.2 M1162.2,773.2 L1165.7,778.7 M1165.7,778.7 L1169.1,784.3 M1172.6,789.8 L1176.0,795.3 M1179.5,800.8 L1182.9,806.4 M1182.9,806.4 L1186.4,811.9 M1193.3,822.9 L1196.7,828.5 M1196.7,828.5 L1200.2,834.0 M1203.6,839.5 L1207.1,845.0 M1207.1,845.0 L1210.5,850.6 M1214.0,856.1 L1217.4,861.6 M1224.4,872.7 L1227.8,878.2 M1231.3,883.7 L1234.7,889.3 M1234.7,889.3 L1238.2,894.8 M1238.2,894.8 L1241.6,900.3 M1241.6,900.3 L1245.1,905.8 M1161.7,744.0 L1165.1,749.6 M1172.0,760.6 L1175.5,766.1 M1175.5,766.1 L1178.9,771.7 M1185.8,782.7 L1189.3,788.3 M1189.3,788.3 L1192.7,793.8 M1192.7,793.8 L1196.2,799.3 M1199.6,804.8 L1203.1,810.4 M1203.1,810.4 L1206.6,815.9 M1210.0,821.4 L1213.5,826.9 M1213.5,826.9 L1216.9,832.5 M1216.9,832.5 L1220.4,838.0 M1220.4,838.0 L1223.8,843.5 M1227.3,849.0 L1230.7,854.6 M1230.7,854.6 L1234.2,860.1 M1234.2,860.1 L1237.6,865.6 M1237.6,865.6 L1241.1,871.1 M1241.1,871.1 L1244.5,876.7 M1244.5,876.7 L1248.0,882.2 M1248.0,882.2 L1251.4,887.7 M1251.4,887.7 L1254.9,893.2 M1254.9,893.2 L1258.3,898.8 M1258.3,898.8 L1261.8,904.3 M1192.2,764.6 L1195.7,770.1 M1195.7,770.1 L1199.1,775.7 M1199.1,775.7 L1202.6,781.2 M1206.0,786.7 L1209.5,792.2 M1209.5,792.2 L1212.9,797.8 M1212.9,797.8 L1216.4,803.3 M1216.4,803.3 L1219.8,808.8 M1219.8,808.8 L1223.3,814.3 M1233.6,830.9 L1237.1,836.5 M1237.1,836.5 L1240.5,842.0 M1240.5,842.0 L1244.0,847.5 M1198.6,746.5 L1202.0,752.0 M1205.5,757.6 L1208.9,763.1 M1208.9,763.1 L1212.4,768.6 M1212.4,768.6 L1215.8,774.1 M1215.8,774.1 L1219.3,779.7 M1219.3,779.7 L1222.7,785.2 M1222.7,785.2 L1226.2,790.7 M1226.2,790.7 L1229.7,796.2 M1233.1,801.8 L1236.6,807.3 M1240.0,812.8 L1243.5,818.3 M1243.5,818.3 L1246.9,823.9 M1218.8,750.5 L1222.2,756.0 M1222.2,756.0 L1225.7,761.5 M1225.7,761.5 L1229.1,767.1 M1229.1,767.1 L1232.6,772.6 M1232.6,772.6 L1236.0,778.1 M1239.5,783.7 L1242.9,789.2 M1242.9,789.2 L1246.4,794.7 M1253.3,805.8 L1256.7,811.3 M1256.7,811.3 L1260.2,816.8 M1232.0,743.4 L1235.5,749.0 M1235.5,749.0 L1238.9,754.5 M1238.9,754.5 L1242.4,760.0 M1249.3,771.1 L1252.8,776.6 M1252.8,776.6 L1256.2,782.1 M1259.7,787.6 L1263.1,793.2 M1248.8,741.9 L1252.2,747.4 M1252.2,747.4 L1255.7,753.0 M1255.7,753.0 L1259.1,758.5 "/></g>
<g clip-path="url(#ct1)"><path d="M960.8,491.0 L975.7,480.3 M967.7,497.7 L982.5,487.1 M997.4,476.4 L1012.2,465.8 M959.7,515.2 L974.6,504.5 M989.4,493.9 L1004.2,483.2 M966.6,521.9 L981.4,511.3 M1011.1,490.0 L1025.9,479.3 M1025.9,479.3 L1040.8,468.7 M988.3,518.0 L1003.1,507.4 M1003.1,507.4 L1018.0,496.7 M1018.0,496.7 L1032.8,486.1 M1032.8,486.1 L1047.6,475.4 M1047.6,475.4 L1062.4,464.8 M980.3,535.5 L995.2,524.8 M995.2,524.8 L1010.0,514.2 M1039.6,492.8 L1054.5,482.2 M1054.5,482.2 L1069.3,471.5 M972.4,552.9 L987.2,542.2 M987.2,542.2 L1002.0,531.6 M1002.0,531.6 L1016.9,520.9 M1016.9,520.9 L1031.7,510.3 M1076.2,478.3 L1091.0,467.6 M964.4,570.3 L979.2,559.7 M979.2,559.7 L994.1,549.0 M994.1,549.0 L1008.9,538.3 M1008.9,538.3 L1023.7,527.7 M1023.7,527.7 L1038.5,517.0 M1038.5,517.0 L1053.4,506.4 M1053.4,506.4 L1068.2,495.7 M1083.0,485.1 L1097.9,474.4 M956.4,587.7 L971.3,577.1 M971.3,577.1 L986.1,566.4 M986.1,566.4 L1000.9,555.8 M1000.9,555.8 L1015.7,545.1 M1015.7,545.1 L1030.6,534.5 M1045.4,523.8 L1060.2,513.1 M1060.2,513.1 L1075.1,502.5 M1089.9,491.8 L1104.7,481.2 M963.3,594.5 L978.1,583.9 M978.1,583.9 L992.9,573.2 M992.9,573.2 L1007.8,562.5 M1007.8,562.5 L1022.6,551.9 M1022.6,551.9 L1037.4,541.2 M1037.4,541.2 L1052.3,530.6 M1052.3,530.6 L1067.1,519.9 M1067.1,519.9 L1081.9,509.3 M1081.9,509.3 L1096.8,498.6 M1096.8,498.6 L1111.6,487.9 M1111.6,487.9 L1126.4,477.3 M1126.4,477.3 L1141.2,466.6 M955.3,611.9 L970.2,601.3 M985.0,590.6 L999.8,580.0 M999.8,580.0 L1014.6,569.3 M1014.6,569.3 L1029.5,558.7 M1029.5,558.7 L1044.3,548.0 M1044.3,548.0 L1059.1,537.3 M1059.1,537.3 L1074.0,526.7 M1074.0,526.7 L1088.8,516.0 M1103.6,505.4 L1118.4,494.7 M977.0,608.0 L991.8,597.4 M1021.5,576.1 L1036.3,565.4 M1036.3,565.4 L1051.2,554.8 M1066.0,544.1 L1080.8,533.4 M1080.8,533.4 L1095.7,522.8 M1095.7,522.8 L1110.5,512.1 M1110.5,512.1 L1125.3,501.5 M1125.3,501.5 L1140.1,490.8 M1155.0,480.2 L1169.8,469.5 M969.0,625.5 L983.9,614.8 M983.9,614.8 L998.7,604.2 M998.7,604.2 L1013.5,593.5 M1072.9,550.9 L1087.7,540.2 M1087.7,540.2 L1102.5,529.6 M1132.2,508.2 L1147.0,497.6 M1147.0,497.6 L1161.8,486.9 M1161.8,486.9 L1176.7,476.3 M1176.7,476.3 L1191.5,465.6 M961.1,642.9 L975.9,632.2 M975.9,632.2 L990.7,621.6 M990.7,621.6 L1005.6,610.9 M1005.6,610.9 L1020.4,600.3 M1035.2,589.6 L1050.1,579.0 M1050.1,579.0 L1064.9,568.3 M1064.9,568.3 L1079.7,557.6 M1079.7,557.6 L1094.5,547.0 M1094.5,547.0 L1109.4,536.3 M1109.4,536.3 L1124.2,525.7 M1139.0,515.0 L1153.9,504.4 M982.8,639.0 L997.6,628.3 M1056.9,585.7 L1071.8,575.1 M1086.6,564.4 L1101.4,553.8 M1101.4,553.8 L1116.2,543.1 M1145.9,521.8 L1160.7,511.1 M1160.7,511.1 L1175.6,500.5 M1190.4,489.8 L1205.2,479.2 M1205.2,479.2 L1220.0,468.5 M960.0,667.1 L974.8,656.4 M974.8,656.4 L989.6,645.8 M1019.3,624.5 L1034.1,613.8 M1049.0,603.1 L1063.8,592.5 M1093.4,571.2 L1108.3,560.5 M1108.3,560.5 L1123.1,549.9 M1137.9,539.2 L1152.8,528.6 M1167.6,517.9 L1182.4,507.2 M1182.4,507.2 L1197.2,496.6 M1197.2,496.6 L1212.1,485.9 M1212.1,485.9 L1226.9,475.3 M966.8,673.8 L981.7,663.2 M996.5,652.5 L1011.3,641.9 M1011.3,641.9 L1026.2,631.2 M1026.2,631.2 L1041.0,620.6 M1041.0,620.6 L1055.8,609.9 M1070.6,599.3 L1085.5,588.6 M1085.5,588.6 L1100.3,577.9 M1100.3,577.9 L1115.1,567.3 M1115.1,567.3 L1130.0,556.6 M1130.0,556.6 L1144.8,546.0 M1144.8,546.0 L1159.6,535.3 M1174.5,524.7 L1189.3,514.0 M1189.3,514.0 L1204.1,503.3 M973.7,680.6 L988.5,670.0 M988.5,670.0 L1003.4,659.3 M1003.4,659.3 L1018.2,648.6 M1018.2,648.6 L1033.0,638.0 M1033.0,638.0 L1047.8,627.3 M1047.8,627.3 L1062.7,616.7 M1062.7,616.7 L1077.5,606.0 M1136.8,563.4 L1151.7,552.7 M1151.7,552.7 L1166.5,542.1 M1166.5,542.1 L1181.3,531.4 M1181.3,531.4 L1196.1,520.8 M1196.1,520.8 L1211.0,510.1 M1211.0,510.1 L1225.8,499.5 M1240.6,488.8 L1255.5,478.1 M1255.5,478.1 L1270.3,467.5 M965.7,698.0 L980.6,687.4 M980.6,687.4 L995.4,676.7 M995.4,676.7 L1010.2,666.1 M1025.1,655.4 L1039.9,644.8 M1039.9,644.8 L1054.7,634.1 M1054.7,634.1 L1069.5,623.4 M1069.5,623.4 L1084.4,612.8 M1084.4,612.8 L1099.2,602.1 M1099.2,602.1 L1114.0,591.5 M1114.0,591.5 L1128.9,580.8 M1128.9,580.8 L1143.7,570.2 M1188.2,538.2 L1203.0,527.5 M1203.0,527.5 L1217.8,516.9 M1232.7,506.2 L1247.5,495.6 M1247.5,495.6 L1262.3,484.9 M1262.3,484.9 L1277.2,474.3 M957.8,715.5 L972.6,704.8 M972.6,704.8 L987.4,694.1 M1017.1,672.8 L1031.9,662.2 M1031.9,662.2 L1046.7,651.5 M1046.7,651.5 L1061.6,640.9 M1061.6,640.9 L1076.4,630.2 M1076.4,630.2 L1091.2,619.6 M1091.2,619.6 L1106.1,608.9 M1106.1,608.9 L1120.9,598.2 M1150.6,576.9 L1165.4,566.3 M1180.2,555.6 L1195.0,545.0 M1209.9,534.3 L1224.7,523.7 M1239.5,513.0 L1254.4,502.3 M1254.4,502.3 L1269.2,491.7 M1269.2,491.7 L1284.0,481.0 M1284.0,481.0 L1298.8,470.4 M964.6,722.2 L979.5,711.6 M979.5,711.6 L994.3,700.9 M994.3,700.9 L1009.1,690.3 M1009.1,690.3 L1023.9,679.6 M1023.9,679.6 L1038.8,668.9 M1038.8,668.9 L1053.6,658.3 M1068.4,647.6 L1083.3,637.0 M1112.9,615.7 L1127.8,605.0 M1142.6,594.4 L1157.4,583.7 M1157.4,583.7 L1172.2,573.0 M1172.2,573.0 L1187.1,562.4 M1187.1,562.4 L1201.9,551.7 M1201.9,551.7 L1216.7,541.1 M1216.7,541.1 L1231.6,530.4 M1231.6,530.4 L1246.4,519.8 M1261.2,509.1 L1276.0,498.4 M1305.7,477.1 L1320.5,466.5 M956.7,739.7 L971.5,729.0 M971.5,729.0 L986.3,718.3 M986.3,718.3 L1001.2,707.7 M1001.2,707.7 L1016.0,697.0 M1016.0,697.0 L1030.8,686.4 M1030.8,686.4 L1045.6,675.7 M1045.6,675.7 L1060.5,665.1 M1060.5,665.1 L1075.3,654.4 M1075.3,654.4 L1090.1,643.7 M1090.1,643.7 L1105.0,633.1 M1105.0,633.1 L1119.8,622.4 M1119.8,622.4 L1134.6,611.8 M1134.6,611.8 L1149.4,601.1 M1149.4,601.1 L1164.3,590.5 M1164.3,590.5 L1179.1,579.8 M1179.1,579.8 L1193.9,569.2 M1208.8,558.5 L1223.6,547.8 M1223.6,547.8 L1238.4,537.2 M1238.4,537.2 L1253.3,526.5 M1282.9,505.2 L1297.7,494.6 M978.4,735.8 L993.2,725.1 M993.2,725.1 L1008.0,714.4 M1008.0,714.4 L1022.8,703.8 M1037.7,693.1 L1052.5,682.5 M1052.5,682.5 L1067.3,671.8 M1082.2,661.2 L1097.0,650.5 M1097.0,650.5 L1111.8,639.9 M1126.6,629.2 L1141.5,618.5 M1141.5,618.5 L1156.3,607.9 M1156.3,607.9 L1171.1,597.2 M1171.1,597.2 L1186.0,586.6 M1186.0,586.6 L1200.8,575.9 M1215.6,565.3 L1230.5,554.6 M1230.5,554.6 L1245.3,544.0 M1245.3,544.0 L1260.1,533.3 M1274.9,522.6 L1289.8,512.0 M1289.8,512.0 L1304.6,501.3 M1319.4,490.7 L1334.3,480.0 M1334.3,480.0 L1349.1,469.4 M970.4,753.2 L985.2,742.5 M985.2,742.5 L1000.0,731.9 M1000.0,731.9 L1014.9,721.2 M1029.7,710.6 L1044.5,699.9 M1044.5,699.9 L1059.4,689.2 M1059.4,689.2 L1074.2,678.6 M1118.7,646.6 L1133.5,636.0 M1163.2,614.7 L1178.0,604.0 M1178.0,604.0 L1192.8,593.3 M1192.8,593.3 L1207.7,582.7 M1237.3,561.4 L1252.1,550.7 M1252.1,550.7 L1267.0,540.1 M1267.0,540.1 L1281.8,529.4 M1311.5,508.1 L1326.3,497.4 M1326.3,497.4 L1341.1,486.8 M1356.0,476.1 L1370.8,465.5 M962.4,770.6 L977.2,760.0 M977.2,760.0 L992.1,749.3 M1006.9,738.6 L1021.7,728.0 M1036.6,717.3 L1051.4,706.7 M1051.4,706.7 L1066.2,696.0 M1066.2,696.0 L1081.1,685.4 M1081.1,685.4 L1095.9,674.7 M1095.9,674.7 L1110.7,664.0 M1140.4,642.7 L1155.2,632.1 M1229.4,578.8 L1244.2,568.1 M1244.2,568.1 L1259.0,557.5 M1259.0,557.5 L1273.8,546.8 M1273.8,546.8 L1288.7,536.2 M1288.7,536.2 L1303.5,525.5 M1318.3,514.9 L1333.2,504.2 M969.3,777.4 L984.1,766.7 M984.1,766.7 L998.9,756.1 M1013.8,745.4 L1028.6,734.8 M1028.6,734.8 L1043.4,724.1 M1058.3,713.4 L1073.1,702.8 M1073.1,702.8 L1087.9,692.1 M1087.9,692.1 L1102.7,681.5 M1102.7,681.5 L1117.6,670.8 M1117.6,670.8 L1132.4,660.2 M1132.4,660.2 L1147.2,649.5 M1147.2,649.5 L1162.1,638.8 M1162.1,638.8 L1176.9,628.2 M1176.9,628.2 L1191.7,617.5 M1191.7,617.5 L1206.6,606.9 M1206.6,606.9 L1221.4,596.2 M1221.4,596.2 L1236.2,585.6 M1236.2,585.6 L1251.0,574.9 M1251.0,574.9 L1265.9,564.3 M1310.4,532.3 L1325.2,521.6 M1369.7,489.7 L1384.5,479.0 M1384.5,479.0 L1399.3,468.3 M961.3,794.8 L976.1,784.1 M976.1,784.1 L991.0,773.5 M1005.8,762.8 L1020.6,752.2 M1020.6,752.2 L1035.5,741.5 M1050.3,730.9 L1065.1,720.2 M1080.0,709.6 L1094.8,698.9 M1094.8,698.9 L1109.6,688.2 M1109.6,688.2 L1124.4,677.6 M1139.3,666.9 L1154.1,656.3 M1154.1,656.3 L1168.9,645.6 M1168.9,645.6 L1183.8,635.0 M1198.6,624.3 L1213.4,613.6 M1213.4,613.6 L1228.2,603.0 M1228.2,603.0 L1243.1,592.3 M1257.9,581.7 L1272.7,571.0 M1317.2,539.1 L1332.1,528.4 M1361.7,507.1 L1376.5,496.4 M1391.4,485.8 L1406.2,475.1 M1406.2,475.1 L1421.0,464.5 M968.2,801.6 L983.0,790.9 M983.0,790.9 L997.8,780.3 M997.8,780.3 L1012.7,769.6 M1012.7,769.6 L1027.5,758.9 M1027.5,758.9 L1042.3,748.3 M1042.3,748.3 L1057.2,737.6 M1057.2,737.6 L1072.0,727.0 M1086.8,716.3 L1101.6,705.7 M1101.6,705.7 L1116.5,695.0 M1131.3,684.3 L1146.1,673.7 M1146.1,673.7 L1161.0,663.0 M1161.0,663.0 L1175.8,652.4 M1175.8,652.4 L1190.6,641.7 M1190.6,641.7 L1205.4,631.1 M1220.3,620.4 L1235.1,609.8 M1235.1,609.8 L1249.9,599.1 M1249.9,599.1 L1264.8,588.4 M1264.8,588.4 L1279.6,577.8 M1279.6,577.8 L1294.4,567.1 M1294.4,567.1 L1309.3,556.5 M1309.3,556.5 L1324.1,545.8 M1324.1,545.8 L1338.9,535.2 M1338.9,535.2 L1353.7,524.5 M1398.2,492.5 L1413.1,481.9 M960.2,819.0 L975.0,808.3 M975.0,808.3 L989.9,797.7 M989.9,797.7 L1004.7,787.0 M1004.7,787.0 L1019.5,776.4 M1019.5,776.4 L1034.4,765.7 M1034.4,765.7 L1049.2,755.1 M1064.0,744.4 L1078.8,733.7 M1078.8,733.7 L1093.7,723.1 M1093.7,723.1 L1108.5,712.4 M1108.5,712.4 L1123.3,701.8 M1123.3,701.8 L1138.2,691.1 M1153.0,680.5 L1167.8,669.8 M1212.3,637.8 L1227.1,627.2 M1242.0,616.5 L1256.8,605.9 M1256.8,605.9 L1271.6,595.2 M1271.6,595.2 L1286.5,584.6 M1286.5,584.6 L1301.3,573.9 M1301.3,573.9 L1316.1,563.2 M1316.1,563.2 L1330.9,552.6 M1330.9,552.6 L1345.8,541.9 M1345.8,541.9 L1360.6,531.3 M1360.6,531.3 L1375.4,520.6 M981.9,815.1 L996.7,804.4 M996.7,804.4 L1011.6,793.8 M1011.6,793.8 L1026.4,783.1 M1070.9,751.2 L1085.7,740.5 M1085.7,740.5 L1100.5,729.9 M1100.5,729.9 L1115.4,719.2 M1115.4,719.2 L1130.2,708.5 M1130.2,708.5 L1145.0,697.9 M1145.0,697.9 L1159.9,687.2 M1159.9,687.2 L1174.7,676.6 M1189.5,665.9 L1204.3,655.3 M1219.2,644.6 L1234.0,633.9 M1234.0,633.9 L1248.8,623.3 M1263.7,612.6 L1278.5,602.0 M1278.5,602.0 L1293.3,591.3 M1293.3,591.3 L1308.2,580.7 M1308.2,580.7 L1323.0,570.0 M1352.6,548.7 L1367.5,538.0 M1382.3,527.4 L1397.1,516.7 M1412.0,506.1 L1426.8,495.4 M1003.6,811.2 L1018.4,800.6 M1033.3,789.9 L1048.1,779.2 M1048.1,779.2 L1062.9,768.6 M1062.9,768.6 L1077.7,757.9 M1077.7,757.9 L1092.6,747.3 M1107.4,736.6 L1122.2,726.0 M1122.2,726.0 L1137.1,715.3 M1166.7,694.0 L1181.5,683.3 M1181.5,683.3 L1196.4,672.7 M1196.4,672.7 L1211.2,662.0 M1226.0,651.4 L1240.9,640.7 M1240.9,640.7 L1255.7,630.1 M1255.7,630.1 L1270.5,619.4 M1285.4,608.7 L1300.2,598.1 M1300.2,598.1 L1315.0,587.4 M1329.8,576.8 L1344.7,566.1 M1344.7,566.1 L1359.5,555.5 M1359.5,555.5 L1374.3,544.8 M1374.3,544.8 L1389.2,534.2 M1389.2,534.2 L1404.0,523.5 M1404.0,523.5 L1418.8,512.8 M1010.5,818.0 L1025.3,807.3 M1025.3,807.3 L1040.1,796.7 M1040.1,796.7 L1054.9,786.0 M1054.9,786.0 L1069.8,775.4 M1114.3,743.4 L1129.1,732.7 M1129.1,732.7 L1143.9,722.1 M1143.9,722.1 L1158.8,711.4 M1188.4,690.1 L1203.2,679.4 M1218.1,668.8 L1232.9,658.1 M1232.9,658.1 L1247.7,647.5 M1247.7,647.5 L1262.6,636.8 M1262.6,636.8 L1277.4,626.2 M1277.4,626.2 L1292.2,615.5 M1292.2,615.5 L1307.0,604.9 M1307.0,604.9 L1321.9,594.2 M1321.9,594.2 L1336.7,583.5 M1336.7,583.5 L1351.5,572.9 M1366.4,562.2 L1381.2,551.6 M1381.2,551.6 L1396.0,540.9 M1396.0,540.9 L1410.9,530.3 M1410.9,530.3 L1425.7,519.6 M1032.1,814.1 L1047.0,803.4 M1061.8,792.8 L1076.6,782.1 M1091.5,771.5 L1106.3,760.8 M1106.3,760.8 L1121.1,750.2 M1121.1,750.2 L1136.0,739.5 M1136.0,739.5 L1150.8,728.8 M1150.8,728.8 L1165.6,718.2 M1180.4,707.5 L1195.3,696.9 M1195.3,696.9 L1210.1,686.2 M1210.1,686.2 L1224.9,675.6 M1224.9,675.6 L1239.8,664.9 M1284.2,632.9 L1299.1,622.3 M1299.1,622.3 L1313.9,611.6 M1328.7,601.0 L1343.6,590.3 M1343.6,590.3 L1358.4,579.7 M1358.4,579.7 L1373.2,569.0 M1053.8,810.2 L1068.7,799.5 M1113.2,767.6 L1128.0,756.9 M1128.0,756.9 L1142.8,746.3 M1142.8,746.3 L1157.6,735.6 M1157.6,735.6 L1172.5,725.0 M1172.5,725.0 L1187.3,714.3 M1187.3,714.3 L1202.1,703.6 M1202.1,703.6 L1217.0,693.0 M1217.0,693.0 L1231.8,682.3 M1261.5,661.0 L1276.3,650.4 M1291.1,639.7 L1305.9,629.0 M1305.9,629.0 L1320.8,618.4 M1320.8,618.4 L1335.6,607.7 M1380.1,575.8 L1394.9,565.1 M1394.9,565.1 L1409.7,554.5 M1409.7,554.5 L1424.6,543.8 M1060.7,817.0 L1075.5,806.3 M1075.5,806.3 L1090.4,795.7 M1120.0,774.3 L1134.8,763.7 M1134.8,763.7 L1149.7,753.0 M1149.7,753.0 L1164.5,742.4 M1164.5,742.4 L1179.3,731.7 M1194.2,721.1 L1209.0,710.4 M1209.0,710.4 L1223.8,699.8 M1223.8,699.8 L1238.7,689.1 M1238.7,689.1 L1253.5,678.4 M1253.5,678.4 L1268.3,667.8 M1312.8,635.8 L1327.6,625.2 M1327.6,625.2 L1342.5,614.5 M1342.5,614.5 L1357.3,603.8 M1357.3,603.8 L1372.1,593.2 M1372.1,593.2 L1387.0,582.5 M1387.0,582.5 L1401.8,571.9 M1401.8,571.9 L1416.6,561.2 M1082.4,813.1 L1097.2,802.4 M1112.1,791.8 L1126.9,781.1 M1141.7,770.5 L1156.5,759.8 M1156.5,759.8 L1171.4,749.1 M1171.4,749.1 L1186.2,738.5 M1215.9,717.2 L1230.7,706.5 M1230.7,706.5 L1245.5,695.9 M1275.2,674.6 L1290.0,663.9 M1290.0,663.9 L1304.8,653.2 M1304.8,653.2 L1319.7,642.6 M1334.5,631.9 L1349.3,621.3 M1364.2,610.6 L1379.0,600.0 M1379.0,600.0 L1393.8,589.3 M1393.8,589.3 L1408.6,578.6 M1408.6,578.6 L1423.5,568.0 M1089.3,819.8 L1104.1,809.2 M1104.1,809.2 L1118.9,798.5 M1148.6,777.2 L1163.4,766.6 M1163.4,766.6 L1178.2,755.9 M1178.2,755.9 L1193.1,745.3 M1207.9,734.6 L1222.7,723.9 M1222.7,723.9 L1237.6,713.3 M1237.6,713.3 L1252.4,702.6 M1267.2,692.0 L1282.0,681.3 M1282.0,681.3 L1296.9,670.7 M1326.5,649.3 L1341.4,638.7 M1341.4,638.7 L1356.2,628.0 M1356.2,628.0 L1371.0,617.4 M1385.8,606.7 L1400.7,596.1 M1400.7,596.1 L1415.5,585.4 M1110.9,816.0 L1125.8,805.3 M1140.6,794.6 L1155.4,784.0 M1155.4,784.0 L1170.3,773.3 M1170.3,773.3 L1185.1,762.7 M1214.8,741.4 L1229.6,730.7 M1229.6,730.7 L1244.4,720.1 M1244.4,720.1 L1259.2,709.4 M1259.2,709.4 L1274.1,698.7 M1303.7,677.4 L1318.6,666.8 M1318.6,666.8 L1333.4,656.1 M1333.4,656.1 L1348.2,645.5 M1363.1,634.8 L1377.9,624.1 M1392.7,613.5 L1407.5,602.8 M1162.3,790.8 L1177.1,780.1 M1177.1,780.1 L1192.0,769.4 M1192.0,769.4 L1206.8,758.8 M1206.8,758.8 L1221.6,748.1 M1221.6,748.1 L1236.4,737.5 M1236.4,737.5 L1251.3,726.8 M1251.3,726.8 L1266.1,716.2 M1280.9,705.5 L1295.8,694.9 M1295.8,694.9 L1310.6,684.2 M1325.4,673.5 L1340.3,662.9 M1340.3,662.9 L1355.1,652.2 M1355.1,652.2 L1369.9,641.6 M1369.9,641.6 L1384.7,630.9 M1139.5,818.8 L1154.3,808.2 M1154.3,808.2 L1169.2,797.5 M1184.0,786.9 L1198.8,776.2 M1213.7,765.6 L1228.5,754.9 M1228.5,754.9 L1243.3,744.2 M1243.3,744.2 L1258.1,733.6 M1258.1,733.6 L1273.0,722.9 M1287.8,712.3 L1302.6,701.6 M1302.6,701.6 L1317.5,691.0 M1317.5,691.0 L1332.3,680.3 M1347.1,669.7 L1361.9,659.0 M1361.9,659.0 L1376.8,648.3 M1391.6,637.7 L1406.4,627.0 M1406.4,627.0 L1421.3,616.4 M1161.2,814.9 L1176.0,804.3 M1220.5,772.3 L1235.3,761.7 M1250.2,751.0 L1265.0,740.4 M1265.0,740.4 L1279.8,729.7 M1279.8,729.7 L1294.7,719.0 M1309.5,708.4 L1324.3,697.7 M1324.3,697.7 L1339.1,687.1 M1354.0,676.4 L1368.8,665.8 M1368.8,665.8 L1383.6,655.1 M1413.3,633.8 L1428.1,623.1 M1182.9,811.1 L1197.7,800.4 M1197.7,800.4 L1212.5,789.7 M1212.5,789.7 L1227.4,779.1 M1257.0,757.8 L1271.9,747.1 M1271.9,747.1 L1286.7,736.5 M1286.7,736.5 L1301.5,725.8 M1301.5,725.8 L1316.4,715.2 M1331.2,704.5 L1346.0,693.8 M1346.0,693.8 L1360.8,683.2 M1360.8,683.2 L1375.7,672.5 M1390.5,661.9 L1405.3,651.2 M1405.3,651.2 L1420.2,640.6 M1189.7,817.8 L1204.6,807.2 M1204.6,807.2 L1219.4,796.5 M1219.4,796.5 L1234.2,785.9 M1234.2,785.9 L1249.1,775.2 M1249.1,775.2 L1263.9,764.5 M1263.9,764.5 L1278.7,753.9 M1278.7,753.9 L1293.6,743.2 M1323.2,721.9 L1338.0,711.3 M1382.5,679.3 L1397.4,668.6 M1397.4,668.6 L1412.2,658.0 M1412.2,658.0 L1427.0,647.3 M1211.4,813.9 L1226.3,803.3 M1226.3,803.3 L1241.1,792.6 M1285.6,760.7 L1300.4,750.0 M1300.4,750.0 L1315.2,739.3 M1315.2,739.3 L1330.1,728.7 M1344.9,718.0 L1359.7,707.4 M1359.7,707.4 L1374.6,696.7 M1374.6,696.7 L1389.4,686.1 M1389.4,686.1 L1404.2,675.4 M1404.2,675.4 L1419.1,664.8 M1233.1,810.0 L1248.0,799.4 M1262.8,788.7 L1277.6,778.1 M1277.6,778.1 L1292.5,767.4 M1292.5,767.4 L1307.3,756.8 M1307.3,756.8 L1322.1,746.1 M1322.1,746.1 L1336.9,735.5 M1396.3,692.8 L1411.1,682.2 M1411.1,682.2 L1425.9,671.5 M1240.0,816.8 L1254.8,806.2 M1254.8,806.2 L1269.7,795.5 M1269.7,795.5 L1284.5,784.8 M1284.5,784.8 L1299.3,774.2 M1314.1,763.5 L1329.0,752.9 M1329.0,752.9 L1343.8,742.2 M1343.8,742.2 L1358.6,731.6 M1373.5,720.9 L1388.3,710.3 M1388.3,710.3 L1403.1,699.6 M1403.1,699.6 L1417.9,688.9 M1261.7,812.9 L1276.5,802.3 M1291.3,791.6 L1306.2,781.0 M1335.8,759.6 L1350.7,749.0 M1350.7,749.0 L1365.5,738.3 M1365.5,738.3 L1380.3,727.7 M1380.3,727.7 L1395.2,717.0 M1395.2,717.0 L1410.0,706.4 M1410.0,706.4 L1424.8,695.7 M1283.4,809.0 L1298.2,798.4 M1298.2,798.4 L1313.0,787.7 M1327.9,777.1 L1342.7,766.4 M1342.7,766.4 L1357.5,755.8 M1372.4,745.1 L1387.2,734.4 M1305.1,805.1 L1319.9,794.5 M1319.9,794.5 L1334.7,783.8 M1364.4,762.5 L1379.2,751.9 M1379.2,751.9 L1394.0,741.2 M1408.9,730.6 L1423.7,719.9 M1326.8,801.3 L1341.6,790.6 M1341.6,790.6 L1356.4,779.9 M1386.1,758.6 L1400.9,748.0 M1400.9,748.0 L1415.7,737.3 M1318.8,818.7 L1333.6,808.0 M1363.3,786.7 L1378.1,776.1 M1378.1,776.1 L1392.9,765.4 M1392.9,765.4 L1407.8,754.7 M1407.8,754.7 L1422.6,744.1 M1340.5,814.8 L1355.3,804.1 M1355.3,804.1 L1370.1,793.5 M1370.1,793.5 L1385.0,782.8 M1385.0,782.8 L1399.8,772.2 M1399.8,772.2 L1414.6,761.5 M1414.6,761.5 L1429.5,750.9 M1362.2,810.9 L1377.0,800.2 M1377.0,800.2 L1391.8,789.6 M1406.7,778.9 L1421.5,768.3 M1398.7,796.4 L1413.5,785.7 M1413.5,785.7 L1428.4,775.0 M1390.7,813.8 L1405.6,803.1 M1405.6,803.1 L1420.4,792.5 M1397.6,820.6 L1412.4,809.9 M1412.4,809.9 L1427.3,799.2 M969.3,777.4 L976.1,784.1 M976.1,784.1 L983.0,790.9 M983.0,790.9 L989.9,797.7 M996.7,804.4 L1003.6,811.2 M963.5,746.4 L970.4,753.2 M970.4,753.2 L977.2,760.0 M984.1,766.7 L991.0,773.5 M991.0,773.5 L997.8,780.3 M997.8,780.3 L1004.7,787.0 M1011.6,793.8 L1018.4,800.6 M1018.4,800.6 L1025.3,807.3 M1025.3,807.3 L1032.1,814.1 M978.4,735.8 L985.2,742.5 M985.2,742.5 L992.1,749.3 M992.1,749.3 L998.9,756.1 M1005.8,762.8 L1012.7,769.6 M1012.7,769.6 L1019.5,776.4 M1019.5,776.4 L1026.4,783.1 M1026.4,783.1 L1033.3,789.9 M1033.3,789.9 L1040.1,796.7 M1047.0,803.4 L1053.8,810.2 M965.7,698.0 L972.6,704.8 M972.6,704.8 L979.5,711.6 M979.5,711.6 L986.3,718.3 M986.3,718.3 L993.2,725.1 M1000.0,731.9 L1006.9,738.6 M1006.9,738.6 L1013.8,745.4 M1013.8,745.4 L1020.6,752.2 M1020.6,752.2 L1027.5,758.9 M1034.4,765.7 L1041.2,772.5 M1041.2,772.5 L1048.1,779.2 M1048.1,779.2 L1054.9,786.0 M1061.8,792.8 L1068.7,799.5 M1068.7,799.5 L1075.5,806.3 M966.8,673.8 L973.7,680.6 M980.6,687.4 L987.4,694.1 M987.4,694.1 L994.3,700.9 M994.3,700.9 L1001.2,707.7 M1001.2,707.7 L1008.0,714.4 M1008.0,714.4 L1014.9,721.2 M1014.9,721.2 L1021.7,728.0 M1021.7,728.0 L1028.6,734.8 M1028.6,734.8 L1035.5,741.5 M1035.5,741.5 L1042.3,748.3 M1042.3,748.3 L1049.2,755.1 M1056.0,761.8 L1062.9,768.6 M1062.9,768.6 L1069.8,775.4 M1069.8,775.4 L1076.6,782.1 M1076.6,782.1 L1083.5,788.9 M1083.5,788.9 L1090.4,795.7 M1090.4,795.7 L1097.2,802.4 M1104.1,809.2 L1110.9,816.0 M981.7,663.2 L988.5,670.0 M995.4,676.7 L1002.3,683.5 M1002.3,683.5 L1009.1,690.3 M1016.0,697.0 L1022.8,703.8 M1029.7,710.6 L1036.6,717.3 M1036.6,717.3 L1043.4,724.1 M1043.4,724.1 L1050.3,730.9 M1057.2,737.6 L1064.0,744.4 M1064.0,744.4 L1070.9,751.2 M1070.9,751.2 L1077.7,757.9 M1084.6,764.7 L1091.5,771.5 M1091.5,771.5 L1098.3,778.2 M1098.3,778.2 L1105.2,785.0 M1105.2,785.0 L1112.1,791.8 M1118.9,798.5 L1125.8,805.3 M1125.8,805.3 L1132.6,812.1 M969.0,625.5 L975.9,632.2 M975.9,632.2 L982.8,639.0 M989.6,645.8 L996.5,652.5 M996.5,652.5 L1003.4,659.3 M1010.2,666.1 L1017.1,672.8 M1017.1,672.8 L1023.9,679.6 M1030.8,686.4 L1037.7,693.1 M1037.7,693.1 L1044.5,699.9 M1044.5,699.9 L1051.4,706.7 M1058.3,713.4 L1065.1,720.2 M1065.1,720.2 L1072.0,727.0 M1072.0,727.0 L1078.8,733.7 M1078.8,733.7 L1085.7,740.5 M1085.7,740.5 L1092.6,747.3 M1092.6,747.3 L1099.4,754.0 M1120.0,774.3 L1126.9,781.1 M1126.9,781.1 L1133.7,787.9 M1133.7,787.9 L1140.6,794.6 M1147.5,801.4 L1154.3,808.2 M963.3,594.5 L970.2,601.3 M970.2,601.3 L977.0,608.0 M977.0,608.0 L983.9,614.8 M983.9,614.8 L990.7,621.6 M990.7,621.6 L997.6,628.3 M997.6,628.3 L1004.5,635.1 M1004.5,635.1 L1011.3,641.9 M1018.2,648.6 L1025.1,655.4 M1025.1,655.4 L1031.9,662.2 M1031.9,662.2 L1038.8,668.9 M1038.8,668.9 L1045.6,675.7 M1045.6,675.7 L1052.5,682.5 M1052.5,682.5 L1059.4,689.2 M1059.4,689.2 L1066.2,696.0 M1066.2,696.0 L1073.1,702.8 M1073.1,702.8 L1080.0,709.6 M1080.0,709.6 L1086.8,716.3 M1093.7,723.1 L1100.5,729.9 M1107.4,736.6 L1114.3,743.4 M1114.3,743.4 L1121.1,750.2 M1121.1,750.2 L1128.0,756.9 M1128.0,756.9 L1134.8,763.7 M1134.8,763.7 L1141.7,770.5 M1141.7,770.5 L1148.6,777.2 M1148.6,777.2 L1155.4,784.0 M1176.0,804.3 L1182.9,811.1 M964.4,570.3 L971.3,577.1 M971.3,577.1 L978.1,583.9 M978.1,583.9 L985.0,590.6 M991.8,597.4 L998.7,604.2 M998.7,604.2 L1005.6,610.9 M1019.3,624.5 L1026.2,631.2 M1033.0,638.0 L1039.9,644.8 M1039.9,644.8 L1046.7,651.5 M1046.7,651.5 L1053.6,658.3 M1053.6,658.3 L1060.5,665.1 M1060.5,665.1 L1067.3,671.8 M1067.3,671.8 L1074.2,678.6 M1074.2,678.6 L1081.1,685.4 M1087.9,692.1 L1094.8,698.9 M1094.8,698.9 L1101.6,705.7 M1115.4,719.2 L1122.2,726.0 M1122.2,726.0 L1129.1,732.7 M1129.1,732.7 L1136.0,739.5 M1136.0,739.5 L1142.8,746.3 M1142.8,746.3 L1149.7,753.0 M1156.5,759.8 L1163.4,766.6 M1163.4,766.6 L1170.3,773.3 M1170.3,773.3 L1177.1,780.1 M1177.1,780.1 L1184.0,786.9 M1184.0,786.9 L1190.9,793.6 M1190.9,793.6 L1197.7,800.4 M1197.7,800.4 L1204.6,807.2 M1204.6,807.2 L1211.4,813.9 M965.5,546.1 L972.4,552.9 M979.2,559.7 L986.1,566.4 M986.1,566.4 L992.9,573.2 M992.9,573.2 L999.8,580.0 M1006.7,586.7 L1013.5,593.5 M1020.4,600.3 L1027.3,607.0 M1027.3,607.0 L1034.1,613.8 M1047.8,627.3 L1054.7,634.1 M1054.7,634.1 L1061.6,640.9 M1061.6,640.9 L1068.4,647.6 M1068.4,647.6 L1075.3,654.4 M1082.2,661.2 L1089.0,667.9 M1089.0,667.9 L1095.9,674.7 M1102.7,681.5 L1109.6,688.2 M1109.6,688.2 L1116.5,695.0 M1116.5,695.0 L1123.3,701.8 M1130.2,708.5 L1137.1,715.3 M1137.1,715.3 L1143.9,722.1 M1143.9,722.1 L1150.8,728.8 M1150.8,728.8 L1157.6,735.6 M1157.6,735.6 L1164.5,742.4 M1164.5,742.4 L1171.4,749.1 M1178.2,755.9 L1185.1,762.7 M1192.0,769.4 L1198.8,776.2 M1198.8,776.2 L1205.7,783.0 M1205.7,783.0 L1212.5,789.7 M1212.5,789.7 L1219.4,796.5 M1219.4,796.5 L1226.3,803.3 M1226.3,803.3 L1233.1,810.0 M966.6,521.9 L973.5,528.7 M973.5,528.7 L980.3,535.5 M980.3,535.5 L987.2,542.2 M987.2,542.2 L994.1,549.0 M994.1,549.0 L1000.9,555.8 M1000.9,555.8 L1007.8,562.5 M1007.8,562.5 L1014.6,569.3 M1014.6,569.3 L1021.5,576.1 M1021.5,576.1 L1028.4,582.8 M1035.2,589.6 L1042.1,596.4 M1042.1,596.4 L1049.0,603.1 M1049.0,603.1 L1055.8,609.9 M1055.8,609.9 L1062.7,616.7 M1062.7,616.7 L1069.5,623.4 M1069.5,623.4 L1076.4,630.2 M1076.4,630.2 L1083.3,637.0 M1083.3,637.0 L1090.1,643.7 M1090.1,643.7 L1097.0,650.5 M1097.0,650.5 L1103.9,657.3 M1103.9,657.3 L1110.7,664.0 M1110.7,664.0 L1117.6,670.8 M1117.6,670.8 L1124.4,677.6 M1124.4,677.6 L1131.3,684.3 M1131.3,684.3 L1138.2,691.1 M1138.2,691.1 L1145.0,697.9 M1145.0,697.9 L1151.9,704.7 M1151.9,704.7 L1158.8,711.4 M1158.8,711.4 L1165.6,718.2 M1165.6,718.2 L1172.5,725.0 M1172.5,725.0 L1179.3,731.7 M1179.3,731.7 L1186.2,738.5 M1186.2,738.5 L1193.1,745.3 M1193.1,745.3 L1199.9,752.0 M1206.8,758.8 L1213.7,765.6 M1234.2,785.9 L1241.1,792.6 M1241.1,792.6 L1248.0,799.4 M974.6,504.5 L981.4,511.3 M981.4,511.3 L988.3,518.0 M988.3,518.0 L995.2,524.8 M995.2,524.8 L1002.0,531.6 M1008.9,538.3 L1015.7,545.1 M1015.7,545.1 L1022.6,551.9 M1022.6,551.9 L1029.5,558.7 M1029.5,558.7 L1036.3,565.4 M1036.3,565.4 L1043.2,572.2 M1050.1,579.0 L1056.9,585.7 M1056.9,585.7 L1063.8,592.5 M1063.8,592.5 L1070.6,599.3 M1077.5,606.0 L1084.4,612.8 M1098.1,626.3 L1105.0,633.1 M1105.0,633.1 L1111.8,639.9 M1111.8,639.9 L1118.7,646.6 M1118.7,646.6 L1125.5,653.4 M1125.5,653.4 L1132.4,660.2 M1132.4,660.2 L1139.3,666.9 M1153.0,680.5 L1159.9,687.2 M1159.9,687.2 L1166.7,694.0 M1166.7,694.0 L1173.6,700.8 M1173.6,700.8 L1180.4,707.5 M1187.3,714.3 L1194.2,721.1 M1194.2,721.1 L1201.0,727.8 M1201.0,727.8 L1207.9,734.6 M1207.9,734.6 L1214.8,741.4 M1214.8,741.4 L1221.6,748.1 M1221.6,748.1 L1228.5,754.9 M1228.5,754.9 L1235.3,761.7 M1235.3,761.7 L1242.2,768.4 M1242.2,768.4 L1249.1,775.2 M1255.9,782.0 L1262.8,788.7 M1262.8,788.7 L1269.7,795.5 M1269.7,795.5 L1276.5,802.3 M1276.5,802.3 L1283.4,809.0 M1283.4,809.0 L1290.2,815.8 M968.8,473.6 L975.7,480.3 M975.7,480.3 L982.5,487.1 M982.5,487.1 L989.4,493.9 M996.3,500.6 L1003.1,507.4 M1016.9,520.9 L1023.7,527.7 M1023.7,527.7 L1030.6,534.5 M1030.6,534.5 L1037.4,541.2 M1044.3,548.0 L1051.2,554.8 M1051.2,554.8 L1058.0,561.5 M1058.0,561.5 L1064.9,568.3 M1071.8,575.1 L1078.6,581.8 M1078.6,581.8 L1085.5,588.6 M1085.5,588.6 L1092.3,595.4 M1092.3,595.4 L1099.2,602.1 M1099.2,602.1 L1106.1,608.9 M1106.1,608.9 L1112.9,615.7 M1112.9,615.7 L1119.8,622.4 M1119.8,622.4 L1126.6,629.2 M1126.6,629.2 L1133.5,636.0 M1140.4,642.7 L1147.2,649.5 M1154.1,656.3 L1161.0,663.0 M1161.0,663.0 L1167.8,669.8 M1167.8,669.8 L1174.7,676.6 M1174.7,676.6 L1181.5,683.3 M1181.5,683.3 L1188.4,690.1 M1188.4,690.1 L1195.3,696.9 M1195.3,696.9 L1202.1,703.6 M1202.1,703.6 L1209.0,710.4 M1215.9,717.2 L1222.7,723.9 M1229.6,730.7 L1236.4,737.5 M1236.4,737.5 L1243.3,744.2 M1243.3,744.2 L1250.2,751.0 M1250.2,751.0 L1257.0,757.8 M1257.0,757.8 L1263.9,764.5 M1263.9,764.5 L1270.8,771.3 M1270.8,771.3 L1277.6,778.1 M1277.6,778.1 L1284.5,784.8 M1284.5,784.8 L1291.3,791.6 M1291.3,791.6 L1298.2,798.4 M1298.2,798.4 L1305.1,805.1 M1305.1,805.1 L1311.9,811.9 M990.5,469.7 L997.4,476.4 M997.4,476.4 L1004.2,483.2 M1011.1,490.0 L1018.0,496.7 M1018.0,496.7 L1024.8,503.5 M1024.8,503.5 L1031.7,510.3 M1038.5,517.0 L1045.4,523.8 M1045.4,523.8 L1052.3,530.6 M1052.3,530.6 L1059.1,537.3 M1066.0,544.1 L1072.9,550.9 M1072.9,550.9 L1079.7,557.6 M1079.7,557.6 L1086.6,564.4 M1093.4,571.2 L1100.3,577.9 M1100.3,577.9 L1107.2,584.7 M1107.2,584.7 L1114.0,591.5 M1127.8,605.0 L1134.6,611.8 M1134.6,611.8 L1141.5,618.5 M1141.5,618.5 L1148.3,625.3 M1155.2,632.1 L1162.1,638.8 M1168.9,645.6 L1175.8,652.4 M1175.8,652.4 L1182.7,659.1 M1189.5,665.9 L1196.4,672.7 M1203.2,679.4 L1210.1,686.2 M1210.1,686.2 L1217.0,693.0 M1217.0,693.0 L1223.8,699.8 M1223.8,699.8 L1230.7,706.5 M1230.7,706.5 L1237.6,713.3 M1244.4,720.1 L1251.3,726.8 M1258.1,733.6 L1265.0,740.4 M1265.0,740.4 L1271.9,747.1 M1278.7,753.9 L1285.6,760.7 M1285.6,760.7 L1292.5,767.4 M1292.5,767.4 L1299.3,774.2 M1299.3,774.2 L1306.2,781.0 M1306.2,781.0 L1313.0,787.7 M1313.0,787.7 L1319.9,794.5 M1326.8,801.3 L1333.6,808.0 M1333.6,808.0 L1340.5,814.8 M1019.1,472.5 L1025.9,479.3 M1025.9,479.3 L1032.8,486.1 M1032.8,486.1 L1039.6,492.8 M1039.6,492.8 L1046.5,499.6 M1046.5,499.6 L1053.4,506.4 M1053.4,506.4 L1060.2,513.1 M1060.2,513.1 L1067.1,519.9 M1067.1,519.9 L1074.0,526.7 M1074.0,526.7 L1080.8,533.4 M1080.8,533.4 L1087.7,540.2 M1087.7,540.2 L1094.5,547.0 M1094.5,547.0 L1101.4,553.8 M1101.4,553.8 L1108.3,560.5 M1108.3,560.5 L1115.1,567.3 M1115.1,567.3 L1122.0,574.1 M1122.0,574.1 L1128.9,580.8 M1128.9,580.8 L1135.7,587.6 M1142.6,594.4 L1149.4,601.1 M1149.4,601.1 L1156.3,607.9 M1156.3,607.9 L1163.2,614.7 M1163.2,614.7 L1170.0,621.4 M1170.0,621.4 L1176.9,628.2 M1176.9,628.2 L1183.8,635.0 M1183.8,635.0 L1190.6,641.7 M1190.6,641.7 L1197.5,648.5 M1197.5,648.5 L1204.3,655.3 M1204.3,655.3 L1211.2,662.0 M1211.2,662.0 L1218.1,668.8 M1224.9,675.6 L1231.8,682.3 M1231.8,682.3 L1238.7,689.1 M1238.7,689.1 L1245.5,695.9 M1245.5,695.9 L1252.4,702.6 M1252.4,702.6 L1259.2,709.4 M1266.1,716.2 L1273.0,722.9 M1279.8,729.7 L1286.7,736.5 M1286.7,736.5 L1293.6,743.2 M1293.6,743.2 L1300.4,750.0 M1307.3,756.8 L1314.1,763.5 M1314.1,763.5 L1321.0,770.3 M1321.0,770.3 L1327.9,777.1 M1327.9,777.1 L1334.7,783.8 M1334.7,783.8 L1341.6,790.6 M1341.6,790.6 L1348.5,797.4 M1348.5,797.4 L1355.3,804.1 M1355.3,804.1 L1362.2,810.9 M1040.8,468.7 L1047.6,475.4 M1047.6,475.4 L1054.5,482.2 M1054.5,482.2 L1061.3,489.0 M1061.3,489.0 L1068.2,495.7 M1068.2,495.7 L1075.1,502.5 M1081.9,509.3 L1088.8,516.0 M1088.8,516.0 L1095.7,522.8 M1102.5,529.6 L1109.4,536.3 M1109.4,536.3 L1116.2,543.1 M1123.1,549.9 L1130.0,556.6 M1130.0,556.6 L1136.8,563.4 M1136.8,563.4 L1143.7,570.2 M1143.7,570.2 L1150.6,576.9 M1150.6,576.9 L1157.4,583.7 M1157.4,583.7 L1164.3,590.5 M1164.3,590.5 L1171.1,597.2 M1171.1,597.2 L1178.0,604.0 M1178.0,604.0 L1184.9,610.8 M1184.9,610.8 L1191.7,617.5 M1191.7,617.5 L1198.6,624.3 M1198.6,624.3 L1205.4,631.1 M1205.4,631.1 L1212.3,637.8 M1219.2,644.6 L1226.0,651.4 M1226.0,651.4 L1232.9,658.1 M1232.9,658.1 L1239.8,664.9 M1239.8,664.9 L1246.6,671.7 M1246.6,671.7 L1253.5,678.4 M1253.5,678.4 L1260.3,685.2 M1260.3,685.2 L1267.2,692.0 M1267.2,692.0 L1274.1,698.7 M1274.1,698.7 L1280.9,705.5 M1280.9,705.5 L1287.8,712.3 M1287.8,712.3 L1294.7,719.0 M1294.7,719.0 L1301.5,725.8 M1301.5,725.8 L1308.4,732.6 M1308.4,732.6 L1315.2,739.3 M1322.1,746.1 L1329.0,752.9 M1329.0,752.9 L1335.8,759.6 M1335.8,759.6 L1342.7,766.4 M1342.7,766.4 L1349.6,773.2 M1349.6,773.2 L1356.4,779.9 M1356.4,779.9 L1363.3,786.7 M1363.3,786.7 L1370.1,793.5 M1383.9,807.0 L1390.7,813.8 M1069.3,471.5 L1076.2,478.3 M1076.2,478.3 L1083.0,485.1 M1083.0,485.1 L1089.9,491.8 M1089.9,491.8 L1096.8,498.6 M1096.8,498.6 L1103.6,505.4 M1103.6,505.4 L1110.5,512.1 M1110.5,512.1 L1117.3,518.9 M1117.3,518.9 L1124.2,525.7 M1124.2,525.7 L1131.1,532.4 M1131.1,532.4 L1137.9,539.2 M1144.8,546.0 L1151.7,552.7 M1151.7,552.7 L1158.5,559.5 M1158.5,559.5 L1165.4,566.3 M1172.2,573.0 L1179.1,579.8 M1179.1,579.8 L1186.0,586.6 M1199.7,600.1 L1206.6,606.9 M1206.6,606.9 L1213.4,613.6 M1213.4,613.6 L1220.3,620.4 M1234.0,633.9 L1240.9,640.7 M1240.9,640.7 L1247.7,647.5 M1247.7,647.5 L1254.6,654.2 M1261.5,661.0 L1268.3,667.8 M1268.3,667.8 L1275.2,674.6 M1282.0,681.3 L1288.9,688.1 M1288.9,688.1 L1295.8,694.9 M1295.8,694.9 L1302.6,701.6 M1302.6,701.6 L1309.5,708.4 M1309.5,708.4 L1316.4,715.2 M1316.4,715.2 L1323.2,721.9 M1323.2,721.9 L1330.1,728.7 M1336.9,735.5 L1343.8,742.2 M1343.8,742.2 L1350.7,749.0 M1350.7,749.0 L1357.5,755.8 M1357.5,755.8 L1364.4,762.5 M1364.4,762.5 L1371.3,769.3 M1371.3,769.3 L1378.1,776.1 M1378.1,776.1 L1385.0,782.8 M1385.0,782.8 L1391.8,789.6 M1398.7,796.4 L1405.6,803.1 M1412.4,809.9 L1419.3,816.7 M1104.7,481.2 L1111.6,487.9 M1111.6,487.9 L1118.4,494.7 M1118.4,494.7 L1125.3,501.5 M1125.3,501.5 L1132.2,508.2 M1139.0,515.0 L1145.9,521.8 M1145.9,521.8 L1152.8,528.6 M1152.8,528.6 L1159.6,535.3 M1159.6,535.3 L1166.5,542.1 M1166.5,542.1 L1173.3,548.9 M1173.3,548.9 L1180.2,555.6 M1180.2,555.6 L1187.1,562.4 M1187.1,562.4 L1193.9,569.2 M1200.8,575.9 L1207.7,582.7 M1207.7,582.7 L1214.5,589.5 M1221.4,596.2 L1228.2,603.0 M1228.2,603.0 L1235.1,609.8 M1235.1,609.8 L1242.0,616.5 M1242.0,616.5 L1248.8,623.3 M1248.8,623.3 L1255.7,630.1 M1255.7,630.1 L1262.6,636.8 M1262.6,636.8 L1269.4,643.6 M1269.4,643.6 L1276.3,650.4 M1283.1,657.1 L1290.0,663.9 M1290.0,663.9 L1296.9,670.7 M1296.9,670.7 L1303.7,677.4 M1303.7,677.4 L1310.6,684.2 M1310.6,684.2 L1317.5,691.0 M1317.5,691.0 L1324.3,697.7 M1324.3,697.7 L1331.2,704.5 M1331.2,704.5 L1338.0,711.3 M1338.0,711.3 L1344.9,718.0 M1344.9,718.0 L1351.8,724.8 M1351.8,724.8 L1358.6,731.6 M1358.6,731.6 L1365.5,738.3 M1365.5,738.3 L1372.4,745.1 M1372.4,745.1 L1379.2,751.9 M1379.2,751.9 L1386.1,758.6 M1386.1,758.6 L1392.9,765.4 M1392.9,765.4 L1399.8,772.2 M1399.8,772.2 L1406.7,778.9 M1406.7,778.9 L1413.5,785.7 M1413.5,785.7 L1420.4,792.5 M1119.6,470.5 L1126.4,477.3 M1126.4,477.3 L1133.3,484.1 M1133.3,484.1 L1140.1,490.8 M1140.1,490.8 L1147.0,497.6 M1147.0,497.6 L1153.9,504.4 M1153.9,504.4 L1160.7,511.1 M1160.7,511.1 L1167.6,517.9 M1167.6,517.9 L1174.5,524.7 M1181.3,531.4 L1188.2,538.2 M1188.2,538.2 L1195.0,545.0 M1195.0,545.0 L1201.9,551.7 M1208.8,558.5 L1215.6,565.3 M1229.4,578.8 L1236.2,585.6 M1236.2,585.6 L1243.1,592.3 M1243.1,592.3 L1249.9,599.1 M1249.9,599.1 L1256.8,605.9 M1256.8,605.9 L1263.7,612.6 M1263.7,612.6 L1270.5,619.4 M1270.5,619.4 L1277.4,626.2 M1277.4,626.2 L1284.2,632.9 M1284.2,632.9 L1291.1,639.7 M1291.1,639.7 L1298.0,646.5 M1298.0,646.5 L1304.8,653.2 M1304.8,653.2 L1311.7,660.0 M1311.7,660.0 L1318.6,666.8 M1318.6,666.8 L1325.4,673.5 M1325.4,673.5 L1332.3,680.3 M1352.9,700.6 L1359.7,707.4 M1359.7,707.4 L1366.6,714.1 M1366.6,714.1 L1373.5,720.9 M1373.5,720.9 L1380.3,727.7 M1380.3,727.7 L1387.2,734.4 M1387.2,734.4 L1394.0,741.2 M1394.0,741.2 L1400.9,748.0 M1400.9,748.0 L1407.8,754.7 M1407.8,754.7 L1414.6,761.5 M1414.6,761.5 L1421.5,768.3 M1148.1,473.4 L1155.0,480.2 M1155.0,480.2 L1161.8,486.9 M1161.8,486.9 L1168.7,493.7 M1168.7,493.7 L1175.6,500.5 M1182.4,507.2 L1189.3,514.0 M1203.0,527.5 L1209.9,534.3 M1209.9,534.3 L1216.7,541.1 M1216.7,541.1 L1223.6,547.8 M1223.6,547.8 L1230.5,554.6 M1237.3,561.4 L1244.2,568.1 M1244.2,568.1 L1251.0,574.9 M1251.0,574.9 L1257.9,581.7 M1257.9,581.7 L1264.8,588.4 M1264.8,588.4 L1271.6,595.2 M1271.6,595.2 L1278.5,602.0 M1285.4,608.7 L1292.2,615.5 M1292.2,615.5 L1299.1,622.3 M1319.7,642.6 L1326.5,649.3 M1333.4,656.1 L1340.3,662.9 M1347.1,669.7 L1354.0,676.4 M1367.7,690.0 L1374.6,696.7 M1374.6,696.7 L1381.4,703.5 M1381.4,703.5 L1388.3,710.3 M1402.0,723.8 L1408.9,730.6 M1408.9,730.6 L1415.7,737.3 M1169.8,469.5 L1176.7,476.3 M1176.7,476.3 L1183.5,483.0 M1190.4,489.8 L1197.2,496.6 M1197.2,496.6 L1204.1,503.3 M1204.1,503.3 L1211.0,510.1 M1211.0,510.1 L1217.8,516.9 M1217.8,516.9 L1224.7,523.7 M1224.7,523.7 L1231.6,530.4 M1231.6,530.4 L1238.4,537.2 M1252.1,550.7 L1259.0,557.5 M1259.0,557.5 L1265.9,564.3 M1272.7,571.0 L1279.6,577.8 M1279.6,577.8 L1286.5,584.6 M1293.3,591.3 L1300.2,598.1 M1300.2,598.1 L1307.0,604.9 M1313.9,611.6 L1320.8,618.4 M1320.8,618.4 L1327.6,625.2 M1327.6,625.2 L1334.5,631.9 M1334.5,631.9 L1341.4,638.7 M1348.2,645.5 L1355.1,652.2 M1355.1,652.2 L1361.9,659.0 M1361.9,659.0 L1368.8,665.8 M1368.8,665.8 L1375.7,672.5 M1375.7,672.5 L1382.5,679.3 M1382.5,679.3 L1389.4,686.1 M1389.4,686.1 L1396.3,692.8 M1396.3,692.8 L1403.1,699.6 M1403.1,699.6 L1410.0,706.4 M1410.0,706.4 L1416.8,713.1 M1198.4,472.4 L1205.2,479.2 M1212.1,485.9 L1218.9,492.7 M1218.9,492.7 L1225.8,499.5 M1225.8,499.5 L1232.7,506.2 M1232.7,506.2 L1239.5,513.0 M1239.5,513.0 L1246.4,519.8 M1246.4,519.8 L1253.3,526.5 M1253.3,526.5 L1260.1,533.3 M1260.1,533.3 L1267.0,540.1 M1267.0,540.1 L1273.8,546.8 M1273.8,546.8 L1280.7,553.6 M1280.7,553.6 L1287.6,560.4 M1287.6,560.4 L1294.4,567.1 M1294.4,567.1 L1301.3,573.9 M1301.3,573.9 L1308.2,580.7 M1308.2,580.7 L1315.0,587.4 M1315.0,587.4 L1321.9,594.2 M1321.9,594.2 L1328.7,601.0 M1335.6,607.7 L1342.5,614.5 M1342.5,614.5 L1349.3,621.3 M1349.3,621.3 L1356.2,628.0 M1356.2,628.0 L1363.1,634.8 M1363.1,634.8 L1369.9,641.6 M1376.8,648.3 L1383.6,655.1 M1383.6,655.1 L1390.5,661.9 M1390.5,661.9 L1397.4,668.6 M1397.4,668.6 L1404.2,675.4 M1404.2,675.4 L1411.1,682.2 M1411.1,682.2 L1417.9,688.9 M1220.0,468.5 L1226.9,475.3 M1226.9,475.3 L1233.8,482.0 M1233.8,482.0 L1240.6,488.8 M1240.6,488.8 L1247.5,495.6 M1254.4,502.3 L1261.2,509.1 M1261.2,509.1 L1268.1,515.9 M1268.1,515.9 L1274.9,522.6 M1274.9,522.6 L1281.8,529.4 M1281.8,529.4 L1288.7,536.2 M1288.7,536.2 L1295.5,542.9 M1295.5,542.9 L1302.4,549.7 M1302.4,549.7 L1309.3,556.5 M1309.3,556.5 L1316.1,563.2 M1316.1,563.2 L1323.0,570.0 M1323.0,570.0 L1329.8,576.8 M1329.8,576.8 L1336.7,583.5 M1336.7,583.5 L1343.6,590.3 M1343.6,590.3 L1350.4,597.1 M1357.3,603.8 L1364.2,610.6 M1364.2,610.6 L1371.0,617.4 M1371.0,617.4 L1377.9,624.1 M1377.9,624.1 L1384.7,630.9 M1384.7,630.9 L1391.6,637.7 M1391.6,637.7 L1398.5,644.4 M1398.5,644.4 L1405.3,651.2 M1405.3,651.2 L1412.2,658.0 M1412.2,658.0 L1419.1,664.8 M1269.2,491.7 L1276.0,498.4 M1276.0,498.4 L1282.9,505.2 M1282.9,505.2 L1289.8,512.0 M1289.8,512.0 L1296.6,518.8 M1296.6,518.8 L1303.5,525.5 M1317.2,539.1 L1324.1,545.8 M1324.1,545.8 L1330.9,552.6 M1337.8,559.4 L1344.7,566.1 M1344.7,566.1 L1351.5,572.9 M1358.4,579.7 L1365.3,586.4 M1365.3,586.4 L1372.1,593.2 M1372.1,593.2 L1379.0,600.0 M1392.7,613.5 L1399.6,620.3 M1399.6,620.3 L1406.4,627.0 M1406.4,627.0 L1413.3,633.8 M1413.3,633.8 L1420.2,640.6 M1277.2,474.3 L1284.0,481.0 M1284.0,481.0 L1290.9,487.8 M1290.9,487.8 L1297.7,494.6 M1297.7,494.6 L1304.6,501.3 M1304.6,501.3 L1311.5,508.1 M1311.5,508.1 L1318.3,514.9 M1318.3,514.9 L1325.2,521.6 M1325.2,521.6 L1332.1,528.4 M1338.9,535.2 L1345.8,541.9 M1366.4,562.2 L1373.2,569.0 M1373.2,569.0 L1380.1,575.8 M1380.1,575.8 L1387.0,582.5 M1387.0,582.5 L1393.8,589.3 M1393.8,589.3 L1400.7,596.1 M1407.5,602.8 L1414.4,609.6 M1414.4,609.6 L1421.3,616.4 M1305.7,477.1 L1312.6,483.9 M1312.6,483.9 L1319.4,490.7 M1319.4,490.7 L1326.3,497.4 M1326.3,497.4 L1333.2,504.2 M1333.2,504.2 L1340.0,511.0 M1340.0,511.0 L1346.9,517.7 M1346.9,517.7 L1353.7,524.5 M1353.7,524.5 L1360.6,531.3 M1367.5,538.0 L1374.3,544.8 M1374.3,544.8 L1381.2,551.6 M1381.2,551.6 L1388.1,558.3 M1394.9,565.1 L1401.8,571.9 M1401.8,571.9 L1408.6,578.6 M1408.6,578.6 L1415.5,585.4 M1327.4,473.2 L1334.3,480.0 M1334.3,480.0 L1341.1,486.8 M1348.0,493.6 L1354.8,500.3 M1354.8,500.3 L1361.7,507.1 M1361.7,507.1 L1368.6,513.9 M1368.6,513.9 L1375.4,520.6 M1389.2,534.2 L1396.0,540.9 M1396.0,540.9 L1402.9,547.7 M1402.9,547.7 L1409.7,554.5 M1409.7,554.5 L1416.6,561.2 M1349.1,469.4 L1356.0,476.1 M1356.0,476.1 L1362.8,482.9 M1369.7,489.7 L1376.5,496.4 M1376.5,496.4 L1383.4,503.2 M1390.3,510.0 L1397.1,516.7 M1404.0,523.5 L1410.9,530.3 M1377.6,472.2 L1384.5,479.0 M1391.4,485.8 L1398.2,492.5 M1412.0,506.1 L1418.8,512.8 M1399.3,468.3 L1406.2,475.1 M1406.2,475.1 L1413.1,481.9 M1413.1,481.9 L1419.9,488.7 "/></g>
</g></defs>
<g fill="none" stroke-linejoin="round" stroke-linecap="round">
<use href="#rdp" stroke="#f3e9ac" stroke-width="2.5"/>
<use href="#rdp" stroke="#b7b5af" stroke-width="1.4"/>
</g>
<g fill="#d8d8d0" stroke="#555" stroke-width="0.6">
</g>
<g fill="#7f9fcf" stroke="#111" stroke-width="1">
<circle cx="1178.7" cy="603.8" r="2.7"/>
<circle cx="1211.9" cy="731.9" r="2.7"/>
<circle cx="1510.7" cy="821.9" r="2.7"/>
<circle cx="1520.8" cy="983.8" r="2.7"/>
</g>
</svg>
</body></html>
